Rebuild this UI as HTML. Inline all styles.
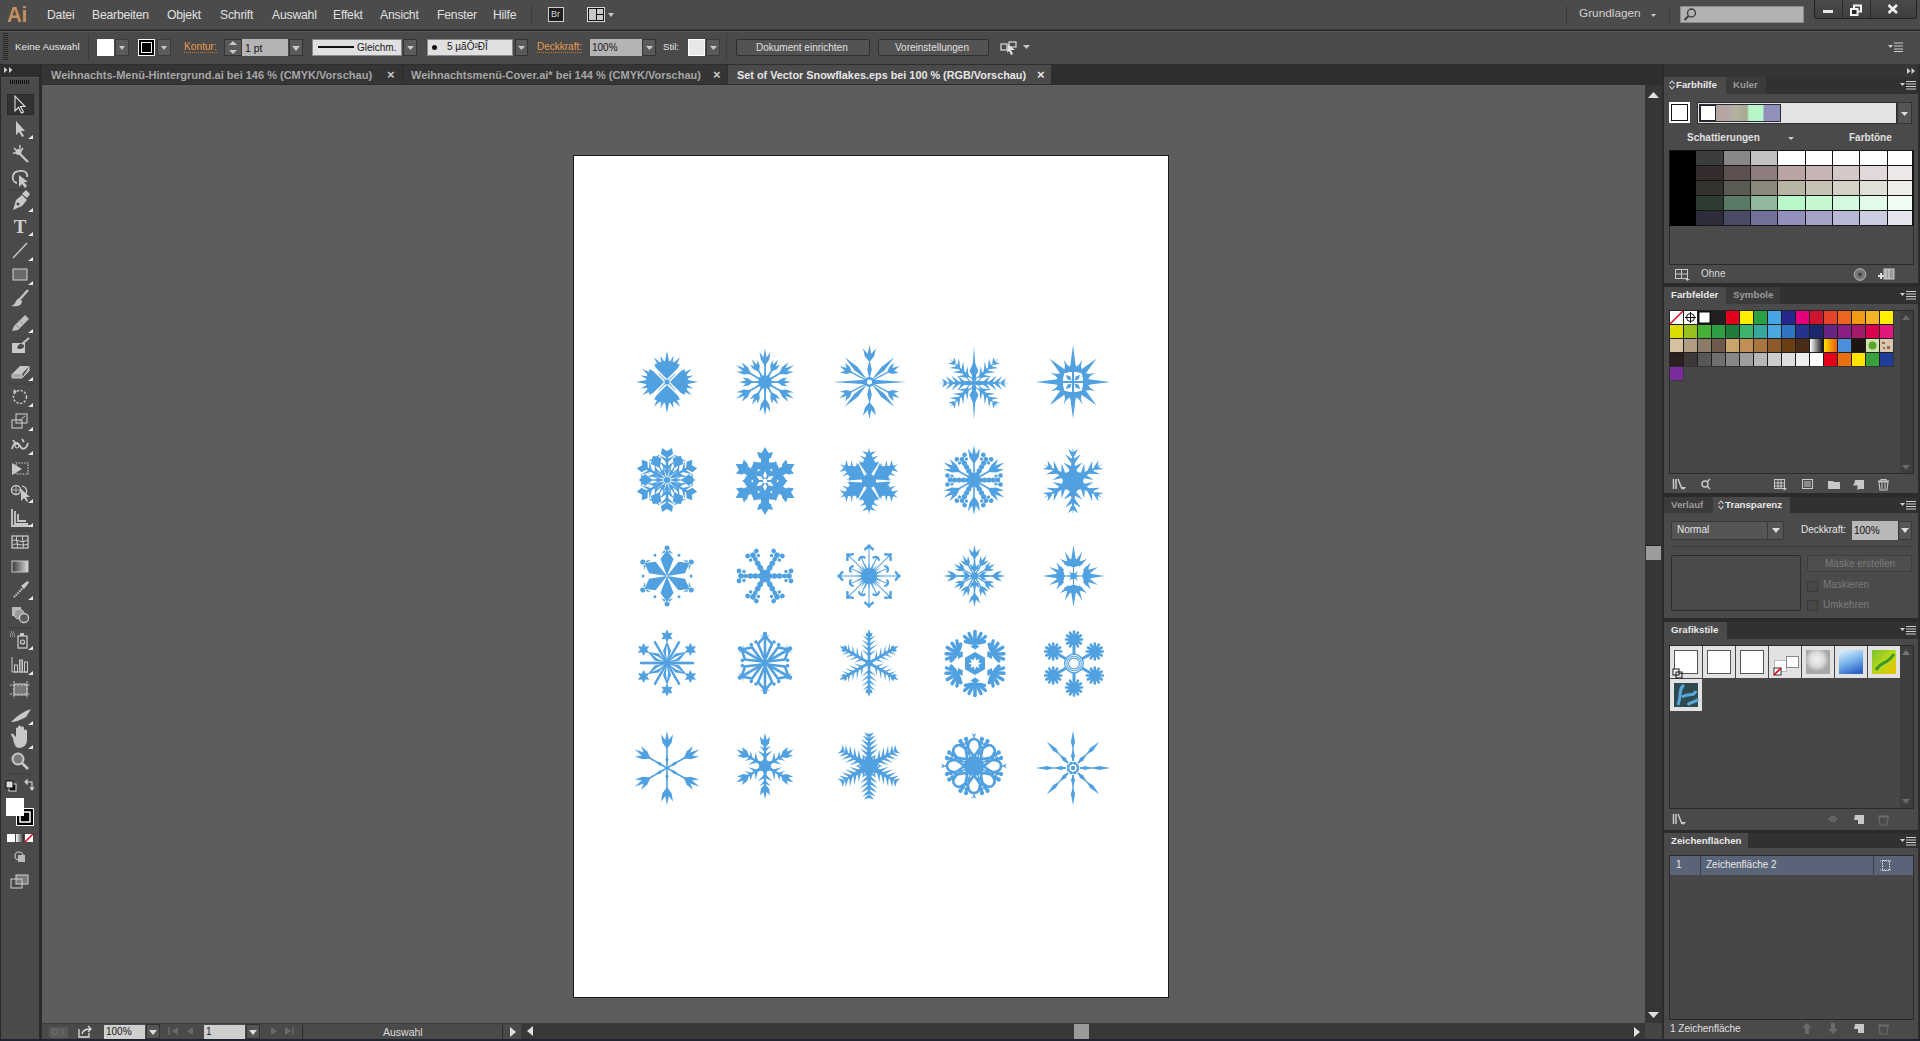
<!DOCTYPE html>
<html><head><meta charset="utf-8"><style>
*{margin:0;padding:0;box-sizing:border-box}
html,body{width:1920px;height:1041px;overflow:hidden;background:#5e5e5e;font-family:"Liberation Sans",sans-serif}
.a{position:absolute}
.t{position:absolute;white-space:nowrap;line-height:1}
</style></head><body>
<div class="a" style="left:0px;top:0px;width:1920px;height:29px;background:#4b4b4b"></div><div class="a" style="left:0px;top:25px;width:1920px;height:1px;background:#424242"></div><div class="a" style="left:0px;top:26px;width:1920px;height:1px;background:#525252"></div><div class="a" style="left:0px;top:29px;width:1920px;height:1px;background:#393939"></div><div class="a" style="left:0px;top:30px;width:1920px;height:1px;background:#262626"></div><div class="a" style="left:0px;top:31px;width:1920px;height:1px;background:#5a5a5a"></div><div class="t" style="left:7px;top:3.5px;font-size:22px;color:#c4915f;font-weight:bold;letter-spacing:-0.3px;transform:scaleX(0.93);transform-origin:0 0">Ai</div><div class="t" style="left:47px;top:9px;font-size:12.2px;letter-spacing:-0.2px;color:#e0e0e0">Datei</div><div class="t" style="left:92px;top:9px;font-size:12.2px;letter-spacing:-0.2px;color:#e0e0e0">Bearbeiten</div><div class="t" style="left:167px;top:9px;font-size:12.2px;letter-spacing:-0.2px;color:#e0e0e0">Objekt</div><div class="t" style="left:220px;top:9px;font-size:12.2px;letter-spacing:-0.2px;color:#e0e0e0">Schrift</div><div class="t" style="left:272px;top:9px;font-size:12.2px;letter-spacing:-0.2px;color:#e0e0e0">Auswahl</div><div class="t" style="left:333px;top:9px;font-size:12.2px;letter-spacing:-0.2px;color:#e0e0e0">Effekt</div><div class="t" style="left:380px;top:9px;font-size:12.2px;letter-spacing:-0.2px;color:#e0e0e0">Ansicht</div><div class="t" style="left:437px;top:9px;font-size:12.2px;letter-spacing:-0.2px;color:#e0e0e0">Fenster</div><div class="t" style="left:493px;top:9px;font-size:12.2px;letter-spacing:-0.2px;color:#e0e0e0">Hilfe</div><div class="a" style="left:531px;top:6px;width:1px;height:18px;background:#3a3a3a"></div><div class="a" style="left:548px;top:7px;width:16px;height:15px;border:1px solid #d0d0d0;background:#1e1e1e"></div><div class="t" style="left:551px;top:10px;font-size:9px;color:#d8d8d8">Br</div><div class="a" style="left:587px;top:7px;width:18px;height:15px;border:1px solid #d8d8d8;background:#111"></div><div class="a" style="left:589px;top:9px;width:7px;height:11px;background:#c8c8c8"></div><div class="a" style="left:597px;top:9px;width:6px;height:5px;background:#c8c8c8"></div><div class="a" style="left:597px;top:15px;width:6px;height:5px;background:#c8c8c8"></div><svg class="a" style="left:608px;top:13px" width="6" height="4"><path d="M0 0H6L3.0 4Z" fill="#c8c8c8"/></svg><div class="a" style="left:1566px;top:6px;width:1px;height:18px;background:#3a3a3a"></div><div class="t" style="left:1579px;top:8px;font-size:11.8px;color:#d0d0d0">Grundlagen</div><svg class="a" style="left:1651px;top:14px" width="5" height="3"><path d="M0 0H5L2.5 3Z" fill="#c8c8c8"/></svg><div class="a" style="left:1669px;top:6px;width:1px;height:18px;background:#3a3a3a"></div><div class="a" style="left:1680px;top:6px;width:124px;height:17px;background:#b2b2b2;border:1px solid #8a8a8a"></div><svg class="a" style="left:1682px;top:7px" width="16" height="16"><circle cx="9.5" cy="6" r="4" fill="none" stroke="#3a3a3a" stroke-width="1.3"/><path d="M6.5 9L2.5 13" stroke="#3a3a3a" stroke-width="1.8"/></svg><div class="a" style="left:1814px;top:0px;width:103px;height:19px;background:linear-gradient(#4a4a4a,#3e3e3e);border:1px solid #222;border-top:none;border-radius:0 0 3px 3px"></div><div class="a" style="left:1842px;top:0px;width:1px;height:18px;background:#2a2a2a"></div><div class="a" style="left:1870px;top:0px;width:1px;height:18px;background:#2a2a2a"></div><div class="a" style="left:1823px;top:10px;width:10px;height:3px;background:#e8e8e8"></div><svg class="a" style="left:1849px;top:4px" width="14" height="12"><rect x="5" y="1.5" width="7" height="6" fill="none" stroke="#f0f0f0" stroke-width="2"/><rect x="2" y="5" width="6.5" height="6" fill="#222" stroke="#f0f0f0" stroke-width="2"/></svg><svg class="a" style="left:1887px;top:4px" width="12" height="10"><path d="M1.5 1L10 9M10 1L1.5 9" stroke="#f0f0f0" stroke-width="2.6"/></svg><div class="a" style="left:0px;top:32px;width:1920px;height:32px;background:#4a4a4a"></div><div class="a" style="left:3px;top:33px;width:5px;height:27px;background:repeating-linear-gradient(#2a2a2a 0 1px,transparent 1px 2px)"></div><div class="t" style="left:15px;top:42px;font-size:9.9px;color:#e6e6e6">Keine Auswahl</div><div class="a" style="left:88px;top:34px;width:1px;height:27px;background:#3c3c3c"></div><div class="a" style="left:97px;top:39px;width:17px;height:17px;background:#ffffff"></div><div class="a" style="left:115px;top:39px;width:14px;height:17px;background:#5a5a5a;border:1px solid #3c3c3c"></div><svg class="a" style="left:119px;top:46px" width="6" height="4"><path d="M0 0H6L3.0 4Z" fill="#c8c8c8"/></svg><div class="a" style="left:138px;top:39px;width:17px;height:17px;background:#000;border:1px solid #fff"></div><div class="a" style="left:141px;top:42px;width:11px;height:11px;border:1.5px solid #fff;background:#000"></div><div class="a" style="left:157px;top:39px;width:14px;height:17px;background:#5a5a5a;border:1px solid #3c3c3c"></div><svg class="a" style="left:161px;top:46px" width="6" height="4"><path d="M0 0H6L3.0 4Z" fill="#c8c8c8"/></svg><div class="t" style="left:184px;top:42px;font-size:10.2px;color:#e89a4c;border-bottom:1px dotted #c07a3c;padding-bottom:0px">Kontur:</div><div class="a" style="left:224px;top:39px;width:18px;height:17px;background:#5a5a5a;border:1px solid #333"></div><svg class="a" style="left:228px;top:40px" width="10" height="15"><path d="M1 5L5 1L9 5Z M1 10L5 14L9 10Z" fill="#c8c8c8"/></svg><div class="a" style="left:242px;top:39px;width:46px;height:17px;background:#b4b4b4"></div><div class="t" style="left:245px;top:43px;font-size:10.5px;color:#1a1a1a">1 pt</div><div class="a" style="left:289px;top:39px;width:14px;height:17px;background:#5a5a5a;border:1px solid #333"></div><svg class="a" style="left:292px;top:46px" width="8" height="5"><path d="M0 0H8L4.0 5Z" fill="#c8c8c8"/></svg><div class="a" style="left:312px;top:39px;width:90px;height:17px;background:#e0e0e0;border:1px solid #888"></div><div class="a" style="left:318px;top:46px;width:36px;height:2px;background:#111"></div><div class="t" style="left:357px;top:43px;font-size:10px;color:#1a1a1a">Gleichm.</div><div class="a" style="left:403px;top:39px;width:14px;height:17px;background:#5a5a5a;border:1px solid #333"></div><svg class="a" style="left:407px;top:46px" width="7" height="4"><path d="M0 0H7L3.5 4Z" fill="#c8c8c8"/></svg><div class="a" style="left:427px;top:39px;width:86px;height:17px;background:#e0e0e0;border:1px solid #888"></div><div class="a" style="left:432px;top:45px;width:5px;height:5px;border-radius:50%;background:#111"></div><div class="t" style="left:447px;top:42px;font-size:10px;color:#1a1a1a">5 µãÔ²ÐÎ</div><div class="a" style="left:515px;top:39px;width:13px;height:17px;background:#5a5a5a;border:1px solid #333"></div><svg class="a" style="left:518px;top:46px" width="7" height="4"><path d="M0 0H7L3.5 4Z" fill="#c8c8c8"/></svg><div class="t" style="left:537px;top:42px;font-size:10px;color:#e89a4c;border-bottom:1px dotted #c07a3c">Deckkraft:</div><div class="a" style="left:590px;top:39px;width:52px;height:17px;background:#b4b4b4"></div><div class="t" style="left:592px;top:43px;font-size:10px;color:#1a1a1a">100%</div><div class="a" style="left:642px;top:39px;width:14px;height:17px;background:#5a5a5a;border:1px solid #333"></div><svg class="a" style="left:646px;top:46px" width="7" height="4"><path d="M0 0H7L3.5 4Z" fill="#c8c8c8"/></svg><div class="t" style="left:663px;top:42px;font-size:9.6px;color:#e6e6e6">Stil:</div><div class="a" style="left:688px;top:39px;width:17px;height:17px;background:#e8e8e8;border:1px solid #fff"></div><div class="a" style="left:706px;top:39px;width:14px;height:17px;background:#5a5a5a;border:1px solid #3c3c3c"></div><svg class="a" style="left:710px;top:46px" width="7" height="4"><path d="M0 0H7L3.5 4Z" fill="#c8c8c8"/></svg><div class="a" style="left:726px;top:34px;width:1px;height:27px;background:#3c3c3c"></div><div class="a" style="left:736px;top:39px;width:134px;height:17px;background:#535353;border:1px solid #2f2f2f;border-radius:2px"></div><div class="t" style="left:756px;top:43px;font-size:10px;color:#e0e0e0">Dokument einrichten</div><div class="a" style="left:878px;top:39px;width:111px;height:17px;background:#535353;border:1px solid #2f2f2f;border-radius:2px"></div><div class="t" style="left:895px;top:43px;font-size:10px;color:#e0e0e0">Voreinstellungen</div><svg class="a" style="left:1000px;top:40px" width="18" height="16"><rect x="1" y="4" width="6" height="6" fill="none" stroke="#ddd" stroke-width="1.2"/><rect x="9" y="2" width="7" height="5" fill="none" stroke="#ddd" stroke-width="1.2"/><path d="M8 4L15 10L11 10L13 14L11 15L9 11L7 13Z" fill="#ddd"/></svg><svg class="a" style="left:1023px;top:45px" width="7" height="4"><path d="M0 0H7L3.5 4Z" fill="#c8c8c8"/></svg><svg class="a" style="left:1888px;top:42px" width="16" height="10"><path d="M0 3H5L2.5 6Z" fill="#ccc"/><path d="M6 1H15M6 4H15M6 7H15M6 9.5H15" stroke="#ccc" stroke-width="1"/></svg><div class="a" style="left:0px;top:64px;width:42px;height:977px;background:#2e2e2e"></div><div class="a" style="left:42px;top:64px;width:1620px;height:21px;background:#2e2e2e"></div><div class="a" style="left:42px;top:65px;width:360px;height:19px;background:#353535"></div><div class="a" style="left:402px;top:65px;width:325px;height:19px;background:#353535;border-left:1px solid #2a2a2a"></div><div class="a" style="left:728px;top:65px;width:323px;height:19px;background:#4a4a4a"></div><div class="t" style="left:51px;top:70px;font-size:11px;font-weight:bold;color:#a6a6a6">Weihnachts-Menü-Hintergrund.ai bei 146 % (CMYK/Vorschau)</div><div class="t" style="left:387px;top:67.5px;font-size:13px;font-weight:bold;color:#c8c8c8">×</div><div class="t" style="left:411px;top:70px;font-size:11px;font-weight:bold;color:#a6a6a6">Weihnachtsmenü-Cover.ai* bei 144 % (CMYK/Vorschau)</div><div class="t" style="left:713px;top:67.5px;font-size:13px;font-weight:bold;color:#c8c8c8">×</div><div class="t" style="left:737px;top:70px;font-size:10.85px;font-weight:bold;color:#e6e6e6">Set of Vector Snowflakes.eps bei 100 % (RGB/Vorschau)</div><div class="t" style="left:1037px;top:67.5px;font-size:13px;font-weight:bold;color:#e6e6e6">×</div><div class="a" style="left:42px;top:85px;width:1603px;height:938px;background:#5d5d5d"></div><div class="a" style="left:573px;top:155px;width:596px;height:843px;background:#fff;border:1px solid #1a1a1a"></div><div class="a" style="left:1645px;top:85px;width:17px;height:938px;background:#363636"></div><svg class="a" style="left:1648px;top:92px" width="11" height="6"><path d="M0 6H11L5.5 0Z" fill="#e0e0e0"/></svg><svg class="a" style="left:1648px;top:1012px" width="11" height="6"><path d="M0 0H11L5.5 6Z" fill="#e0e0e0"/></svg><div class="a" style="left:1646px;top:545px;width:15px;height:15px;background:#9c9c9c;border-top:1px solid #222"></div><div class="a" style="left:42px;top:1023px;width:479px;height:16px;background:#4a4a4a;border-top:1px solid #3a3a3a"></div><div class="a" style="left:521px;top:1023px;width:1124px;height:16px;background:#383838"></div><div class="a" style="left:1645px;top:1023px;width:17px;height:16px;background:#454545"></div><div class="a" style="left:49px;top:1027px;width:19px;height:11px;background:#5a5a5a;border-radius:2px"></div><svg class="a" style="left:51px;top:1028px" width="16" height="9"><circle cx="4" cy="4" r="2.5" fill="none" stroke="#6e6e6e" stroke-width="1.2"/><path d="M9 2L12 2L12 6" fill="none" stroke="#6e6e6e" stroke-width="1.2"/></svg><svg class="a" style="left:78px;top:1025px" width="15" height="13"><path d="M1 4V12H11V8" fill="none" stroke="#ddd" stroke-width="1.3"/><path d="M4 9C5 5 8 4 12 4M10 1L13 4L10 7" fill="none" stroke="#ddd" stroke-width="1.3"/></svg><div class="a" style="left:104px;top:1025px;width:41px;height:14px;background:#cfcfcf"></div><div class="t" style="left:106px;top:1027px;font-size:10px;color:#1a1a1a">100%</div><div class="a" style="left:146px;top:1024px;width:14px;height:15px;background:#555;border:1px solid #333"></div><svg class="a" style="left:149px;top:1030px" width="8" height="5"><path d="M0 0H8L4.0 5Z" fill="#ddd"/></svg><svg class="a" style="left:168px;top:1026px" width="30" height="10"><path d="M1 1V9" stroke="#6a6a6a" stroke-width="1.5"/><path d="M10 1V9L4 5Z M25 1V9L19 5Z" fill="#6a6a6a"/></svg><div class="a" style="left:204px;top:1025px;width:41px;height:14px;background:#cfcfcf"></div><div class="t" style="left:206px;top:1027px;font-size:10px;color:#1a1a1a">1</div><div class="a" style="left:246px;top:1024px;width:14px;height:15px;background:#555;border:1px solid #333"></div><svg class="a" style="left:249px;top:1030px" width="8" height="5"><path d="M0 0H8L4.0 5Z" fill="#ddd"/></svg><svg class="a" style="left:270px;top:1026px" width="30" height="10"><path d="M1 1V9L7 5Z M15 1V9L21 5Z" fill="#6a6a6a"/><path d="M23 1V9" stroke="#6a6a6a" stroke-width="1.5"/></svg><div class="a" style="left:302px;top:1025px;width:1px;height:15px;background:#2a2a2a"></div><div class="t" style="left:383px;top:1027px;font-size:10.5px;color:#dcdcdc">Auswahl</div><div class="a" style="left:502px;top:1025px;width:1px;height:15px;background:#2a2a2a"></div><svg class="a" style="left:510px;top:1027px" width="6" height="10"><path d="M0 0V10L6 5.0Z" fill="#e0e0e0"/></svg><svg class="a" style="left:527px;top:1026px" width="6" height="10"><path d="M6 0V10L0 5.0Z" fill="#e0e0e0"/></svg><div class="a" style="left:1074px;top:1024px;width:15px;height:15px;background:#9a9a9a"></div><svg class="a" style="left:1634px;top:1027px" width="6" height="10"><path d="M0 0V10L6 5.0Z" fill="#e0e0e0"/></svg><div class="a" style="left:0px;top:64px;width:1px;height:977px;background:#2a2a2a"></div><div class="a" style="left:1px;top:77px;width:38px;height:964px;background:#4a4a4a"></div><div class="a" style="left:1px;top:77px;width:38px;height:1px;background:#585858"></div><div class="a" style="left:39px;top:64px;width:3px;height:977px;background:#2b2b2b"></div><div class="a" style="left:0px;top:64px;width:40px;height:13px;background:#2e2e2e"></div><svg class="a" style="left:4px;top:67px" width="10" height="7"><path d="M0 0V6L3.5 3Z M5 0V6L8.5 3Z" fill="#cfcfcf"/></svg><div class="a" style="left:10px;top:80px;width:20px;height:4px;background:repeating-linear-gradient(90deg,#111 0 1px,transparent 1px 2px)"></div><div class="a" style="left:7px;top:94px;width:27px;height:21px;background:#323232;border:1px solid #2a2a2a"></div><svg class="a" style="left:0;top:0" width="42" height="900"><path d="M15 96V111L18.5 107.5L21.5 113L23.5 112L20.5 106.5H25Z" fill="none" stroke="#e0e0e0" stroke-width="1.1"/><path d="M16 121V135L19 132L22 137L24 136L21 131H25Z" fill="#c8c8c8"/><path d="M33 139H28L33 135Z" fill="#e8e8e8"/><path d="M14 148L17 151M20 145V149M23 148L21 151M13 153H17" stroke="#c8c8c8" stroke-width="1.5"/><circle cx="18.5" cy="152" r="3" fill="#c8c8c8"/><path d="M19 153L28 162" stroke="#c8c8c8" stroke-width="2.2"/><path d="M17 183C11 182 11 172 19 171C25 170 28 173 27 177" fill="none" stroke="#c8c8c8" stroke-width="1.8"/><path d="M19 175V187L22 184L25 188L27 186L24 182H28Z" fill="#c8c8c8"/><path d="M8 190H33" stroke="#3e3e3e" stroke-width="1"/><path d="M13 210L16 200L22 195L27 200L22 206Z" fill="#c8c8c8"/><circle cx="18" cy="204" r="1.5" fill="#4a4a4a"/><path d="M22 194L26 190L30 194L27 198" fill="#c8c8c8"/><path d="M33 212H28L33 208Z" fill="#e8e8e8"/><text x="20" y="233" text-anchor="middle" font-family="Liberation Serif" font-weight="bold" font-size="19" fill="#d0d0d0">T</text><path d="M33 236H28L33 232Z" fill="#e8e8e8"/><path d="M13 258L27 243" stroke="#c8c8c8" stroke-width="1.4"/><path d="M33 261H28L33 257Z" fill="#e8e8e8"/><rect x="13" y="269" width="14" height="11" fill="#6a6a6a" stroke="#cfcfcf" stroke-width="1"/><path d="M33 285H28L33 281Z" fill="#e8e8e8"/><path d="M28 290L20 299" stroke="#c8c8c8" stroke-width="2.3"/><path d="M19 298C15 300 16 305 11 306C16 307 22 306 22 301Z" fill="#c8c8c8"/><path d="M12 331L14 326L25 315L29 319L18 330Z" fill="#c0c0c0"/><path d="M16 325L20 329M20 321L24 325" stroke="#8a8a8a" stroke-width="1"/><path d="M33 333H28L33 329Z" fill="#e8e8e8"/><rect x="12" y="343" width="13" height="10" fill="#c8c8c8"/><path d="M17 348C19 342 24 343 24 346C24 349 19 350 17 348Z" fill="#4a4a4a"/><path d="M22 344L29 338" stroke="#c8c8c8" stroke-width="1.8"/><path d="M12 374L20 366H29L22 374Z" fill="#c8c8c8"/><path d="M12 374V378H22V374M22 378L29 371V366" fill="#a8a8a8" stroke="#c8c8c8" stroke-width="1"/><path d="M33 381H28L33 377Z" fill="#e8e8e8"/><path d="M8 384H33" stroke="#3e3e3e" stroke-width="1"/><circle cx="20" cy="397" r="6.5" fill="none" stroke="#c8c8c8" stroke-width="1.5" stroke-dasharray="2.2 1.6"/><path d="M14 389L17 392L13 393Z" fill="#c8c8c8"/><path d="M33 407H28L33 403Z" fill="#e8e8e8"/><rect x="12" y="420" width="10" height="8" fill="none" stroke="#c8c8c8" stroke-width="1.1"/><rect x="16" y="414" width="11" height="9" fill="none" stroke="#c8c8c8" stroke-width="1.1"/><path d="M19 421L25 416" stroke="#c8c8c8" stroke-width="1"/><path d="M33 431H28L33 427Z" fill="#e8e8e8"/><path d="M12 449C14 441 18 442 20 446C22 450 26 450 28 443M13 440L16 444M22 439L24 442" fill="none" stroke="#c8c8c8" stroke-width="1.8"/><circle cx="17" cy="446" r="2" fill="#4a4a4a" stroke="#e0e0e0" stroke-width="1"/><path d="M33 455H28L33 451Z" fill="#e8e8e8"/><rect x="16" y="463" width="12" height="11" fill="none" stroke="#c8c8c8" stroke-width="1.2" stroke-dasharray="1.5 1.2"/><path d="M12 463L22 469L12 475Z" fill="#c8c8c8"/><circle cx="16" cy="490" r="4.5" fill="none" stroke="#c8c8c8" stroke-width="1.4"/><path d="M11 490H21M16 486V494" stroke="#c8c8c8" stroke-width="0.8"/><path d="M22 486C27 487 28 492 25 495" fill="none" stroke="#c8c8c8" stroke-width="1.2"/><path d="M21 489V501L24 498L27 502L28 501L26 497H30Z" fill="#c8c8c8"/><path d="M33 503H28L33 499Z" fill="#e8e8e8"/><path d="M12 509V526H30M15 511V524H28M18 514V521H26" fill="none" stroke="#c8c8c8" stroke-width="1.8"/><path d="M33 527H28L33 523Z" fill="#e8e8e8"/><path d="M8 531H33" stroke="#3e3e3e" stroke-width="1"/><rect x="12" y="536" width="16" height="12" fill="none" stroke="#d0d0d0" stroke-width="1.2"/><path d="M12 541C16 538 20 544 28 540M13 545C17 542 21 547 28 544M17 536C15 540 19 544 17 548M23 536C21 540 25 544 23 548" fill="none" stroke="#d0d0d0" stroke-width="1"/><defs><linearGradient id="tg" x1="0" x2="1"><stop offset="0" stop-color="#3a3a3a"/><stop offset="1" stop-color="#d8d8d8"/></linearGradient></defs><rect x="12" y="561" width="16" height="11" fill="url(#tg)" stroke="#c8c8c8" stroke-width="1"/><path d="M14 597L23 588" stroke="#c8c8c8" stroke-width="2.2" stroke-dasharray="1.5 1"/><path d="M21 586L26 582C28 580 30 582 28 584L24 589Z" fill="#c8c8c8"/><path d="M33 600H28L33 596Z" fill="#e8e8e8"/><rect x="12" y="607" width="9" height="9" fill="#b8b8b8"/><circle cx="19" cy="614" r="5" fill="#999" stroke="#c8c8c8"/><circle cx="24" cy="618" r="4.5" fill="#5a5a5a" stroke="#c8c8c8" stroke-width="1.3"/><path d="M8 628H33" stroke="#3e3e3e" stroke-width="1"/><path d="M10 634H15M10 636H15M11 632H14" stroke="#c8c8c8" stroke-width="1" stroke-dasharray="1 1"/><rect x="18" y="636" width="9" height="12" fill="none" stroke="#d0d0d0" stroke-width="1.2"/><rect x="20" y="633" width="4" height="3" fill="#c8c8c8"/><circle cx="22.5" cy="642" r="2" fill="none" stroke="#d0d0d0" stroke-width="1.2"/><path d="M33 650H28L33 646Z" fill="#e8e8e8"/><path d="M12 657V672H28" fill="none" stroke="#c8c8c8" stroke-width="1"/><rect x="14.5" y="665" width="3" height="7" fill="none" stroke="#c8c8c8" stroke-width="1"/><rect x="19.5" y="660" width="3" height="12" fill="#888" stroke="#c8c8c8" stroke-width="1"/><rect x="24.5" y="662" width="3" height="10" fill="none" stroke="#c8c8c8" stroke-width="1"/><path d="M33 675H28L33 671Z" fill="#e8e8e8"/><rect x="14" y="684" width="13" height="11" fill="#777" stroke="#c8c8c8" stroke-width="1"/><path d="M10 685H31M10 694H31M14 681V699M27 681V699" stroke="#c8c8c8" stroke-width="1" stroke-dasharray="2 1.5"/><path d="M11 722C17 716 24 711 31 709L26 717C21 720 15 722 11 722Z" fill="#c8c8c8"/><path d="M33 725H28L33 721Z" fill="#e8e8e8"/><path d="M13 738L11 735C11 733 13 733 14 735L16 737V729C16 727 18 727 18 729V735V727C18 725 21 725 21 727V735V728C21 726 24 726 24 728V736V731C24 729 27 729 27 731V740C27 745 23 748 19 748C16 748 14 745 13 738Z" fill="#c8c8c8"/><path d="M33 749H28L33 745Z" fill="#e8e8e8"/><circle cx="18" cy="759" r="5.5" fill="#7a7a7a" stroke="#c8c8c8" stroke-width="2"/><path d="M22 763L28 769" stroke="#c8c8c8" stroke-width="2.6"/><path d="M8 774H33" stroke="#3e3e3e" stroke-width="1"/><rect x="9" y="784" width="7" height="7" fill="#111" stroke="#ddd" stroke-width="1"/><rect x="6" y="781" width="7" height="7" fill="#ddd" stroke="#111" stroke-width="1"/><path d="M25 782L27 780V784ZM27 782H32V789M30 787L32 790L34 787" fill="none" stroke="#ddd" stroke-width="1.1"/><rect x="16.5" y="808.5" width="17" height="17" fill="#000" stroke="#fff" stroke-width="1"/><rect x="20" y="812" width="10" height="10" fill="#000" stroke="#fff" stroke-width="1.5"/><rect x="6" y="798" width="18" height="18" fill="#fff"/><rect x="7" y="834" width="8" height="8" fill="#fff"/><defs><linearGradient id="tg2" x1="0" x2="1"><stop offset="0" stop-color="#fff"/><stop offset="1" stop-color="#222"/></linearGradient></defs><rect x="16" y="834" width="8" height="8" fill="url(#tg2)"/><rect x="25" y="834" width="8" height="8" fill="#fff"/><path d="M25 842L33 834" stroke="#e2001a" stroke-width="1.6"/><circle cx="19" cy="856" r="4" fill="none" stroke="#c8c8c8" stroke-width="1.2"/><rect x="18" y="855" width="7" height="7" fill="#bbb"/><rect x="16" y="875" width="12" height="9" fill="#7a7a7a" stroke="#d0d0d0" stroke-width="1"/><rect x="11" y="879" width="11" height="9" fill="none" stroke="#d0d0d0" stroke-width="1"/></svg><svg class="a" style="left:0;top:0" width="1920" height="1041"><g fill="#51a1e1"><g transform="translate(667 382)"><g transform="rotate(0)"><path d="M0 -3 L-13.5 -16.09 L-10.5 -18.19 L-7.18 -19.73 L-3.65 -20.68 L0 -21 L3.65 -20.68 L7.18 -19.73 L10.5 -18.19 L13.5 -16.09Z"/><path d="M-6.77 -15.74 L-16.07 -19.15 L-9.23 -11.98Z"/><path d="M-3.74 -16.45 L-13.15 -24.72 L-7.73 -13.43Z"/><path d="M-0.55 -16.55 L-6.53 -26.2 L-5.28 -14.92Z"/><path d="M3 -16 L0 -31 L-3 -16Z"/><path d="M5.28 -14.92 L6.53 -26.2 L0.55 -16.55Z"/><path d="M7.73 -13.43 L13.15 -24.72 L3.74 -16.45Z"/><path d="M9.23 -11.98 L16.07 -19.15 L6.77 -15.74Z"/></g><g transform="rotate(90)"><path d="M0 -3 L-13.5 -16.09 L-10.5 -18.19 L-7.18 -19.73 L-3.65 -20.68 L0 -21 L3.65 -20.68 L7.18 -19.73 L10.5 -18.19 L13.5 -16.09Z"/><path d="M-6.77 -15.74 L-16.07 -19.15 L-9.23 -11.98Z"/><path d="M-3.74 -16.45 L-13.15 -24.72 L-7.73 -13.43Z"/><path d="M-0.55 -16.55 L-6.53 -26.2 L-5.28 -14.92Z"/><path d="M3 -16 L0 -31 L-3 -16Z"/><path d="M5.28 -14.92 L6.53 -26.2 L0.55 -16.55Z"/><path d="M7.73 -13.43 L13.15 -24.72 L3.74 -16.45Z"/><path d="M9.23 -11.98 L16.07 -19.15 L6.77 -15.74Z"/></g><g transform="rotate(180)"><path d="M0 -3 L-13.5 -16.09 L-10.5 -18.19 L-7.18 -19.73 L-3.65 -20.68 L0 -21 L3.65 -20.68 L7.18 -19.73 L10.5 -18.19 L13.5 -16.09Z"/><path d="M-6.77 -15.74 L-16.07 -19.15 L-9.23 -11.98Z"/><path d="M-3.74 -16.45 L-13.15 -24.72 L-7.73 -13.43Z"/><path d="M-0.55 -16.55 L-6.53 -26.2 L-5.28 -14.92Z"/><path d="M3 -16 L0 -31 L-3 -16Z"/><path d="M5.28 -14.92 L6.53 -26.2 L0.55 -16.55Z"/><path d="M7.73 -13.43 L13.15 -24.72 L3.74 -16.45Z"/><path d="M9.23 -11.98 L16.07 -19.15 L6.77 -15.74Z"/></g><g transform="rotate(270)"><path d="M0 -3 L-13.5 -16.09 L-10.5 -18.19 L-7.18 -19.73 L-3.65 -20.68 L0 -21 L3.65 -20.68 L7.18 -19.73 L10.5 -18.19 L13.5 -16.09Z"/><path d="M-6.77 -15.74 L-16.07 -19.15 L-9.23 -11.98Z"/><path d="M-3.74 -16.45 L-13.15 -24.72 L-7.73 -13.43Z"/><path d="M-0.55 -16.55 L-6.53 -26.2 L-5.28 -14.92Z"/><path d="M3 -16 L0 -31 L-3 -16Z"/><path d="M5.28 -14.92 L6.53 -26.2 L0.55 -16.55Z"/><path d="M7.73 -13.43 L13.15 -24.72 L3.74 -16.45Z"/><path d="M9.23 -11.98 L16.07 -19.15 L6.77 -15.74Z"/></g><g transform="rotate(45)"><path fill="#fff" d="M0 -1 L-1.8 -10 L-2.2 -18 L-5 -26 L-8 -33 L8 -33 L5 -26 L2.2 -18 L1.8 -10Z"/></g><g transform="rotate(135)"><path fill="#fff" d="M0 -1 L-1.8 -10 L-2.2 -18 L-5 -26 L-8 -33 L8 -33 L5 -26 L2.2 -18 L1.8 -10Z"/></g><g transform="rotate(225)"><path fill="#fff" d="M0 -1 L-1.8 -10 L-2.2 -18 L-5 -26 L-8 -33 L8 -33 L5 -26 L2.2 -18 L1.8 -10Z"/></g><g transform="rotate(315)"><path fill="#fff" d="M0 -1 L-1.8 -10 L-2.2 -18 L-5 -26 L-8 -33 L8 -33 L5 -26 L2.2 -18 L1.8 -10Z"/></g><g transform="rotate(45)"><path d="M0.55 -1 L0.25 -12 L-0.25 -12 L-0.55 -1Z"/></g><g transform="rotate(135)"><path d="M0.55 -1 L0.25 -12 L-0.25 -12 L-0.55 -1Z"/></g><g transform="rotate(225)"><path d="M0.55 -1 L0.25 -12 L-0.25 -12 L-0.55 -1Z"/></g><g transform="rotate(315)"><path d="M0.55 -1 L0.25 -12 L-0.25 -12 L-0.55 -1Z"/></g><circle r="2.5"/></g><g transform="translate(765 382)"><g transform="rotate(0)"><rect x="-0.9" y="-18" width="1.8" height="18"/><path d="M0.8 -17 L2.03 -22.77 L0 -33.5 L-2.03 -22.77 L-0.8 -17Z"/><path d="M0.55 -17.23 L-0.82 -23.55 L-5.5 -30 L-4.13 -22.15 L-0.55 -16.77Z"/><path d="M0.55 -16.77 L4.13 -22.15 L5.5 -30 L0.82 -23.55 L-0.55 -17.23Z"/></g><g transform="rotate(60)"><rect x="-0.9" y="-18" width="1.8" height="18"/><path d="M0.8 -17 L2.03 -22.77 L0 -33.5 L-2.03 -22.77 L-0.8 -17Z"/><path d="M0.55 -17.23 L-0.82 -23.55 L-5.5 -30 L-4.13 -22.15 L-0.55 -16.77Z"/><path d="M0.55 -16.77 L4.13 -22.15 L5.5 -30 L0.82 -23.55 L-0.55 -17.23Z"/></g><g transform="rotate(120)"><rect x="-0.9" y="-18" width="1.8" height="18"/><path d="M0.8 -17 L2.03 -22.77 L0 -33.5 L-2.03 -22.77 L-0.8 -17Z"/><path d="M0.55 -17.23 L-0.82 -23.55 L-5.5 -30 L-4.13 -22.15 L-0.55 -16.77Z"/><path d="M0.55 -16.77 L4.13 -22.15 L5.5 -30 L0.82 -23.55 L-0.55 -17.23Z"/></g><g transform="rotate(180)"><rect x="-0.9" y="-18" width="1.8" height="18"/><path d="M0.8 -17 L2.03 -22.77 L0 -33.5 L-2.03 -22.77 L-0.8 -17Z"/><path d="M0.55 -17.23 L-0.82 -23.55 L-5.5 -30 L-4.13 -22.15 L-0.55 -16.77Z"/><path d="M0.55 -16.77 L4.13 -22.15 L5.5 -30 L0.82 -23.55 L-0.55 -17.23Z"/></g><g transform="rotate(240)"><rect x="-0.9" y="-18" width="1.8" height="18"/><path d="M0.8 -17 L2.03 -22.77 L0 -33.5 L-2.03 -22.77 L-0.8 -17Z"/><path d="M0.55 -17.23 L-0.82 -23.55 L-5.5 -30 L-4.13 -22.15 L-0.55 -16.77Z"/><path d="M0.55 -16.77 L4.13 -22.15 L5.5 -30 L0.82 -23.55 L-0.55 -17.23Z"/></g><g transform="rotate(300)"><rect x="-0.9" y="-18" width="1.8" height="18"/><path d="M0.8 -17 L2.03 -22.77 L0 -33.5 L-2.03 -22.77 L-0.8 -17Z"/><path d="M0.55 -17.23 L-0.82 -23.55 L-5.5 -30 L-4.13 -22.15 L-0.55 -16.77Z"/><path d="M0.55 -16.77 L4.13 -22.15 L5.5 -30 L0.82 -23.55 L-0.55 -17.23Z"/></g><g transform="rotate(30)"><rect x="-0.9" y="-14" width="1.8" height="14"/><path d="M0.8 -13 L1.89 -17.55 L0 -26 L-1.89 -17.55 L-0.8 -13Z"/><path d="M0.54 -13.26 L-0.51 -17.99 L-4.5 -22.5 L-3.54 -16.56 L-0.54 -12.74Z"/><path d="M0.54 -12.74 L3.54 -16.56 L4.5 -22.5 L0.51 -17.99 L-0.54 -13.26Z"/></g><g transform="rotate(90)"><rect x="-0.9" y="-14" width="1.8" height="14"/><path d="M0.8 -13 L1.89 -17.55 L0 -26 L-1.89 -17.55 L-0.8 -13Z"/><path d="M0.54 -13.26 L-0.51 -17.99 L-4.5 -22.5 L-3.54 -16.56 L-0.54 -12.74Z"/><path d="M0.54 -12.74 L3.54 -16.56 L4.5 -22.5 L0.51 -17.99 L-0.54 -13.26Z"/></g><g transform="rotate(150)"><rect x="-0.9" y="-14" width="1.8" height="14"/><path d="M0.8 -13 L1.89 -17.55 L0 -26 L-1.89 -17.55 L-0.8 -13Z"/><path d="M0.54 -13.26 L-0.51 -17.99 L-4.5 -22.5 L-3.54 -16.56 L-0.54 -12.74Z"/><path d="M0.54 -12.74 L3.54 -16.56 L4.5 -22.5 L0.51 -17.99 L-0.54 -13.26Z"/></g><g transform="rotate(210)"><rect x="-0.9" y="-14" width="1.8" height="14"/><path d="M0.8 -13 L1.89 -17.55 L0 -26 L-1.89 -17.55 L-0.8 -13Z"/><path d="M0.54 -13.26 L-0.51 -17.99 L-4.5 -22.5 L-3.54 -16.56 L-0.54 -12.74Z"/><path d="M0.54 -12.74 L3.54 -16.56 L4.5 -22.5 L0.51 -17.99 L-0.54 -13.26Z"/></g><g transform="rotate(270)"><rect x="-0.9" y="-14" width="1.8" height="14"/><path d="M0.8 -13 L1.89 -17.55 L0 -26 L-1.89 -17.55 L-0.8 -13Z"/><path d="M0.54 -13.26 L-0.51 -17.99 L-4.5 -22.5 L-3.54 -16.56 L-0.54 -12.74Z"/><path d="M0.54 -12.74 L3.54 -16.56 L4.5 -22.5 L0.51 -17.99 L-0.54 -13.26Z"/></g><g transform="rotate(330)"><rect x="-0.9" y="-14" width="1.8" height="14"/><path d="M0.8 -13 L1.89 -17.55 L0 -26 L-1.89 -17.55 L-0.8 -13Z"/><path d="M0.54 -13.26 L-0.51 -17.99 L-4.5 -22.5 L-3.54 -16.56 L-0.54 -12.74Z"/><path d="M0.54 -12.74 L3.54 -16.56 L4.5 -22.5 L0.51 -17.99 L-0.54 -13.26Z"/></g><path d="M0 -10 L1.55 -5.8 L5 -8.66 L4.24 -4.24 L8.66 -5 L5.8 -1.55 L10 -0 L5.8 1.55 L8.66 5 L4.24 4.24 L5 8.66 L1.55 5.8 L0 10 L-1.55 5.8 L-5 8.66 L-4.24 4.24 L-8.66 5 L-5.8 1.55 L-10 0 L-5.8 -1.55 L-8.66 -5 L-4.24 -4.24 L-5 -8.66 L-1.55 -5.8Z"/><circle r="6.5"/></g><g transform="translate(869.5 382)"><g transform="rotate(0)"><path d="M0 -3 L-2.25 -12.5 L0 -22 L2.25 -12.5Z"/><path d="M0.8 -21 L2.16 -26.6 L0 -37 L-2.16 -26.6 L-0.8 -21Z"/><path d="M0.53 -21.28 L-1.22 -27.51 L-6.5 -33.5 L-4.63 -25.74 L-0.53 -20.72Z"/><path d="M0.53 -20.72 L4.63 -25.74 L6.5 -33.5 L1.22 -27.51 L-0.53 -21.28Z"/></g><g transform="rotate(180)"><path d="M0 -3 L-2.25 -12.5 L0 -22 L2.25 -12.5Z"/><path d="M0.8 -21 L2.16 -26.6 L0 -37 L-2.16 -26.6 L-0.8 -21Z"/><path d="M0.53 -21.28 L-1.22 -27.51 L-6.5 -33.5 L-4.63 -25.74 L-0.53 -20.72Z"/><path d="M0.53 -20.72 L4.63 -25.74 L6.5 -33.5 L1.22 -27.51 L-0.53 -21.28Z"/></g><g transform="rotate(90)"><path d="M2.25 -4 L0 -37 L-2.25 -4Z"/></g><g transform="rotate(270)"><path d="M2.25 -4 L0 -37 L-2.25 -4Z"/></g><g transform="rotate(45)"><path d="M0 -3 L-2.25 -19 L0 -35 L2.25 -19Z"/></g><g transform="rotate(135)"><path d="M0 -3 L-2.25 -19 L0 -35 L2.25 -19Z"/></g><g transform="rotate(225)"><path d="M0 -3 L-2.25 -19 L0 -35 L2.25 -19Z"/></g><g transform="rotate(315)"><path d="M0 -3 L-2.25 -19 L0 -35 L2.25 -19Z"/></g><g transform="rotate(62)"><rect x="-0.7" y="-22" width="1.4" height="22"/><path d="M0.8 -21 L2.03 -25.55 L0 -34 L-2.03 -25.55 L-0.8 -21Z"/><path d="M0.52 -21.3 L-0.92 -26.18 L-5.5 -30.5 L-4.03 -24.37 L-0.52 -20.7Z"/><path d="M0.52 -20.7 L4.03 -24.37 L5.5 -30.5 L0.92 -26.18 L-0.52 -21.3Z"/></g><g transform="rotate(118)"><rect x="-0.7" y="-22" width="1.4" height="22"/><path d="M0.8 -21 L2.03 -25.55 L0 -34 L-2.03 -25.55 L-0.8 -21Z"/><path d="M0.52 -21.3 L-0.92 -26.18 L-5.5 -30.5 L-4.03 -24.37 L-0.52 -20.7Z"/><path d="M0.52 -20.7 L4.03 -24.37 L5.5 -30.5 L0.92 -26.18 L-0.52 -21.3Z"/></g><g transform="rotate(242)"><rect x="-0.7" y="-22" width="1.4" height="22"/><path d="M0.8 -21 L2.03 -25.55 L0 -34 L-2.03 -25.55 L-0.8 -21Z"/><path d="M0.52 -21.3 L-0.92 -26.18 L-5.5 -30.5 L-4.03 -24.37 L-0.52 -20.7Z"/><path d="M0.52 -20.7 L4.03 -24.37 L5.5 -30.5 L0.92 -26.18 L-0.52 -21.3Z"/></g><g transform="rotate(298)"><rect x="-0.7" y="-22" width="1.4" height="22"/><path d="M0.8 -21 L2.03 -25.55 L0 -34 L-2.03 -25.55 L-0.8 -21Z"/><path d="M0.52 -21.3 L-0.92 -26.18 L-5.5 -30.5 L-4.03 -24.37 L-0.52 -20.7Z"/><path d="M0.52 -20.7 L4.03 -24.37 L5.5 -30.5 L0.92 -26.18 L-0.52 -21.3Z"/></g><circle r="5"/><circle r="2.5" fill="#fff"/></g><g transform="translate(974 383)"><g transform="rotate(0)"><path d="M2.5 0 L0 -37 L-2.5 0Z"/><path d="M0 -4 L-4.5 -12 L0 -22 L4.5 -12Z"/></g><g transform="rotate(180)"><path d="M2.5 0 L0 -37 L-2.5 0Z"/><path d="M0 -4 L-4.5 -12 L0 -22 L4.5 -12Z"/></g><g transform="rotate(45)"><path d="M2.5 0 L0 -35 L-2.5 0Z"/><path d="M1.14 -11.26 L-7.43 -16.69 L-1.14 -8.74Z"/><path d="M1.14 -8.74 L7.43 -16.69 L-1.14 -11.26Z"/><path d="M1.14 -17.26 L-7.43 -22.69 L-1.14 -14.74Z"/><path d="M1.14 -14.74 L7.43 -22.69 L-1.14 -17.26Z"/><path d="M1.14 -23.26 L-6.69 -28.02 L-1.14 -20.74Z"/><path d="M1.14 -20.74 L6.69 -28.02 L-1.14 -23.26Z"/><path d="M1.14 -29.26 L-4.46 -32.01 L-1.14 -26.74Z"/><path d="M1.14 -26.74 L4.46 -32.01 L-1.14 -29.26Z"/></g><g transform="rotate(90)"><path d="M2.5 0 L0 -35 L-2.5 0Z"/><path d="M1.14 -11.26 L-7.43 -16.69 L-1.14 -8.74Z"/><path d="M1.14 -8.74 L7.43 -16.69 L-1.14 -11.26Z"/><path d="M1.14 -17.26 L-7.43 -22.69 L-1.14 -14.74Z"/><path d="M1.14 -14.74 L7.43 -22.69 L-1.14 -17.26Z"/><path d="M1.14 -23.26 L-6.69 -28.02 L-1.14 -20.74Z"/><path d="M1.14 -20.74 L6.69 -28.02 L-1.14 -23.26Z"/><path d="M1.14 -29.26 L-4.46 -32.01 L-1.14 -26.74Z"/><path d="M1.14 -26.74 L4.46 -32.01 L-1.14 -29.26Z"/></g><g transform="rotate(135)"><path d="M2.5 0 L0 -35 L-2.5 0Z"/><path d="M1.14 -11.26 L-7.43 -16.69 L-1.14 -8.74Z"/><path d="M1.14 -8.74 L7.43 -16.69 L-1.14 -11.26Z"/><path d="M1.14 -17.26 L-7.43 -22.69 L-1.14 -14.74Z"/><path d="M1.14 -14.74 L7.43 -22.69 L-1.14 -17.26Z"/><path d="M1.14 -23.26 L-6.69 -28.02 L-1.14 -20.74Z"/><path d="M1.14 -20.74 L6.69 -28.02 L-1.14 -23.26Z"/><path d="M1.14 -29.26 L-4.46 -32.01 L-1.14 -26.74Z"/><path d="M1.14 -26.74 L4.46 -32.01 L-1.14 -29.26Z"/></g><g transform="rotate(225)"><path d="M2.5 0 L0 -35 L-2.5 0Z"/><path d="M1.14 -11.26 L-7.43 -16.69 L-1.14 -8.74Z"/><path d="M1.14 -8.74 L7.43 -16.69 L-1.14 -11.26Z"/><path d="M1.14 -17.26 L-7.43 -22.69 L-1.14 -14.74Z"/><path d="M1.14 -14.74 L7.43 -22.69 L-1.14 -17.26Z"/><path d="M1.14 -23.26 L-6.69 -28.02 L-1.14 -20.74Z"/><path d="M1.14 -20.74 L6.69 -28.02 L-1.14 -23.26Z"/><path d="M1.14 -29.26 L-4.46 -32.01 L-1.14 -26.74Z"/><path d="M1.14 -26.74 L4.46 -32.01 L-1.14 -29.26Z"/></g><g transform="rotate(270)"><path d="M2.5 0 L0 -35 L-2.5 0Z"/><path d="M1.14 -11.26 L-7.43 -16.69 L-1.14 -8.74Z"/><path d="M1.14 -8.74 L7.43 -16.69 L-1.14 -11.26Z"/><path d="M1.14 -17.26 L-7.43 -22.69 L-1.14 -14.74Z"/><path d="M1.14 -14.74 L7.43 -22.69 L-1.14 -17.26Z"/><path d="M1.14 -23.26 L-6.69 -28.02 L-1.14 -20.74Z"/><path d="M1.14 -20.74 L6.69 -28.02 L-1.14 -23.26Z"/><path d="M1.14 -29.26 L-4.46 -32.01 L-1.14 -26.74Z"/><path d="M1.14 -26.74 L4.46 -32.01 L-1.14 -29.26Z"/></g><g transform="rotate(315)"><path d="M2.5 0 L0 -35 L-2.5 0Z"/><path d="M1.14 -11.26 L-7.43 -16.69 L-1.14 -8.74Z"/><path d="M1.14 -8.74 L7.43 -16.69 L-1.14 -11.26Z"/><path d="M1.14 -17.26 L-7.43 -22.69 L-1.14 -14.74Z"/><path d="M1.14 -14.74 L7.43 -22.69 L-1.14 -17.26Z"/><path d="M1.14 -23.26 L-6.69 -28.02 L-1.14 -20.74Z"/><path d="M1.14 -20.74 L6.69 -28.02 L-1.14 -23.26Z"/><path d="M1.14 -29.26 L-4.46 -32.01 L-1.14 -26.74Z"/><path d="M1.14 -26.74 L4.46 -32.01 L-1.14 -29.26Z"/></g><circle r="6"/><g transform="rotate(45)"><path fill="#fff" d="M0 -2 L-1.5 -5 L0 -9 L1.5 -5Z"/></g><g transform="rotate(135)"><path fill="#fff" d="M0 -2 L-1.5 -5 L0 -9 L1.5 -5Z"/></g><g transform="rotate(225)"><path fill="#fff" d="M0 -2 L-1.5 -5 L0 -9 L1.5 -5Z"/></g><g transform="rotate(315)"><path fill="#fff" d="M0 -2 L-1.5 -5 L0 -9 L1.5 -5Z"/></g></g><g transform="translate(1073 382)"><g transform="rotate(0)"><path d="M3.5 -10 L0 -37 L-3.5 -10Z"/></g><g transform="rotate(90)"><path d="M3.5 -10 L0 -37 L-3.5 -10Z"/></g><g transform="rotate(180)"><path d="M3.5 -10 L0 -37 L-3.5 -10Z"/></g><g transform="rotate(270)"><path d="M3.5 -10 L0 -37 L-3.5 -10Z"/></g><g transform="rotate(45)"><path d="M3.5 -12 L0 -33 L-3.5 -12Z"/></g><g transform="rotate(135)"><path d="M3.5 -12 L0 -33 L-3.5 -12Z"/></g><g transform="rotate(225)"><path d="M3.5 -12 L0 -33 L-3.5 -12Z"/></g><g transform="rotate(315)"><path d="M3.5 -12 L0 -33 L-3.5 -12Z"/></g><g transform="rotate(22.5)"><path d="M2.5 -10 L0 -24 L-2.5 -10Z"/></g><g transform="rotate(67.5)"><path d="M2.5 -10 L0 -24 L-2.5 -10Z"/></g><g transform="rotate(112.5)"><path d="M2.5 -10 L0 -24 L-2.5 -10Z"/></g><g transform="rotate(157.5)"><path d="M2.5 -10 L0 -24 L-2.5 -10Z"/></g><g transform="rotate(202.5)"><path d="M2.5 -10 L0 -24 L-2.5 -10Z"/></g><g transform="rotate(247.5)"><path d="M2.5 -10 L0 -24 L-2.5 -10Z"/></g><g transform="rotate(292.5)"><path d="M2.5 -10 L0 -24 L-2.5 -10Z"/></g><g transform="rotate(337.5)"><path d="M2.5 -10 L0 -24 L-2.5 -10Z"/></g><path d="M7.65 -18.48 L9.19 -9.19 L18.48 -7.65 L13 -0 L18.48 7.65 L9.19 9.19 L7.65 18.48 L0 13 L-7.65 18.48 L-9.19 9.19 L-18.48 7.65 L-13 0 L-18.48 -7.65 L-9.19 -9.19 L-7.65 -18.48 L-0 -13Z"/><path d="M0 -19 L9.19 -9.19 L19 -0 L9.19 9.19 L0 19 L-9.19 9.19 L-19 0 L-9.19 -9.19Z"/><circle r="13"/><path fill="#fff" d="M-10 -10 L10 -10 L10 10 L-10 10Z"/><g transform="rotate(0)"><rect x="-1" y="-10" width="2" height="10"/></g><g transform="rotate(90)"><rect x="-1" y="-10" width="2" height="10"/></g><g transform="rotate(180)"><rect x="-1" y="-10" width="2" height="10"/></g><g transform="rotate(270)"><rect x="-1" y="-10" width="2" height="10"/></g><g transform="rotate(45)"><path d="M0 -2 L-2 -6 L0 -10 L2 -6Z"/></g><g transform="rotate(135)"><path d="M0 -2 L-2 -6 L0 -10 L2 -6Z"/></g><g transform="rotate(225)"><path d="M0 -2 L-2 -6 L0 -10 L2 -6Z"/></g><g transform="rotate(315)"><path d="M0 -2 L-2 -6 L0 -10 L2 -6Z"/></g><g transform="rotate(0)"><path d="M-10 -8.5 L-4 -9.75 L-4 -10.25 L-10 -11.5Z"/><path d="M-11.5 -10 L-10.25 -4 L-9.75 -4 L-8.5 -10Z"/></g><g transform="rotate(90)"><path d="M-10 -8.5 L-4 -9.75 L-4 -10.25 L-10 -11.5Z"/><path d="M-11.5 -10 L-10.25 -4 L-9.75 -4 L-8.5 -10Z"/></g><g transform="rotate(180)"><path d="M-10 -8.5 L-4 -9.75 L-4 -10.25 L-10 -11.5Z"/><path d="M-11.5 -10 L-10.25 -4 L-9.75 -4 L-8.5 -10Z"/></g><g transform="rotate(270)"><path d="M-10 -8.5 L-4 -9.75 L-4 -10.25 L-10 -11.5Z"/><path d="M-11.5 -10 L-10.25 -4 L-9.75 -4 L-8.5 -10Z"/></g></g><g transform="translate(667 480)"><g transform="rotate(0)"><rect x="-1.2" y="-27" width="2.4" height="27"/><path d="M0 -22 L-6 -26 L-5 -32 L0 -29 L5 -32 L6 -26Z"/><path d="M1.09 -13.3 L-8.43 -19.07 L-1.09 -10.7Z"/><path d="M1.09 -10.7 L8.43 -19.07 L-1.09 -13.3Z"/><path d="M0.9 -20.2 L-8 -25 L-0.9 -17.8Z"/><path d="M0.9 -17.8 L8 -25 L-0.9 -20.2Z"/></g><g transform="rotate(60)"><rect x="-1.2" y="-27" width="2.4" height="27"/><path d="M0 -22 L-6 -26 L-5 -32 L0 -29 L5 -32 L6 -26Z"/><path d="M1.09 -13.3 L-8.43 -19.07 L-1.09 -10.7Z"/><path d="M1.09 -10.7 L8.43 -19.07 L-1.09 -13.3Z"/><path d="M0.9 -20.2 L-8 -25 L-0.9 -17.8Z"/><path d="M0.9 -17.8 L8 -25 L-0.9 -20.2Z"/></g><g transform="rotate(120)"><rect x="-1.2" y="-27" width="2.4" height="27"/><path d="M0 -22 L-6 -26 L-5 -32 L0 -29 L5 -32 L6 -26Z"/><path d="M1.09 -13.3 L-8.43 -19.07 L-1.09 -10.7Z"/><path d="M1.09 -10.7 L8.43 -19.07 L-1.09 -13.3Z"/><path d="M0.9 -20.2 L-8 -25 L-0.9 -17.8Z"/><path d="M0.9 -17.8 L8 -25 L-0.9 -20.2Z"/></g><g transform="rotate(180)"><rect x="-1.2" y="-27" width="2.4" height="27"/><path d="M0 -22 L-6 -26 L-5 -32 L0 -29 L5 -32 L6 -26Z"/><path d="M1.09 -13.3 L-8.43 -19.07 L-1.09 -10.7Z"/><path d="M1.09 -10.7 L8.43 -19.07 L-1.09 -13.3Z"/><path d="M0.9 -20.2 L-8 -25 L-0.9 -17.8Z"/><path d="M0.9 -17.8 L8 -25 L-0.9 -20.2Z"/></g><g transform="rotate(240)"><rect x="-1.2" y="-27" width="2.4" height="27"/><path d="M0 -22 L-6 -26 L-5 -32 L0 -29 L5 -32 L6 -26Z"/><path d="M1.09 -13.3 L-8.43 -19.07 L-1.09 -10.7Z"/><path d="M1.09 -10.7 L8.43 -19.07 L-1.09 -13.3Z"/><path d="M0.9 -20.2 L-8 -25 L-0.9 -17.8Z"/><path d="M0.9 -17.8 L8 -25 L-0.9 -20.2Z"/></g><g transform="rotate(300)"><rect x="-1.2" y="-27" width="2.4" height="27"/><path d="M0 -22 L-6 -26 L-5 -32 L0 -29 L5 -32 L6 -26Z"/><path d="M1.09 -13.3 L-8.43 -19.07 L-1.09 -10.7Z"/><path d="M1.09 -10.7 L8.43 -19.07 L-1.09 -13.3Z"/><path d="M0.9 -20.2 L-8 -25 L-0.9 -17.8Z"/><path d="M0.9 -17.8 L8 -25 L-0.9 -20.2Z"/></g><g transform="rotate(30)"><path d="M0 -14 L-6 -22 L0 -28 L6 -22Z"/><path d="M0.44 -25.64 L-6.76 -25.81 L-0.44 -22.36Z"/><path d="M0.44 -22.36 L6.76 -25.81 L-0.44 -25.64Z"/></g><g transform="rotate(90)"><path d="M0 -14 L-6 -22 L0 -28 L6 -22Z"/><path d="M0.44 -25.64 L-6.76 -25.81 L-0.44 -22.36Z"/><path d="M0.44 -22.36 L6.76 -25.81 L-0.44 -25.64Z"/></g><g transform="rotate(150)"><path d="M0 -14 L-6 -22 L0 -28 L6 -22Z"/><path d="M0.44 -25.64 L-6.76 -25.81 L-0.44 -22.36Z"/><path d="M0.44 -22.36 L6.76 -25.81 L-0.44 -25.64Z"/></g><g transform="rotate(210)"><path d="M0 -14 L-6 -22 L0 -28 L6 -22Z"/><path d="M0.44 -25.64 L-6.76 -25.81 L-0.44 -22.36Z"/><path d="M0.44 -22.36 L6.76 -25.81 L-0.44 -25.64Z"/></g><g transform="rotate(270)"><path d="M0 -14 L-6 -22 L0 -28 L6 -22Z"/><path d="M0.44 -25.64 L-6.76 -25.81 L-0.44 -22.36Z"/><path d="M0.44 -22.36 L6.76 -25.81 L-0.44 -25.64Z"/></g><g transform="rotate(330)"><path d="M0 -14 L-6 -22 L0 -28 L6 -22Z"/><path d="M0.44 -25.64 L-6.76 -25.81 L-0.44 -22.36Z"/><path d="M0.44 -22.36 L6.76 -25.81 L-0.44 -25.64Z"/></g><circle r="10.5"/><g transform="rotate(0)"><path d="M1.3 -8 L0 -19 L-1.3 -8Z"/></g><g transform="rotate(15)"><path d="M1.3 -8 L0 -19 L-1.3 -8Z"/></g><g transform="rotate(30)"><path d="M1.3 -8 L0 -19 L-1.3 -8Z"/></g><g transform="rotate(45)"><path d="M1.3 -8 L0 -19 L-1.3 -8Z"/></g><g transform="rotate(60)"><path d="M1.3 -8 L0 -19 L-1.3 -8Z"/></g><g transform="rotate(75)"><path d="M1.3 -8 L0 -19 L-1.3 -8Z"/></g><g transform="rotate(90)"><path d="M1.3 -8 L0 -19 L-1.3 -8Z"/></g><g transform="rotate(105)"><path d="M1.3 -8 L0 -19 L-1.3 -8Z"/></g><g transform="rotate(120)"><path d="M1.3 -8 L0 -19 L-1.3 -8Z"/></g><g transform="rotate(135)"><path d="M1.3 -8 L0 -19 L-1.3 -8Z"/></g><g transform="rotate(150)"><path d="M1.3 -8 L0 -19 L-1.3 -8Z"/></g><g transform="rotate(165)"><path d="M1.3 -8 L0 -19 L-1.3 -8Z"/></g><g transform="rotate(180)"><path d="M1.3 -8 L0 -19 L-1.3 -8Z"/></g><g transform="rotate(195)"><path d="M1.3 -8 L0 -19 L-1.3 -8Z"/></g><g transform="rotate(210)"><path d="M1.3 -8 L0 -19 L-1.3 -8Z"/></g><g transform="rotate(225)"><path d="M1.3 -8 L0 -19 L-1.3 -8Z"/></g><g transform="rotate(240)"><path d="M1.3 -8 L0 -19 L-1.3 -8Z"/></g><g transform="rotate(255)"><path d="M1.3 -8 L0 -19 L-1.3 -8Z"/></g><g transform="rotate(270)"><path d="M1.3 -8 L0 -19 L-1.3 -8Z"/></g><g transform="rotate(285)"><path d="M1.3 -8 L0 -19 L-1.3 -8Z"/></g><g transform="rotate(300)"><path d="M1.3 -8 L0 -19 L-1.3 -8Z"/></g><g transform="rotate(315)"><path d="M1.3 -8 L0 -19 L-1.3 -8Z"/></g><g transform="rotate(330)"><path d="M1.3 -8 L0 -19 L-1.3 -8Z"/></g><g transform="rotate(345)"><path d="M1.3 -8 L0 -19 L-1.3 -8Z"/></g><g transform="rotate(15)"><path fill="#fff" d="M0.65 -3 L0 -12 L-0.65 -3Z"/></g><g transform="rotate(45)"><path fill="#fff" d="M0.65 -3 L0 -12 L-0.65 -3Z"/></g><g transform="rotate(75)"><path fill="#fff" d="M0.65 -3 L0 -12 L-0.65 -3Z"/></g><g transform="rotate(105)"><path fill="#fff" d="M0.65 -3 L0 -12 L-0.65 -3Z"/></g><g transform="rotate(135)"><path fill="#fff" d="M0.65 -3 L0 -12 L-0.65 -3Z"/></g><g transform="rotate(165)"><path fill="#fff" d="M0.65 -3 L0 -12 L-0.65 -3Z"/></g><g transform="rotate(195)"><path fill="#fff" d="M0.65 -3 L0 -12 L-0.65 -3Z"/></g><g transform="rotate(225)"><path fill="#fff" d="M0.65 -3 L0 -12 L-0.65 -3Z"/></g><g transform="rotate(255)"><path fill="#fff" d="M0.65 -3 L0 -12 L-0.65 -3Z"/></g><g transform="rotate(285)"><path fill="#fff" d="M0.65 -3 L0 -12 L-0.65 -3Z"/></g><g transform="rotate(315)"><path fill="#fff" d="M0.65 -3 L0 -12 L-0.65 -3Z"/></g><g transform="rotate(345)"><path fill="#fff" d="M0.65 -3 L0 -12 L-0.65 -3Z"/></g></g><g transform="translate(765 481)"><g transform="rotate(0)"><rect x="-4" y="-25" width="8" height="19"/><path d="M1.26 -14.16 L-4.24 -18.52 L-12 -19 L-7.76 -12.48 L-1.26 -9.84Z"/><path d="M1.26 -9.84 L7.76 -12.48 L12 -19 L4.24 -18.52 L-1.26 -14.16Z"/><path d="M1.32 -23.51 L-2.02 -27.76 L-8 -29 L-5.98 -23.24 L-1.32 -20.49Z"/><path d="M1.32 -20.49 L5.98 -23.24 L8 -29 L2.02 -27.76 L-1.32 -23.51Z"/><path d="M2.5 -24 L3.5 -28 L0 -34 L-3.5 -28 L-2.5 -24Z"/></g><g transform="rotate(60)"><rect x="-4" y="-25" width="8" height="19"/><path d="M1.26 -14.16 L-4.24 -18.52 L-12 -19 L-7.76 -12.48 L-1.26 -9.84Z"/><path d="M1.26 -9.84 L7.76 -12.48 L12 -19 L4.24 -18.52 L-1.26 -14.16Z"/><path d="M1.32 -23.51 L-2.02 -27.76 L-8 -29 L-5.98 -23.24 L-1.32 -20.49Z"/><path d="M1.32 -20.49 L5.98 -23.24 L8 -29 L2.02 -27.76 L-1.32 -23.51Z"/><path d="M2.5 -24 L3.5 -28 L0 -34 L-3.5 -28 L-2.5 -24Z"/></g><g transform="rotate(120)"><rect x="-4" y="-25" width="8" height="19"/><path d="M1.26 -14.16 L-4.24 -18.52 L-12 -19 L-7.76 -12.48 L-1.26 -9.84Z"/><path d="M1.26 -9.84 L7.76 -12.48 L12 -19 L4.24 -18.52 L-1.26 -14.16Z"/><path d="M1.32 -23.51 L-2.02 -27.76 L-8 -29 L-5.98 -23.24 L-1.32 -20.49Z"/><path d="M1.32 -20.49 L5.98 -23.24 L8 -29 L2.02 -27.76 L-1.32 -23.51Z"/><path d="M2.5 -24 L3.5 -28 L0 -34 L-3.5 -28 L-2.5 -24Z"/></g><g transform="rotate(180)"><rect x="-4" y="-25" width="8" height="19"/><path d="M1.26 -14.16 L-4.24 -18.52 L-12 -19 L-7.76 -12.48 L-1.26 -9.84Z"/><path d="M1.26 -9.84 L7.76 -12.48 L12 -19 L4.24 -18.52 L-1.26 -14.16Z"/><path d="M1.32 -23.51 L-2.02 -27.76 L-8 -29 L-5.98 -23.24 L-1.32 -20.49Z"/><path d="M1.32 -20.49 L5.98 -23.24 L8 -29 L2.02 -27.76 L-1.32 -23.51Z"/><path d="M2.5 -24 L3.5 -28 L0 -34 L-3.5 -28 L-2.5 -24Z"/></g><g transform="rotate(240)"><rect x="-4" y="-25" width="8" height="19"/><path d="M1.26 -14.16 L-4.24 -18.52 L-12 -19 L-7.76 -12.48 L-1.26 -9.84Z"/><path d="M1.26 -9.84 L7.76 -12.48 L12 -19 L4.24 -18.52 L-1.26 -14.16Z"/><path d="M1.32 -23.51 L-2.02 -27.76 L-8 -29 L-5.98 -23.24 L-1.32 -20.49Z"/><path d="M1.32 -20.49 L5.98 -23.24 L8 -29 L2.02 -27.76 L-1.32 -23.51Z"/><path d="M2.5 -24 L3.5 -28 L0 -34 L-3.5 -28 L-2.5 -24Z"/></g><g transform="rotate(300)"><rect x="-4" y="-25" width="8" height="19"/><path d="M1.26 -14.16 L-4.24 -18.52 L-12 -19 L-7.76 -12.48 L-1.26 -9.84Z"/><path d="M1.26 -9.84 L7.76 -12.48 L12 -19 L4.24 -18.52 L-1.26 -14.16Z"/><path d="M1.32 -23.51 L-2.02 -27.76 L-8 -29 L-5.98 -23.24 L-1.32 -20.49Z"/><path d="M1.32 -20.49 L5.98 -23.24 L8 -29 L2.02 -27.76 L-1.32 -23.51Z"/><path d="M2.5 -24 L3.5 -28 L0 -34 L-3.5 -28 L-2.5 -24Z"/></g><circle r="12"/><g transform="rotate(0)"><path fill="#fff" d="M0 -2 L-2 -5.5 L0 -10 L2 -5.5Z"/></g><g transform="rotate(60)"><path fill="#fff" d="M0 -2 L-2 -5.5 L0 -10 L2 -5.5Z"/></g><g transform="rotate(120)"><path fill="#fff" d="M0 -2 L-2 -5.5 L0 -10 L2 -5.5Z"/></g><g transform="rotate(180)"><path fill="#fff" d="M0 -2 L-2 -5.5 L0 -10 L2 -5.5Z"/></g><g transform="rotate(240)"><path fill="#fff" d="M0 -2 L-2 -5.5 L0 -10 L2 -5.5Z"/></g><g transform="rotate(300)"><path fill="#fff" d="M0 -2 L-2 -5.5 L0 -10 L2 -5.5Z"/></g><circle r="2.2" fill="#fff"/></g><g transform="translate(869 481)"><path d="M10.5 -18.19 L21 -0 L10.5 18.19 L-10.5 18.19 L-21 0 L-10.5 -18.19Z"/><g transform="rotate(0)"><path d="M4.5 0 L0 -34 L-4.5 0Z"/><path d="M0 -2 L-8 -15 L0 -31 L8 -15Z"/><path d="M1.05 -15.82 L-10.39 -20 L-1.05 -12.18Z"/><path d="M1.05 -12.18 L10.39 -20 L-1.05 -15.82Z"/><path d="M1.05 -21.82 L-9.53 -25.5 L-1.05 -18.18Z"/><path d="M1.05 -18.18 L9.53 -25.5 L-1.05 -21.82Z"/><path d="M1.05 -27.82 L-6.93 -30 L-1.05 -24.18Z"/><path d="M1.05 -24.18 L6.93 -30 L-1.05 -27.82Z"/></g><g transform="rotate(60)"><path d="M4.5 0 L0 -34 L-4.5 0Z"/><path d="M0 -2 L-8 -15 L0 -31 L8 -15Z"/><path d="M1.05 -15.82 L-10.39 -20 L-1.05 -12.18Z"/><path d="M1.05 -12.18 L10.39 -20 L-1.05 -15.82Z"/><path d="M1.05 -21.82 L-9.53 -25.5 L-1.05 -18.18Z"/><path d="M1.05 -18.18 L9.53 -25.5 L-1.05 -21.82Z"/><path d="M1.05 -27.82 L-6.93 -30 L-1.05 -24.18Z"/><path d="M1.05 -24.18 L6.93 -30 L-1.05 -27.82Z"/></g><g transform="rotate(120)"><path d="M4.5 0 L0 -34 L-4.5 0Z"/><path d="M0 -2 L-8 -15 L0 -31 L8 -15Z"/><path d="M1.05 -15.82 L-10.39 -20 L-1.05 -12.18Z"/><path d="M1.05 -12.18 L10.39 -20 L-1.05 -15.82Z"/><path d="M1.05 -21.82 L-9.53 -25.5 L-1.05 -18.18Z"/><path d="M1.05 -18.18 L9.53 -25.5 L-1.05 -21.82Z"/><path d="M1.05 -27.82 L-6.93 -30 L-1.05 -24.18Z"/><path d="M1.05 -24.18 L6.93 -30 L-1.05 -27.82Z"/></g><g transform="rotate(180)"><path d="M4.5 0 L0 -34 L-4.5 0Z"/><path d="M0 -2 L-8 -15 L0 -31 L8 -15Z"/><path d="M1.05 -15.82 L-10.39 -20 L-1.05 -12.18Z"/><path d="M1.05 -12.18 L10.39 -20 L-1.05 -15.82Z"/><path d="M1.05 -21.82 L-9.53 -25.5 L-1.05 -18.18Z"/><path d="M1.05 -18.18 L9.53 -25.5 L-1.05 -21.82Z"/><path d="M1.05 -27.82 L-6.93 -30 L-1.05 -24.18Z"/><path d="M1.05 -24.18 L6.93 -30 L-1.05 -27.82Z"/></g><g transform="rotate(240)"><path d="M4.5 0 L0 -34 L-4.5 0Z"/><path d="M0 -2 L-8 -15 L0 -31 L8 -15Z"/><path d="M1.05 -15.82 L-10.39 -20 L-1.05 -12.18Z"/><path d="M1.05 -12.18 L10.39 -20 L-1.05 -15.82Z"/><path d="M1.05 -21.82 L-9.53 -25.5 L-1.05 -18.18Z"/><path d="M1.05 -18.18 L9.53 -25.5 L-1.05 -21.82Z"/><path d="M1.05 -27.82 L-6.93 -30 L-1.05 -24.18Z"/><path d="M1.05 -24.18 L6.93 -30 L-1.05 -27.82Z"/></g><g transform="rotate(300)"><path d="M4.5 0 L0 -34 L-4.5 0Z"/><path d="M0 -2 L-8 -15 L0 -31 L8 -15Z"/><path d="M1.05 -15.82 L-10.39 -20 L-1.05 -12.18Z"/><path d="M1.05 -12.18 L10.39 -20 L-1.05 -15.82Z"/><path d="M1.05 -21.82 L-9.53 -25.5 L-1.05 -18.18Z"/><path d="M1.05 -18.18 L9.53 -25.5 L-1.05 -21.82Z"/><path d="M1.05 -27.82 L-6.93 -30 L-1.05 -24.18Z"/><path d="M1.05 -24.18 L6.93 -30 L-1.05 -27.82Z"/></g><g transform="rotate(30)"><path fill="#fff" d="M1.5 -7 L0.4 -22 L-0.4 -22 L-1.5 -7Z"/></g><g transform="rotate(90)"><path fill="#fff" d="M1.5 -7 L0.4 -22 L-0.4 -22 L-1.5 -7Z"/></g><g transform="rotate(150)"><path fill="#fff" d="M1.5 -7 L0.4 -22 L-0.4 -22 L-1.5 -7Z"/></g><g transform="rotate(210)"><path fill="#fff" d="M1.5 -7 L0.4 -22 L-0.4 -22 L-1.5 -7Z"/></g><g transform="rotate(270)"><path fill="#fff" d="M1.5 -7 L0.4 -22 L-0.4 -22 L-1.5 -7Z"/></g><g transform="rotate(330)"><path fill="#fff" d="M1.5 -7 L0.4 -22 L-0.4 -22 L-1.5 -7Z"/></g></g><g transform="translate(974 480)"><g transform="rotate(0)"><rect x="-0.8" y="-18" width="1.6" height="18"/><path d="M0.8 -17 L2.29 -23.3 L0 -35 L-2.29 -23.3 L-0.8 -17Z"/><path d="M0.55 -17.23 L-0.82 -24.3 L-6 -31.5 L-4.58 -22.75 L-0.55 -16.77Z"/><path d="M0.55 -16.77 L4.58 -22.75 L6 -31.5 L0.82 -24.3 L-0.55 -17.23Z"/></g><g transform="rotate(60)"><rect x="-0.8" y="-18" width="1.6" height="18"/><path d="M0.8 -17 L2.29 -23.3 L0 -35 L-2.29 -23.3 L-0.8 -17Z"/><path d="M0.55 -17.23 L-0.82 -24.3 L-6 -31.5 L-4.58 -22.75 L-0.55 -16.77Z"/><path d="M0.55 -16.77 L4.58 -22.75 L6 -31.5 L0.82 -24.3 L-0.55 -17.23Z"/></g><g transform="rotate(120)"><rect x="-0.8" y="-18" width="1.6" height="18"/><path d="M0.8 -17 L2.29 -23.3 L0 -35 L-2.29 -23.3 L-0.8 -17Z"/><path d="M0.55 -17.23 L-0.82 -24.3 L-6 -31.5 L-4.58 -22.75 L-0.55 -16.77Z"/><path d="M0.55 -16.77 L4.58 -22.75 L6 -31.5 L0.82 -24.3 L-0.55 -17.23Z"/></g><g transform="rotate(180)"><rect x="-0.8" y="-18" width="1.6" height="18"/><path d="M0.8 -17 L2.29 -23.3 L0 -35 L-2.29 -23.3 L-0.8 -17Z"/><path d="M0.55 -17.23 L-0.82 -24.3 L-6 -31.5 L-4.58 -22.75 L-0.55 -16.77Z"/><path d="M0.55 -16.77 L4.58 -22.75 L6 -31.5 L0.82 -24.3 L-0.55 -17.23Z"/></g><g transform="rotate(240)"><rect x="-0.8" y="-18" width="1.6" height="18"/><path d="M0.8 -17 L2.29 -23.3 L0 -35 L-2.29 -23.3 L-0.8 -17Z"/><path d="M0.55 -17.23 L-0.82 -24.3 L-6 -31.5 L-4.58 -22.75 L-0.55 -16.77Z"/><path d="M0.55 -16.77 L4.58 -22.75 L6 -31.5 L0.82 -24.3 L-0.55 -17.23Z"/></g><g transform="rotate(300)"><rect x="-0.8" y="-18" width="1.6" height="18"/><path d="M0.8 -17 L2.29 -23.3 L0 -35 L-2.29 -23.3 L-0.8 -17Z"/><path d="M0.55 -17.23 L-0.82 -24.3 L-6 -31.5 L-4.58 -22.75 L-0.55 -16.77Z"/><path d="M0.55 -16.77 L4.58 -22.75 L6 -31.5 L0.82 -24.3 L-0.55 -17.23Z"/></g><g transform="rotate(30)"><circle cx="0" cy="-6" r="2.6"/><circle cx="0" cy="-10.5" r="2.6"/><circle cx="0" cy="-15" r="2.6"/><circle cx="0" cy="-19.5" r="2.6"/><circle cx="0" cy="-24" r="2.4"/><circle cx="-4.5" cy="-26.5" r="2.3"/><circle cx="4.5" cy="-26.5" r="2.3"/><circle cx="-4" cy="-22" r="1.6"/><circle cx="4" cy="-22" r="1.6"/></g><g transform="rotate(90)"><circle cx="0" cy="-6" r="2.6"/><circle cx="0" cy="-10.5" r="2.6"/><circle cx="0" cy="-15" r="2.6"/><circle cx="0" cy="-19.5" r="2.6"/><circle cx="0" cy="-24" r="2.4"/><circle cx="-4.5" cy="-26.5" r="2.3"/><circle cx="4.5" cy="-26.5" r="2.3"/><circle cx="-4" cy="-22" r="1.6"/><circle cx="4" cy="-22" r="1.6"/></g><g transform="rotate(150)"><circle cx="0" cy="-6" r="2.6"/><circle cx="0" cy="-10.5" r="2.6"/><circle cx="0" cy="-15" r="2.6"/><circle cx="0" cy="-19.5" r="2.6"/><circle cx="0" cy="-24" r="2.4"/><circle cx="-4.5" cy="-26.5" r="2.3"/><circle cx="4.5" cy="-26.5" r="2.3"/><circle cx="-4" cy="-22" r="1.6"/><circle cx="4" cy="-22" r="1.6"/></g><g transform="rotate(210)"><circle cx="0" cy="-6" r="2.6"/><circle cx="0" cy="-10.5" r="2.6"/><circle cx="0" cy="-15" r="2.6"/><circle cx="0" cy="-19.5" r="2.6"/><circle cx="0" cy="-24" r="2.4"/><circle cx="-4.5" cy="-26.5" r="2.3"/><circle cx="4.5" cy="-26.5" r="2.3"/><circle cx="-4" cy="-22" r="1.6"/><circle cx="4" cy="-22" r="1.6"/></g><g transform="rotate(270)"><circle cx="0" cy="-6" r="2.6"/><circle cx="0" cy="-10.5" r="2.6"/><circle cx="0" cy="-15" r="2.6"/><circle cx="0" cy="-19.5" r="2.6"/><circle cx="0" cy="-24" r="2.4"/><circle cx="-4.5" cy="-26.5" r="2.3"/><circle cx="4.5" cy="-26.5" r="2.3"/><circle cx="-4" cy="-22" r="1.6"/><circle cx="4" cy="-22" r="1.6"/></g><g transform="rotate(330)"><circle cx="0" cy="-6" r="2.6"/><circle cx="0" cy="-10.5" r="2.6"/><circle cx="0" cy="-15" r="2.6"/><circle cx="0" cy="-19.5" r="2.6"/><circle cx="0" cy="-24" r="2.4"/><circle cx="-4.5" cy="-26.5" r="2.3"/><circle cx="4.5" cy="-26.5" r="2.3"/><circle cx="-4" cy="-22" r="1.6"/><circle cx="4" cy="-22" r="1.6"/></g><circle r="6"/></g><g transform="translate(1073 481)"><g transform="rotate(0)"><path d="M3.5 0 L0 -34 L-3.5 0Z"/><path d="M1.54 -12.97 L-9.46 -18.39 L-1.54 -9.03Z"/><path d="M1.54 -9.03 L9.46 -18.39 L-1.54 -12.97Z"/><path d="M1.59 -20.59 L-7.78 -26.78 L-1.59 -17.41Z"/><path d="M1.59 -17.41 L7.78 -26.78 L-1.59 -20.59Z"/><path d="M1.58 -27.23 L-4.93 -32.3 L-1.58 -24.77Z"/><path d="M1.58 -24.77 L4.93 -32.3 L-1.58 -27.23Z"/></g><g transform="rotate(60)"><path d="M3.5 0 L0 -34 L-3.5 0Z"/><path d="M1.54 -12.97 L-9.46 -18.39 L-1.54 -9.03Z"/><path d="M1.54 -9.03 L9.46 -18.39 L-1.54 -12.97Z"/><path d="M1.59 -20.59 L-7.78 -26.78 L-1.59 -17.41Z"/><path d="M1.59 -17.41 L7.78 -26.78 L-1.59 -20.59Z"/><path d="M1.58 -27.23 L-4.93 -32.3 L-1.58 -24.77Z"/><path d="M1.58 -24.77 L4.93 -32.3 L-1.58 -27.23Z"/></g><g transform="rotate(120)"><path d="M3.5 0 L0 -34 L-3.5 0Z"/><path d="M1.54 -12.97 L-9.46 -18.39 L-1.54 -9.03Z"/><path d="M1.54 -9.03 L9.46 -18.39 L-1.54 -12.97Z"/><path d="M1.59 -20.59 L-7.78 -26.78 L-1.59 -17.41Z"/><path d="M1.59 -17.41 L7.78 -26.78 L-1.59 -20.59Z"/><path d="M1.58 -27.23 L-4.93 -32.3 L-1.58 -24.77Z"/><path d="M1.58 -24.77 L4.93 -32.3 L-1.58 -27.23Z"/></g><g transform="rotate(180)"><path d="M3.5 0 L0 -34 L-3.5 0Z"/><path d="M1.54 -12.97 L-9.46 -18.39 L-1.54 -9.03Z"/><path d="M1.54 -9.03 L9.46 -18.39 L-1.54 -12.97Z"/><path d="M1.59 -20.59 L-7.78 -26.78 L-1.59 -17.41Z"/><path d="M1.59 -17.41 L7.78 -26.78 L-1.59 -20.59Z"/><path d="M1.58 -27.23 L-4.93 -32.3 L-1.58 -24.77Z"/><path d="M1.58 -24.77 L4.93 -32.3 L-1.58 -27.23Z"/></g><g transform="rotate(240)"><path d="M3.5 0 L0 -34 L-3.5 0Z"/><path d="M1.54 -12.97 L-9.46 -18.39 L-1.54 -9.03Z"/><path d="M1.54 -9.03 L9.46 -18.39 L-1.54 -12.97Z"/><path d="M1.59 -20.59 L-7.78 -26.78 L-1.59 -17.41Z"/><path d="M1.59 -17.41 L7.78 -26.78 L-1.59 -20.59Z"/><path d="M1.58 -27.23 L-4.93 -32.3 L-1.58 -24.77Z"/><path d="M1.58 -24.77 L4.93 -32.3 L-1.58 -27.23Z"/></g><g transform="rotate(300)"><path d="M3.5 0 L0 -34 L-3.5 0Z"/><path d="M1.54 -12.97 L-9.46 -18.39 L-1.54 -9.03Z"/><path d="M1.54 -9.03 L9.46 -18.39 L-1.54 -12.97Z"/><path d="M1.59 -20.59 L-7.78 -26.78 L-1.59 -17.41Z"/><path d="M1.59 -17.41 L7.78 -26.78 L-1.59 -20.59Z"/><path d="M1.58 -27.23 L-4.93 -32.3 L-1.58 -24.77Z"/><path d="M1.58 -24.77 L4.93 -32.3 L-1.58 -27.23Z"/></g><path d="M0 -15 L5 -8.66 L12.99 -7.5 L10 -0 L12.99 7.5 L5 8.66 L0 15 L-5 8.66 L-12.99 7.5 L-10 0 L-12.99 -7.5 L-5 -8.66Z"/><circle r="10"/></g><g transform="translate(667 576)"><g transform="rotate(0)"><path d="M0 0 L-6.5 -17 L0 -26 L6.5 -17Z"/><circle cx="0" cy="-28" r="2.5"/><path d="M-2.66 -25.88 L-6 -22 L-1.34 -24.12Z"/><path d="M1.34 -24.12 L6 -22 L2.66 -25.88Z"/></g><g transform="rotate(60)"><path d="M0 0 L-6.5 -17 L0 -26 L6.5 -17Z"/><circle cx="0" cy="-28" r="2.5"/><path d="M-2.66 -25.88 L-6 -22 L-1.34 -24.12Z"/><path d="M1.34 -24.12 L6 -22 L2.66 -25.88Z"/></g><g transform="rotate(120)"><path d="M0 0 L-6.5 -17 L0 -26 L6.5 -17Z"/><circle cx="0" cy="-28" r="2.5"/><path d="M-2.66 -25.88 L-6 -22 L-1.34 -24.12Z"/><path d="M1.34 -24.12 L6 -22 L2.66 -25.88Z"/></g><g transform="rotate(180)"><path d="M0 0 L-6.5 -17 L0 -26 L6.5 -17Z"/><circle cx="0" cy="-28" r="2.5"/><path d="M-2.66 -25.88 L-6 -22 L-1.34 -24.12Z"/><path d="M1.34 -24.12 L6 -22 L2.66 -25.88Z"/></g><g transform="rotate(240)"><path d="M0 0 L-6.5 -17 L0 -26 L6.5 -17Z"/><circle cx="0" cy="-28" r="2.5"/><path d="M-2.66 -25.88 L-6 -22 L-1.34 -24.12Z"/><path d="M1.34 -24.12 L6 -22 L2.66 -25.88Z"/></g><g transform="rotate(300)"><path d="M0 0 L-6.5 -17 L0 -26 L6.5 -17Z"/><circle cx="0" cy="-28" r="2.5"/><path d="M-2.66 -25.88 L-6 -22 L-1.34 -24.12Z"/><path d="M1.34 -24.12 L6 -22 L2.66 -25.88Z"/></g><g transform="rotate(30)"><circle cx="0" cy="-24" r="1.5"/></g><g transform="rotate(90)"><circle cx="0" cy="-24" r="1.5"/></g><g transform="rotate(150)"><circle cx="0" cy="-24" r="1.5"/></g><g transform="rotate(210)"><circle cx="0" cy="-24" r="1.5"/></g><g transform="rotate(270)"><circle cx="0" cy="-24" r="1.5"/></g><g transform="rotate(330)"><circle cx="0" cy="-24" r="1.5"/></g></g><g transform="translate(765 576)"><g transform="rotate(30)"><rect x="-1.1" y="-24" width="2.2" height="24"/><circle cx="0" cy="-4.5" r="2.8"/><circle cx="0" cy="-9.5" r="2.8"/><circle cx="0" cy="-14.5" r="2.8"/><circle cx="0" cy="-19.5" r="2.3"/><circle cx="0" cy="-24" r="2.8"/><circle cx="-5" cy="-26" r="2.4"/><circle cx="5" cy="-26" r="2.4"/><circle cx="-4.5" cy="-21" r="1.7"/><circle cx="4.5" cy="-21" r="1.7"/></g><g transform="rotate(90)"><rect x="-1.1" y="-24" width="2.2" height="24"/><circle cx="0" cy="-4.5" r="2.8"/><circle cx="0" cy="-9.5" r="2.8"/><circle cx="0" cy="-14.5" r="2.8"/><circle cx="0" cy="-19.5" r="2.3"/><circle cx="0" cy="-24" r="2.8"/><circle cx="-5" cy="-26" r="2.4"/><circle cx="5" cy="-26" r="2.4"/><circle cx="-4.5" cy="-21" r="1.7"/><circle cx="4.5" cy="-21" r="1.7"/></g><g transform="rotate(150)"><rect x="-1.1" y="-24" width="2.2" height="24"/><circle cx="0" cy="-4.5" r="2.8"/><circle cx="0" cy="-9.5" r="2.8"/><circle cx="0" cy="-14.5" r="2.8"/><circle cx="0" cy="-19.5" r="2.3"/><circle cx="0" cy="-24" r="2.8"/><circle cx="-5" cy="-26" r="2.4"/><circle cx="5" cy="-26" r="2.4"/><circle cx="-4.5" cy="-21" r="1.7"/><circle cx="4.5" cy="-21" r="1.7"/></g><g transform="rotate(210)"><rect x="-1.1" y="-24" width="2.2" height="24"/><circle cx="0" cy="-4.5" r="2.8"/><circle cx="0" cy="-9.5" r="2.8"/><circle cx="0" cy="-14.5" r="2.8"/><circle cx="0" cy="-19.5" r="2.3"/><circle cx="0" cy="-24" r="2.8"/><circle cx="-5" cy="-26" r="2.4"/><circle cx="5" cy="-26" r="2.4"/><circle cx="-4.5" cy="-21" r="1.7"/><circle cx="4.5" cy="-21" r="1.7"/></g><g transform="rotate(270)"><rect x="-1.1" y="-24" width="2.2" height="24"/><circle cx="0" cy="-4.5" r="2.8"/><circle cx="0" cy="-9.5" r="2.8"/><circle cx="0" cy="-14.5" r="2.8"/><circle cx="0" cy="-19.5" r="2.3"/><circle cx="0" cy="-24" r="2.8"/><circle cx="-5" cy="-26" r="2.4"/><circle cx="5" cy="-26" r="2.4"/><circle cx="-4.5" cy="-21" r="1.7"/><circle cx="4.5" cy="-21" r="1.7"/></g><g transform="rotate(330)"><rect x="-1.1" y="-24" width="2.2" height="24"/><circle cx="0" cy="-4.5" r="2.8"/><circle cx="0" cy="-9.5" r="2.8"/><circle cx="0" cy="-14.5" r="2.8"/><circle cx="0" cy="-19.5" r="2.3"/><circle cx="0" cy="-24" r="2.8"/><circle cx="-5" cy="-26" r="2.4"/><circle cx="5" cy="-26" r="2.4"/><circle cx="-4.5" cy="-21" r="1.7"/><circle cx="4.5" cy="-21" r="1.7"/></g><circle r="5.5"/></g><g transform="translate(869 576)"><g transform="rotate(0)"><rect x="-0.5" y="-28" width="1" height="28"/><path d="M-4.5 -26Q0 -32 4.5 -26" fill="none" stroke="#51a1e1" stroke-width="2.4"/><circle cx="0" cy="-30" r="1.8"/></g><g transform="rotate(45)"><rect x="-0.5" y="-28" width="1" height="28"/><path d="M-4.5 -26Q0 -32 4.5 -26" fill="none" stroke="#51a1e1" stroke-width="2.4"/><circle cx="0" cy="-30" r="1.8"/></g><g transform="rotate(90)"><rect x="-0.5" y="-28" width="1" height="28"/><path d="M-4.5 -26Q0 -32 4.5 -26" fill="none" stroke="#51a1e1" stroke-width="2.4"/><circle cx="0" cy="-30" r="1.8"/></g><g transform="rotate(135)"><rect x="-0.5" y="-28" width="1" height="28"/><path d="M-4.5 -26Q0 -32 4.5 -26" fill="none" stroke="#51a1e1" stroke-width="2.4"/><circle cx="0" cy="-30" r="1.8"/></g><g transform="rotate(180)"><rect x="-0.5" y="-28" width="1" height="28"/><path d="M-4.5 -26Q0 -32 4.5 -26" fill="none" stroke="#51a1e1" stroke-width="2.4"/><circle cx="0" cy="-30" r="1.8"/></g><g transform="rotate(225)"><rect x="-0.5" y="-28" width="1" height="28"/><path d="M-4.5 -26Q0 -32 4.5 -26" fill="none" stroke="#51a1e1" stroke-width="2.4"/><circle cx="0" cy="-30" r="1.8"/></g><g transform="rotate(270)"><rect x="-0.5" y="-28" width="1" height="28"/><path d="M-4.5 -26Q0 -32 4.5 -26" fill="none" stroke="#51a1e1" stroke-width="2.4"/><circle cx="0" cy="-30" r="1.8"/></g><g transform="rotate(315)"><rect x="-0.5" y="-28" width="1" height="28"/><path d="M-4.5 -26Q0 -32 4.5 -26" fill="none" stroke="#51a1e1" stroke-width="2.4"/><circle cx="0" cy="-30" r="1.8"/></g><g transform="rotate(22.5)"><rect x="-0.5" y="-20" width="1" height="20"/><path d="M-3.5 -18Q0 -23 3.5 -18" fill="none" stroke="#51a1e1" stroke-width="2.2"/></g><g transform="rotate(67.5)"><rect x="-0.5" y="-20" width="1" height="20"/><path d="M-3.5 -18Q0 -23 3.5 -18" fill="none" stroke="#51a1e1" stroke-width="2.2"/></g><g transform="rotate(112.5)"><rect x="-0.5" y="-20" width="1" height="20"/><path d="M-3.5 -18Q0 -23 3.5 -18" fill="none" stroke="#51a1e1" stroke-width="2.2"/></g><g transform="rotate(157.5)"><rect x="-0.5" y="-20" width="1" height="20"/><path d="M-3.5 -18Q0 -23 3.5 -18" fill="none" stroke="#51a1e1" stroke-width="2.2"/></g><g transform="rotate(202.5)"><rect x="-0.5" y="-20" width="1" height="20"/><path d="M-3.5 -18Q0 -23 3.5 -18" fill="none" stroke="#51a1e1" stroke-width="2.2"/></g><g transform="rotate(247.5)"><rect x="-0.5" y="-20" width="1" height="20"/><path d="M-3.5 -18Q0 -23 3.5 -18" fill="none" stroke="#51a1e1" stroke-width="2.2"/></g><g transform="rotate(292.5)"><rect x="-0.5" y="-20" width="1" height="20"/><path d="M-3.5 -18Q0 -23 3.5 -18" fill="none" stroke="#51a1e1" stroke-width="2.2"/></g><g transform="rotate(337.5)"><rect x="-0.5" y="-20" width="1" height="20"/><path d="M-3.5 -18Q0 -23 3.5 -18" fill="none" stroke="#51a1e1" stroke-width="2.2"/></g><circle r="8"/><g transform="rotate(0)"><path d="M1 -6 L0 -14 L-1 -6Z"/></g><g transform="rotate(18)"><path d="M1 -6 L0 -14 L-1 -6Z"/></g><g transform="rotate(36)"><path d="M1 -6 L0 -14 L-1 -6Z"/></g><g transform="rotate(54)"><path d="M1 -6 L0 -14 L-1 -6Z"/></g><g transform="rotate(72)"><path d="M1 -6 L0 -14 L-1 -6Z"/></g><g transform="rotate(90)"><path d="M1 -6 L0 -14 L-1 -6Z"/></g><g transform="rotate(108)"><path d="M1 -6 L0 -14 L-1 -6Z"/></g><g transform="rotate(126)"><path d="M1 -6 L0 -14 L-1 -6Z"/></g><g transform="rotate(144)"><path d="M1 -6 L0 -14 L-1 -6Z"/></g><g transform="rotate(162)"><path d="M1 -6 L0 -14 L-1 -6Z"/></g><g transform="rotate(180)"><path d="M1 -6 L0 -14 L-1 -6Z"/></g><g transform="rotate(198)"><path d="M1 -6 L0 -14 L-1 -6Z"/></g><g transform="rotate(216)"><path d="M1 -6 L0 -14 L-1 -6Z"/></g><g transform="rotate(234)"><path d="M1 -6 L0 -14 L-1 -6Z"/></g><g transform="rotate(252)"><path d="M1 -6 L0 -14 L-1 -6Z"/></g><g transform="rotate(270)"><path d="M1 -6 L0 -14 L-1 -6Z"/></g><g transform="rotate(288)"><path d="M1 -6 L0 -14 L-1 -6Z"/></g><g transform="rotate(306)"><path d="M1 -6 L0 -14 L-1 -6Z"/></g><g transform="rotate(324)"><path d="M1 -6 L0 -14 L-1 -6Z"/></g><g transform="rotate(342)"><path d="M1 -6 L0 -14 L-1 -6Z"/></g></g><g transform="translate(974.5 576)"><g transform="rotate(0)"><rect x="-0.8" y="-19" width="1.6" height="19"/><path d="M0.8 -18 L1.76 -22.55 L0 -31 L-1.76 -22.55 L-0.8 -18Z"/><path d="M0.52 -18.3 L-1.12 -23.06 L-5.5 -27.5 L-3.83 -21.49 L-0.52 -17.7Z"/><path d="M0.52 -17.7 L3.83 -21.49 L5.5 -27.5 L1.12 -23.06 L-0.52 -18.3Z"/><path d="M0.8 -5 L1.69 -8.85 L0 -16 L-1.69 -8.85 L-0.8 -5Z"/><path d="M0.5 -5.33 L-1 -9.21 L-5 -12.5 L-3.5 -7.54 L-0.5 -4.67Z"/><path d="M0.5 -4.67 L3.5 -7.54 L5 -12.5 L1 -9.21 L-0.5 -5.33Z"/></g><g transform="rotate(90)"><rect x="-0.8" y="-19" width="1.6" height="19"/><path d="M0.8 -18 L1.76 -22.55 L0 -31 L-1.76 -22.55 L-0.8 -18Z"/><path d="M0.52 -18.3 L-1.12 -23.06 L-5.5 -27.5 L-3.83 -21.49 L-0.52 -17.7Z"/><path d="M0.52 -17.7 L3.83 -21.49 L5.5 -27.5 L1.12 -23.06 L-0.52 -18.3Z"/><path d="M0.8 -5 L1.69 -8.85 L0 -16 L-1.69 -8.85 L-0.8 -5Z"/><path d="M0.5 -5.33 L-1 -9.21 L-5 -12.5 L-3.5 -7.54 L-0.5 -4.67Z"/><path d="M0.5 -4.67 L3.5 -7.54 L5 -12.5 L1 -9.21 L-0.5 -5.33Z"/></g><g transform="rotate(180)"><rect x="-0.8" y="-19" width="1.6" height="19"/><path d="M0.8 -18 L1.76 -22.55 L0 -31 L-1.76 -22.55 L-0.8 -18Z"/><path d="M0.52 -18.3 L-1.12 -23.06 L-5.5 -27.5 L-3.83 -21.49 L-0.52 -17.7Z"/><path d="M0.52 -17.7 L3.83 -21.49 L5.5 -27.5 L1.12 -23.06 L-0.52 -18.3Z"/><path d="M0.8 -5 L1.69 -8.85 L0 -16 L-1.69 -8.85 L-0.8 -5Z"/><path d="M0.5 -5.33 L-1 -9.21 L-5 -12.5 L-3.5 -7.54 L-0.5 -4.67Z"/><path d="M0.5 -4.67 L3.5 -7.54 L5 -12.5 L1 -9.21 L-0.5 -5.33Z"/></g><g transform="rotate(270)"><rect x="-0.8" y="-19" width="1.6" height="19"/><path d="M0.8 -18 L1.76 -22.55 L0 -31 L-1.76 -22.55 L-0.8 -18Z"/><path d="M0.52 -18.3 L-1.12 -23.06 L-5.5 -27.5 L-3.83 -21.49 L-0.52 -17.7Z"/><path d="M0.52 -17.7 L3.83 -21.49 L5.5 -27.5 L1.12 -23.06 L-0.52 -18.3Z"/><path d="M0.8 -5 L1.69 -8.85 L0 -16 L-1.69 -8.85 L-0.8 -5Z"/><path d="M0.5 -5.33 L-1 -9.21 L-5 -12.5 L-3.5 -7.54 L-0.5 -4.67Z"/><path d="M0.5 -4.67 L3.5 -7.54 L5 -12.5 L1 -9.21 L-0.5 -5.33Z"/></g><g transform="rotate(30)"><rect x="-0.7" y="-12" width="1.4" height="12"/><path d="M0.8 -12 L1.62 -16.2 L0 -24 L-1.62 -16.2 L-0.8 -12Z"/><path d="M0.53 -12.28 L-0.75 -16.5 L-4.5 -20.5 L-3.3 -15.15 L-0.53 -11.72Z"/><path d="M0.53 -11.72 L3.3 -15.15 L4.5 -20.5 L0.75 -16.5 L-0.53 -12.28Z"/></g><g transform="rotate(60)"><rect x="-0.7" y="-12" width="1.4" height="12"/><path d="M0.8 -12 L1.62 -16.2 L0 -24 L-1.62 -16.2 L-0.8 -12Z"/><path d="M0.53 -12.28 L-0.75 -16.5 L-4.5 -20.5 L-3.3 -15.15 L-0.53 -11.72Z"/><path d="M0.53 -11.72 L3.3 -15.15 L4.5 -20.5 L0.75 -16.5 L-0.53 -12.28Z"/></g><g transform="rotate(120)"><rect x="-0.7" y="-12" width="1.4" height="12"/><path d="M0.8 -12 L1.62 -16.2 L0 -24 L-1.62 -16.2 L-0.8 -12Z"/><path d="M0.53 -12.28 L-0.75 -16.5 L-4.5 -20.5 L-3.3 -15.15 L-0.53 -11.72Z"/><path d="M0.53 -11.72 L3.3 -15.15 L4.5 -20.5 L0.75 -16.5 L-0.53 -12.28Z"/></g><g transform="rotate(150)"><rect x="-0.7" y="-12" width="1.4" height="12"/><path d="M0.8 -12 L1.62 -16.2 L0 -24 L-1.62 -16.2 L-0.8 -12Z"/><path d="M0.53 -12.28 L-0.75 -16.5 L-4.5 -20.5 L-3.3 -15.15 L-0.53 -11.72Z"/><path d="M0.53 -11.72 L3.3 -15.15 L4.5 -20.5 L0.75 -16.5 L-0.53 -12.28Z"/></g><g transform="rotate(210)"><rect x="-0.7" y="-12" width="1.4" height="12"/><path d="M0.8 -12 L1.62 -16.2 L0 -24 L-1.62 -16.2 L-0.8 -12Z"/><path d="M0.53 -12.28 L-0.75 -16.5 L-4.5 -20.5 L-3.3 -15.15 L-0.53 -11.72Z"/><path d="M0.53 -11.72 L3.3 -15.15 L4.5 -20.5 L0.75 -16.5 L-0.53 -12.28Z"/></g><g transform="rotate(240)"><rect x="-0.7" y="-12" width="1.4" height="12"/><path d="M0.8 -12 L1.62 -16.2 L0 -24 L-1.62 -16.2 L-0.8 -12Z"/><path d="M0.53 -12.28 L-0.75 -16.5 L-4.5 -20.5 L-3.3 -15.15 L-0.53 -11.72Z"/><path d="M0.53 -11.72 L3.3 -15.15 L4.5 -20.5 L0.75 -16.5 L-0.53 -12.28Z"/></g><g transform="rotate(300)"><rect x="-0.7" y="-12" width="1.4" height="12"/><path d="M0.8 -12 L1.62 -16.2 L0 -24 L-1.62 -16.2 L-0.8 -12Z"/><path d="M0.53 -12.28 L-0.75 -16.5 L-4.5 -20.5 L-3.3 -15.15 L-0.53 -11.72Z"/><path d="M0.53 -11.72 L3.3 -15.15 L4.5 -20.5 L0.75 -16.5 L-0.53 -12.28Z"/></g><g transform="rotate(330)"><rect x="-0.7" y="-12" width="1.4" height="12"/><path d="M0.8 -12 L1.62 -16.2 L0 -24 L-1.62 -16.2 L-0.8 -12Z"/><path d="M0.53 -12.28 L-0.75 -16.5 L-4.5 -20.5 L-3.3 -15.15 L-0.53 -11.72Z"/><path d="M0.53 -11.72 L3.3 -15.15 L4.5 -20.5 L0.75 -16.5 L-0.53 -12.28Z"/></g><circle r="3.5"/></g><g transform="translate(1073.5 576)"><g transform="rotate(0)"><path d="M-3.35 -12.9 L-13.54 -17.34 L-5.95 -9.22Z"/><path d="M-0.26 -12.86 L-8.89 -24.43 L-4.73 -10.61Z"/><path d="M3 -12 L0 -31 L-3 -12Z"/><path d="M4.73 -10.61 L8.89 -24.43 L0.26 -12.86Z"/><path d="M5.95 -9.22 L13.54 -17.34 L3.35 -12.9Z"/><path d="M0 -8.5 L-5.63 -10.6 L-9.23 -11.82 L-9.51 -14.09 L0 -18 L9.51 -14.09 L9.23 -11.82 L5.63 -10.6Z"/></g><g transform="rotate(90)"><path d="M-3.35 -12.9 L-13.54 -17.34 L-5.95 -9.22Z"/><path d="M-0.26 -12.86 L-8.89 -24.43 L-4.73 -10.61Z"/><path d="M3 -12 L0 -31 L-3 -12Z"/><path d="M4.73 -10.61 L8.89 -24.43 L0.26 -12.86Z"/><path d="M5.95 -9.22 L13.54 -17.34 L3.35 -12.9Z"/><path d="M0 -8.5 L-5.63 -10.6 L-9.23 -11.82 L-9.51 -14.09 L0 -18 L9.51 -14.09 L9.23 -11.82 L5.63 -10.6Z"/></g><g transform="rotate(180)"><path d="M-3.35 -12.9 L-13.54 -17.34 L-5.95 -9.22Z"/><path d="M-0.26 -12.86 L-8.89 -24.43 L-4.73 -10.61Z"/><path d="M3 -12 L0 -31 L-3 -12Z"/><path d="M4.73 -10.61 L8.89 -24.43 L0.26 -12.86Z"/><path d="M5.95 -9.22 L13.54 -17.34 L3.35 -12.9Z"/><path d="M0 -8.5 L-5.63 -10.6 L-9.23 -11.82 L-9.51 -14.09 L0 -18 L9.51 -14.09 L9.23 -11.82 L5.63 -10.6Z"/></g><g transform="rotate(270)"><path d="M-3.35 -12.9 L-13.54 -17.34 L-5.95 -9.22Z"/><path d="M-0.26 -12.86 L-8.89 -24.43 L-4.73 -10.61Z"/><path d="M3 -12 L0 -31 L-3 -12Z"/><path d="M4.73 -10.61 L8.89 -24.43 L0.26 -12.86Z"/><path d="M5.95 -9.22 L13.54 -17.34 L3.35 -12.9Z"/><path d="M0 -8.5 L-5.63 -10.6 L-9.23 -11.82 L-9.51 -14.09 L0 -18 L9.51 -14.09 L9.23 -11.82 L5.63 -10.6Z"/></g><g transform="rotate(0)"><path d="M1.3 0 L0 -7 L-1.3 0Z"/></g><g transform="rotate(45)"><path d="M1.3 0 L0 -7 L-1.3 0Z"/></g><g transform="rotate(90)"><path d="M1.3 0 L0 -7 L-1.3 0Z"/></g><g transform="rotate(135)"><path d="M1.3 0 L0 -7 L-1.3 0Z"/></g><g transform="rotate(180)"><path d="M1.3 0 L0 -7 L-1.3 0Z"/></g><g transform="rotate(225)"><path d="M1.3 0 L0 -7 L-1.3 0Z"/></g><g transform="rotate(270)"><path d="M1.3 0 L0 -7 L-1.3 0Z"/></g><g transform="rotate(315)"><path d="M1.3 0 L0 -7 L-1.3 0Z"/></g><circle r="3.2"/><g transform="rotate(0)"><rect x="-0.5" y="-9" width="1" height="9"/></g><g transform="rotate(90)"><rect x="-0.5" y="-9" width="1" height="9"/></g><g transform="rotate(180)"><rect x="-0.5" y="-9" width="1" height="9"/></g><g transform="rotate(270)"><rect x="-0.5" y="-9" width="1" height="9"/></g></g><g transform="translate(667 663)"><g transform="rotate(30)"><rect x="-1.2" y="-25" width="2.4" height="25"/></g><g transform="rotate(90)"><rect x="-1.2" y="-25" width="2.4" height="25"/></g><g transform="rotate(150)"><rect x="-1.2" y="-25" width="2.4" height="25"/></g><g transform="rotate(210)"><rect x="-1.2" y="-25" width="2.4" height="25"/></g><g transform="rotate(270)"><rect x="-1.2" y="-25" width="2.4" height="25"/></g><g transform="rotate(330)"><rect x="-1.2" y="-25" width="2.4" height="25"/></g><g transform="rotate(90)"><rect x="-1.2" y="-27" width="2.4" height="27"/></g><g transform="rotate(270)"><rect x="-1.2" y="-27" width="2.4" height="27"/></g><g transform="rotate(0)"><g transform="translate(0 -27)"><g transform="rotate(0)"><path d="M0 0 L-1.75 -3 L0 -6.5 L1.75 -3Z"/></g><g transform="rotate(60)"><path d="M0 0 L-1.75 -3 L0 -6.5 L1.75 -3Z"/></g><g transform="rotate(120)"><path d="M0 0 L-1.75 -3 L0 -6.5 L1.75 -3Z"/></g><g transform="rotate(180)"><path d="M0 0 L-1.75 -3 L0 -6.5 L1.75 -3Z"/></g><g transform="rotate(240)"><path d="M0 0 L-1.75 -3 L0 -6.5 L1.75 -3Z"/></g><g transform="rotate(300)"><path d="M0 0 L-1.75 -3 L0 -6.5 L1.75 -3Z"/></g><circle r="2.5"/></g></g><g transform="rotate(60)"><g transform="translate(0 -27)"><g transform="rotate(0)"><path d="M0 0 L-1.75 -3 L0 -6.5 L1.75 -3Z"/></g><g transform="rotate(60)"><path d="M0 0 L-1.75 -3 L0 -6.5 L1.75 -3Z"/></g><g transform="rotate(120)"><path d="M0 0 L-1.75 -3 L0 -6.5 L1.75 -3Z"/></g><g transform="rotate(180)"><path d="M0 0 L-1.75 -3 L0 -6.5 L1.75 -3Z"/></g><g transform="rotate(240)"><path d="M0 0 L-1.75 -3 L0 -6.5 L1.75 -3Z"/></g><g transform="rotate(300)"><path d="M0 0 L-1.75 -3 L0 -6.5 L1.75 -3Z"/></g><circle r="2.5"/></g></g><g transform="rotate(120)"><g transform="translate(0 -27)"><g transform="rotate(0)"><path d="M0 0 L-1.75 -3 L0 -6.5 L1.75 -3Z"/></g><g transform="rotate(60)"><path d="M0 0 L-1.75 -3 L0 -6.5 L1.75 -3Z"/></g><g transform="rotate(120)"><path d="M0 0 L-1.75 -3 L0 -6.5 L1.75 -3Z"/></g><g transform="rotate(180)"><path d="M0 0 L-1.75 -3 L0 -6.5 L1.75 -3Z"/></g><g transform="rotate(240)"><path d="M0 0 L-1.75 -3 L0 -6.5 L1.75 -3Z"/></g><g transform="rotate(300)"><path d="M0 0 L-1.75 -3 L0 -6.5 L1.75 -3Z"/></g><circle r="2.5"/></g></g><g transform="rotate(180)"><g transform="translate(0 -27)"><g transform="rotate(0)"><path d="M0 0 L-1.75 -3 L0 -6.5 L1.75 -3Z"/></g><g transform="rotate(60)"><path d="M0 0 L-1.75 -3 L0 -6.5 L1.75 -3Z"/></g><g transform="rotate(120)"><path d="M0 0 L-1.75 -3 L0 -6.5 L1.75 -3Z"/></g><g transform="rotate(180)"><path d="M0 0 L-1.75 -3 L0 -6.5 L1.75 -3Z"/></g><g transform="rotate(240)"><path d="M0 0 L-1.75 -3 L0 -6.5 L1.75 -3Z"/></g><g transform="rotate(300)"><path d="M0 0 L-1.75 -3 L0 -6.5 L1.75 -3Z"/></g><circle r="2.5"/></g></g><g transform="rotate(240)"><g transform="translate(0 -27)"><g transform="rotate(0)"><path d="M0 0 L-1.75 -3 L0 -6.5 L1.75 -3Z"/></g><g transform="rotate(60)"><path d="M0 0 L-1.75 -3 L0 -6.5 L1.75 -3Z"/></g><g transform="rotate(120)"><path d="M0 0 L-1.75 -3 L0 -6.5 L1.75 -3Z"/></g><g transform="rotate(180)"><path d="M0 0 L-1.75 -3 L0 -6.5 L1.75 -3Z"/></g><g transform="rotate(240)"><path d="M0 0 L-1.75 -3 L0 -6.5 L1.75 -3Z"/></g><g transform="rotate(300)"><path d="M0 0 L-1.75 -3 L0 -6.5 L1.75 -3Z"/></g><circle r="2.5"/></g></g><g transform="rotate(300)"><g transform="translate(0 -27)"><g transform="rotate(0)"><path d="M0 0 L-1.75 -3 L0 -6.5 L1.75 -3Z"/></g><g transform="rotate(60)"><path d="M0 0 L-1.75 -3 L0 -6.5 L1.75 -3Z"/></g><g transform="rotate(120)"><path d="M0 0 L-1.75 -3 L0 -6.5 L1.75 -3Z"/></g><g transform="rotate(180)"><path d="M0 0 L-1.75 -3 L0 -6.5 L1.75 -3Z"/></g><g transform="rotate(240)"><path d="M0 0 L-1.75 -3 L0 -6.5 L1.75 -3Z"/></g><g transform="rotate(300)"><path d="M0 0 L-1.75 -3 L0 -6.5 L1.75 -3Z"/></g><circle r="2.5"/></g></g><g transform="rotate(0)"><path d="M0 0 L-4 -12 L0 -22 L4 -12Z"/></g><g transform="rotate(60)"><path d="M0 0 L-4 -12 L0 -22 L4 -12Z"/></g><g transform="rotate(120)"><path d="M0 0 L-4 -12 L0 -22 L4 -12Z"/></g><g transform="rotate(180)"><path d="M0 0 L-4 -12 L0 -22 L4 -12Z"/></g><g transform="rotate(240)"><path d="M0 0 L-4 -12 L0 -22 L4 -12Z"/></g><g transform="rotate(300)"><path d="M0 0 L-4 -12 L0 -22 L4 -12Z"/></g><g transform="rotate(0)"><path fill="#fff" d="M0 -3 L-1.1 -10 L0 -18 L1.1 -10Z"/></g><g transform="rotate(60)"><path fill="#fff" d="M0 -3 L-1.1 -10 L0 -18 L1.1 -10Z"/></g><g transform="rotate(120)"><path fill="#fff" d="M0 -3 L-1.1 -10 L0 -18 L1.1 -10Z"/></g><g transform="rotate(180)"><path fill="#fff" d="M0 -3 L-1.1 -10 L0 -18 L1.1 -10Z"/></g><g transform="rotate(240)"><path fill="#fff" d="M0 -3 L-1.1 -10 L0 -18 L1.1 -10Z"/></g><g transform="rotate(300)"><path fill="#fff" d="M0 -3 L-1.1 -10 L0 -18 L1.1 -10Z"/></g></g><g transform="translate(765 663)"><g transform="rotate(0)"><path d="M0 -3L-7 -19L0 -27L7 -19Z" fill="none" stroke="#51a1e1" stroke-width="2.6"/><rect x="-1.3" y="-27" width="2.6" height="27"/><circle cx="0" cy="-29" r="2.2"/><path d="M0.37 -26.93 L-5 -28 L-0.37 -25.07Z"/><path d="M0.37 -25.07 L5 -28 L-0.37 -26.93Z"/><circle cx="-9" cy="-21" r="1.8"/><circle cx="9" cy="-21" r="1.8"/></g><g transform="rotate(60)"><path d="M0 -3L-7 -19L0 -27L7 -19Z" fill="none" stroke="#51a1e1" stroke-width="2.6"/><rect x="-1.3" y="-27" width="2.6" height="27"/><circle cx="0" cy="-29" r="2.2"/><path d="M0.37 -26.93 L-5 -28 L-0.37 -25.07Z"/><path d="M0.37 -25.07 L5 -28 L-0.37 -26.93Z"/><circle cx="-9" cy="-21" r="1.8"/><circle cx="9" cy="-21" r="1.8"/></g><g transform="rotate(120)"><path d="M0 -3L-7 -19L0 -27L7 -19Z" fill="none" stroke="#51a1e1" stroke-width="2.6"/><rect x="-1.3" y="-27" width="2.6" height="27"/><circle cx="0" cy="-29" r="2.2"/><path d="M0.37 -26.93 L-5 -28 L-0.37 -25.07Z"/><path d="M0.37 -25.07 L5 -28 L-0.37 -26.93Z"/><circle cx="-9" cy="-21" r="1.8"/><circle cx="9" cy="-21" r="1.8"/></g><g transform="rotate(180)"><path d="M0 -3L-7 -19L0 -27L7 -19Z" fill="none" stroke="#51a1e1" stroke-width="2.6"/><rect x="-1.3" y="-27" width="2.6" height="27"/><circle cx="0" cy="-29" r="2.2"/><path d="M0.37 -26.93 L-5 -28 L-0.37 -25.07Z"/><path d="M0.37 -25.07 L5 -28 L-0.37 -26.93Z"/><circle cx="-9" cy="-21" r="1.8"/><circle cx="9" cy="-21" r="1.8"/></g><g transform="rotate(240)"><path d="M0 -3L-7 -19L0 -27L7 -19Z" fill="none" stroke="#51a1e1" stroke-width="2.6"/><rect x="-1.3" y="-27" width="2.6" height="27"/><circle cx="0" cy="-29" r="2.2"/><path d="M0.37 -26.93 L-5 -28 L-0.37 -25.07Z"/><path d="M0.37 -25.07 L5 -28 L-0.37 -26.93Z"/><circle cx="-9" cy="-21" r="1.8"/><circle cx="9" cy="-21" r="1.8"/></g><g transform="rotate(300)"><path d="M0 -3L-7 -19L0 -27L7 -19Z" fill="none" stroke="#51a1e1" stroke-width="2.6"/><rect x="-1.3" y="-27" width="2.6" height="27"/><circle cx="0" cy="-29" r="2.2"/><path d="M0.37 -26.93 L-5 -28 L-0.37 -25.07Z"/><path d="M0.37 -25.07 L5 -28 L-0.37 -26.93Z"/><circle cx="-9" cy="-21" r="1.8"/><circle cx="9" cy="-21" r="1.8"/></g><circle r="3"/></g><g transform="translate(869 663)"><g transform="rotate(0)"><rect x="-1.3" y="-29" width="2.6" height="29"/><path d="M0.8 -26 L1.76 -28.8 L0 -34 L-1.76 -28.8 L-0.8 -26Z"/><path d="M0.47 -26.37 L-0.34 -28.98 L-3.5 -30.5 L-2.81 -27.07 L-0.47 -25.63Z"/><path d="M0.47 -25.63 L2.81 -27.07 L3.5 -30.5 L0.34 -28.98 L-0.47 -26.37Z"/><path d="M0.69 -8.98 L-7.37 -13.16 L-0.69 -7.02Z"/><path d="M0.69 -7.02 L7.37 -13.16 L-0.69 -8.98Z"/><path d="M0.69 -13.98 L-8.19 -18.74 L-0.69 -12.02Z"/><path d="M0.69 -12.02 L8.19 -18.74 L-0.69 -13.98Z"/><path d="M0.69 -18.98 L-7.37 -23.16 L-0.69 -17.02Z"/><path d="M0.69 -17.02 L7.37 -23.16 L-0.69 -18.98Z"/><path d="M0.69 -23.98 L-6.55 -27.59 L-0.69 -22.02Z"/><path d="M0.69 -22.02 L6.55 -27.59 L-0.69 -23.98Z"/></g><g transform="rotate(60)"><rect x="-1.3" y="-29" width="2.6" height="29"/><path d="M0.8 -26 L1.76 -28.8 L0 -34 L-1.76 -28.8 L-0.8 -26Z"/><path d="M0.47 -26.37 L-0.34 -28.98 L-3.5 -30.5 L-2.81 -27.07 L-0.47 -25.63Z"/><path d="M0.47 -25.63 L2.81 -27.07 L3.5 -30.5 L0.34 -28.98 L-0.47 -26.37Z"/><path d="M0.69 -8.98 L-7.37 -13.16 L-0.69 -7.02Z"/><path d="M0.69 -7.02 L7.37 -13.16 L-0.69 -8.98Z"/><path d="M0.69 -13.98 L-8.19 -18.74 L-0.69 -12.02Z"/><path d="M0.69 -12.02 L8.19 -18.74 L-0.69 -13.98Z"/><path d="M0.69 -18.98 L-7.37 -23.16 L-0.69 -17.02Z"/><path d="M0.69 -17.02 L7.37 -23.16 L-0.69 -18.98Z"/><path d="M0.69 -23.98 L-6.55 -27.59 L-0.69 -22.02Z"/><path d="M0.69 -22.02 L6.55 -27.59 L-0.69 -23.98Z"/></g><g transform="rotate(120)"><rect x="-1.3" y="-29" width="2.6" height="29"/><path d="M0.8 -26 L1.76 -28.8 L0 -34 L-1.76 -28.8 L-0.8 -26Z"/><path d="M0.47 -26.37 L-0.34 -28.98 L-3.5 -30.5 L-2.81 -27.07 L-0.47 -25.63Z"/><path d="M0.47 -25.63 L2.81 -27.07 L3.5 -30.5 L0.34 -28.98 L-0.47 -26.37Z"/><path d="M0.69 -8.98 L-7.37 -13.16 L-0.69 -7.02Z"/><path d="M0.69 -7.02 L7.37 -13.16 L-0.69 -8.98Z"/><path d="M0.69 -13.98 L-8.19 -18.74 L-0.69 -12.02Z"/><path d="M0.69 -12.02 L8.19 -18.74 L-0.69 -13.98Z"/><path d="M0.69 -18.98 L-7.37 -23.16 L-0.69 -17.02Z"/><path d="M0.69 -17.02 L7.37 -23.16 L-0.69 -18.98Z"/><path d="M0.69 -23.98 L-6.55 -27.59 L-0.69 -22.02Z"/><path d="M0.69 -22.02 L6.55 -27.59 L-0.69 -23.98Z"/></g><g transform="rotate(180)"><rect x="-1.3" y="-29" width="2.6" height="29"/><path d="M0.8 -26 L1.76 -28.8 L0 -34 L-1.76 -28.8 L-0.8 -26Z"/><path d="M0.47 -26.37 L-0.34 -28.98 L-3.5 -30.5 L-2.81 -27.07 L-0.47 -25.63Z"/><path d="M0.47 -25.63 L2.81 -27.07 L3.5 -30.5 L0.34 -28.98 L-0.47 -26.37Z"/><path d="M0.69 -8.98 L-7.37 -13.16 L-0.69 -7.02Z"/><path d="M0.69 -7.02 L7.37 -13.16 L-0.69 -8.98Z"/><path d="M0.69 -13.98 L-8.19 -18.74 L-0.69 -12.02Z"/><path d="M0.69 -12.02 L8.19 -18.74 L-0.69 -13.98Z"/><path d="M0.69 -18.98 L-7.37 -23.16 L-0.69 -17.02Z"/><path d="M0.69 -17.02 L7.37 -23.16 L-0.69 -18.98Z"/><path d="M0.69 -23.98 L-6.55 -27.59 L-0.69 -22.02Z"/><path d="M0.69 -22.02 L6.55 -27.59 L-0.69 -23.98Z"/></g><g transform="rotate(240)"><rect x="-1.3" y="-29" width="2.6" height="29"/><path d="M0.8 -26 L1.76 -28.8 L0 -34 L-1.76 -28.8 L-0.8 -26Z"/><path d="M0.47 -26.37 L-0.34 -28.98 L-3.5 -30.5 L-2.81 -27.07 L-0.47 -25.63Z"/><path d="M0.47 -25.63 L2.81 -27.07 L3.5 -30.5 L0.34 -28.98 L-0.47 -26.37Z"/><path d="M0.69 -8.98 L-7.37 -13.16 L-0.69 -7.02Z"/><path d="M0.69 -7.02 L7.37 -13.16 L-0.69 -8.98Z"/><path d="M0.69 -13.98 L-8.19 -18.74 L-0.69 -12.02Z"/><path d="M0.69 -12.02 L8.19 -18.74 L-0.69 -13.98Z"/><path d="M0.69 -18.98 L-7.37 -23.16 L-0.69 -17.02Z"/><path d="M0.69 -17.02 L7.37 -23.16 L-0.69 -18.98Z"/><path d="M0.69 -23.98 L-6.55 -27.59 L-0.69 -22.02Z"/><path d="M0.69 -22.02 L6.55 -27.59 L-0.69 -23.98Z"/></g><g transform="rotate(300)"><rect x="-1.3" y="-29" width="2.6" height="29"/><path d="M0.8 -26 L1.76 -28.8 L0 -34 L-1.76 -28.8 L-0.8 -26Z"/><path d="M0.47 -26.37 L-0.34 -28.98 L-3.5 -30.5 L-2.81 -27.07 L-0.47 -25.63Z"/><path d="M0.47 -25.63 L2.81 -27.07 L3.5 -30.5 L0.34 -28.98 L-0.47 -26.37Z"/><path d="M0.69 -8.98 L-7.37 -13.16 L-0.69 -7.02Z"/><path d="M0.69 -7.02 L7.37 -13.16 L-0.69 -8.98Z"/><path d="M0.69 -13.98 L-8.19 -18.74 L-0.69 -12.02Z"/><path d="M0.69 -12.02 L8.19 -18.74 L-0.69 -13.98Z"/><path d="M0.69 -18.98 L-7.37 -23.16 L-0.69 -17.02Z"/><path d="M0.69 -17.02 L7.37 -23.16 L-0.69 -18.98Z"/><path d="M0.69 -23.98 L-6.55 -27.59 L-0.69 -22.02Z"/><path d="M0.69 -22.02 L6.55 -27.59 L-0.69 -23.98Z"/></g><circle r="3.5"/></g><g transform="translate(975 663.5)"><path d="M0 -11.5L10 -5.75L10 5.75L0 11.5L-10 5.75L-10 -5.75Z M0 -6.5 L1.34 -3.23 L4.6 -4.6 L3.23 -1.34 L6.5 -0 L3.23 1.34 L4.6 4.6 L1.34 3.23 L0 6.5 L-1.34 3.23 L-4.6 4.6 L-3.23 1.34 L-6.5 0 L-3.23 -1.34 L-4.6 -4.6 L-1.34 -3.23Z" fill-rule="evenodd"/><g transform="rotate(0)"><path d="M-4.5 -17 L0 -14 L4.5 -17 L0 -20Z"/><path d="M-9.5 -22Q0 -19 9.5 -22" stroke="#51a1e1" stroke-width="3.6" stroke-linecap="round" fill="none"/><path d="M0 -21L0 -32" stroke="#51a1e1" stroke-width="3.6" stroke-linecap="round" fill="none"/><path d="M-1.5 -21L-6 -30" stroke="#51a1e1" stroke-width="3.4" stroke-linecap="round" fill="none"/><path d="M1.5 -21L6 -30" stroke="#51a1e1" stroke-width="3.4" stroke-linecap="round" fill="none"/><path d="M-4 -21.5L-10.5 -27" stroke="#51a1e1" stroke-width="3.2" stroke-linecap="round" fill="none"/><path d="M4 -21.5L10.5 -27" stroke="#51a1e1" stroke-width="3.2" stroke-linecap="round" fill="none"/></g><g transform="rotate(60)"><path d="M-4.5 -17 L0 -14 L4.5 -17 L0 -20Z"/><path d="M-9.5 -22Q0 -19 9.5 -22" stroke="#51a1e1" stroke-width="3.6" stroke-linecap="round" fill="none"/><path d="M0 -21L0 -32" stroke="#51a1e1" stroke-width="3.6" stroke-linecap="round" fill="none"/><path d="M-1.5 -21L-6 -30" stroke="#51a1e1" stroke-width="3.4" stroke-linecap="round" fill="none"/><path d="M1.5 -21L6 -30" stroke="#51a1e1" stroke-width="3.4" stroke-linecap="round" fill="none"/><path d="M-4 -21.5L-10.5 -27" stroke="#51a1e1" stroke-width="3.2" stroke-linecap="round" fill="none"/><path d="M4 -21.5L10.5 -27" stroke="#51a1e1" stroke-width="3.2" stroke-linecap="round" fill="none"/></g><g transform="rotate(120)"><path d="M-4.5 -17 L0 -14 L4.5 -17 L0 -20Z"/><path d="M-9.5 -22Q0 -19 9.5 -22" stroke="#51a1e1" stroke-width="3.6" stroke-linecap="round" fill="none"/><path d="M0 -21L0 -32" stroke="#51a1e1" stroke-width="3.6" stroke-linecap="round" fill="none"/><path d="M-1.5 -21L-6 -30" stroke="#51a1e1" stroke-width="3.4" stroke-linecap="round" fill="none"/><path d="M1.5 -21L6 -30" stroke="#51a1e1" stroke-width="3.4" stroke-linecap="round" fill="none"/><path d="M-4 -21.5L-10.5 -27" stroke="#51a1e1" stroke-width="3.2" stroke-linecap="round" fill="none"/><path d="M4 -21.5L10.5 -27" stroke="#51a1e1" stroke-width="3.2" stroke-linecap="round" fill="none"/></g><g transform="rotate(180)"><path d="M-4.5 -17 L0 -14 L4.5 -17 L0 -20Z"/><path d="M-9.5 -22Q0 -19 9.5 -22" stroke="#51a1e1" stroke-width="3.6" stroke-linecap="round" fill="none"/><path d="M0 -21L0 -32" stroke="#51a1e1" stroke-width="3.6" stroke-linecap="round" fill="none"/><path d="M-1.5 -21L-6 -30" stroke="#51a1e1" stroke-width="3.4" stroke-linecap="round" fill="none"/><path d="M1.5 -21L6 -30" stroke="#51a1e1" stroke-width="3.4" stroke-linecap="round" fill="none"/><path d="M-4 -21.5L-10.5 -27" stroke="#51a1e1" stroke-width="3.2" stroke-linecap="round" fill="none"/><path d="M4 -21.5L10.5 -27" stroke="#51a1e1" stroke-width="3.2" stroke-linecap="round" fill="none"/></g><g transform="rotate(240)"><path d="M-4.5 -17 L0 -14 L4.5 -17 L0 -20Z"/><path d="M-9.5 -22Q0 -19 9.5 -22" stroke="#51a1e1" stroke-width="3.6" stroke-linecap="round" fill="none"/><path d="M0 -21L0 -32" stroke="#51a1e1" stroke-width="3.6" stroke-linecap="round" fill="none"/><path d="M-1.5 -21L-6 -30" stroke="#51a1e1" stroke-width="3.4" stroke-linecap="round" fill="none"/><path d="M1.5 -21L6 -30" stroke="#51a1e1" stroke-width="3.4" stroke-linecap="round" fill="none"/><path d="M-4 -21.5L-10.5 -27" stroke="#51a1e1" stroke-width="3.2" stroke-linecap="round" fill="none"/><path d="M4 -21.5L10.5 -27" stroke="#51a1e1" stroke-width="3.2" stroke-linecap="round" fill="none"/></g><g transform="rotate(300)"><path d="M-4.5 -17 L0 -14 L4.5 -17 L0 -20Z"/><path d="M-9.5 -22Q0 -19 9.5 -22" stroke="#51a1e1" stroke-width="3.6" stroke-linecap="round" fill="none"/><path d="M0 -21L0 -32" stroke="#51a1e1" stroke-width="3.6" stroke-linecap="round" fill="none"/><path d="M-1.5 -21L-6 -30" stroke="#51a1e1" stroke-width="3.4" stroke-linecap="round" fill="none"/><path d="M1.5 -21L6 -30" stroke="#51a1e1" stroke-width="3.4" stroke-linecap="round" fill="none"/><path d="M-4 -21.5L-10.5 -27" stroke="#51a1e1" stroke-width="3.2" stroke-linecap="round" fill="none"/><path d="M4 -21.5L10.5 -27" stroke="#51a1e1" stroke-width="3.2" stroke-linecap="round" fill="none"/></g></g><g transform="translate(1074 663.5)"><g transform="rotate(0)"><rect x="-1.5" y="-17" width="3" height="8"/><g transform="translate(0 -24)"><g transform="rotate(0)"><path d="M0 0L0 -8" stroke="#51a1e1" stroke-width="2.6" stroke-linecap="round" fill="none"/></g><g transform="rotate(30)"><path d="M0 0L0 -8" stroke="#51a1e1" stroke-width="2.6" stroke-linecap="round" fill="none"/></g><g transform="rotate(60)"><path d="M0 0L0 -8" stroke="#51a1e1" stroke-width="2.6" stroke-linecap="round" fill="none"/></g><g transform="rotate(90)"><path d="M0 0L0 -8" stroke="#51a1e1" stroke-width="2.6" stroke-linecap="round" fill="none"/></g><g transform="rotate(120)"><path d="M0 0L0 -8" stroke="#51a1e1" stroke-width="2.6" stroke-linecap="round" fill="none"/></g><g transform="rotate(150)"><path d="M0 0L0 -8" stroke="#51a1e1" stroke-width="2.6" stroke-linecap="round" fill="none"/></g><g transform="rotate(180)"><path d="M0 0L0 -8" stroke="#51a1e1" stroke-width="2.6" stroke-linecap="round" fill="none"/></g><g transform="rotate(210)"><path d="M0 0L0 -8" stroke="#51a1e1" stroke-width="2.6" stroke-linecap="round" fill="none"/></g><g transform="rotate(240)"><path d="M0 0L0 -8" stroke="#51a1e1" stroke-width="2.6" stroke-linecap="round" fill="none"/></g><g transform="rotate(270)"><path d="M0 0L0 -8" stroke="#51a1e1" stroke-width="2.6" stroke-linecap="round" fill="none"/></g><g transform="rotate(300)"><path d="M0 0L0 -8" stroke="#51a1e1" stroke-width="2.6" stroke-linecap="round" fill="none"/></g><g transform="rotate(330)"><path d="M0 0L0 -8" stroke="#51a1e1" stroke-width="2.6" stroke-linecap="round" fill="none"/></g><circle r="5.5"/></g></g><g transform="rotate(60)"><rect x="-1.5" y="-17" width="3" height="8"/><g transform="translate(0 -24)"><g transform="rotate(0)"><path d="M0 0L0 -8" stroke="#51a1e1" stroke-width="2.6" stroke-linecap="round" fill="none"/></g><g transform="rotate(30)"><path d="M0 0L0 -8" stroke="#51a1e1" stroke-width="2.6" stroke-linecap="round" fill="none"/></g><g transform="rotate(60)"><path d="M0 0L0 -8" stroke="#51a1e1" stroke-width="2.6" stroke-linecap="round" fill="none"/></g><g transform="rotate(90)"><path d="M0 0L0 -8" stroke="#51a1e1" stroke-width="2.6" stroke-linecap="round" fill="none"/></g><g transform="rotate(120)"><path d="M0 0L0 -8" stroke="#51a1e1" stroke-width="2.6" stroke-linecap="round" fill="none"/></g><g transform="rotate(150)"><path d="M0 0L0 -8" stroke="#51a1e1" stroke-width="2.6" stroke-linecap="round" fill="none"/></g><g transform="rotate(180)"><path d="M0 0L0 -8" stroke="#51a1e1" stroke-width="2.6" stroke-linecap="round" fill="none"/></g><g transform="rotate(210)"><path d="M0 0L0 -8" stroke="#51a1e1" stroke-width="2.6" stroke-linecap="round" fill="none"/></g><g transform="rotate(240)"><path d="M0 0L0 -8" stroke="#51a1e1" stroke-width="2.6" stroke-linecap="round" fill="none"/></g><g transform="rotate(270)"><path d="M0 0L0 -8" stroke="#51a1e1" stroke-width="2.6" stroke-linecap="round" fill="none"/></g><g transform="rotate(300)"><path d="M0 0L0 -8" stroke="#51a1e1" stroke-width="2.6" stroke-linecap="round" fill="none"/></g><g transform="rotate(330)"><path d="M0 0L0 -8" stroke="#51a1e1" stroke-width="2.6" stroke-linecap="round" fill="none"/></g><circle r="5.5"/></g></g><g transform="rotate(120)"><rect x="-1.5" y="-17" width="3" height="8"/><g transform="translate(0 -24)"><g transform="rotate(0)"><path d="M0 0L0 -8" stroke="#51a1e1" stroke-width="2.6" stroke-linecap="round" fill="none"/></g><g transform="rotate(30)"><path d="M0 0L0 -8" stroke="#51a1e1" stroke-width="2.6" stroke-linecap="round" fill="none"/></g><g transform="rotate(60)"><path d="M0 0L0 -8" stroke="#51a1e1" stroke-width="2.6" stroke-linecap="round" fill="none"/></g><g transform="rotate(90)"><path d="M0 0L0 -8" stroke="#51a1e1" stroke-width="2.6" stroke-linecap="round" fill="none"/></g><g transform="rotate(120)"><path d="M0 0L0 -8" stroke="#51a1e1" stroke-width="2.6" stroke-linecap="round" fill="none"/></g><g transform="rotate(150)"><path d="M0 0L0 -8" stroke="#51a1e1" stroke-width="2.6" stroke-linecap="round" fill="none"/></g><g transform="rotate(180)"><path d="M0 0L0 -8" stroke="#51a1e1" stroke-width="2.6" stroke-linecap="round" fill="none"/></g><g transform="rotate(210)"><path d="M0 0L0 -8" stroke="#51a1e1" stroke-width="2.6" stroke-linecap="round" fill="none"/></g><g transform="rotate(240)"><path d="M0 0L0 -8" stroke="#51a1e1" stroke-width="2.6" stroke-linecap="round" fill="none"/></g><g transform="rotate(270)"><path d="M0 0L0 -8" stroke="#51a1e1" stroke-width="2.6" stroke-linecap="round" fill="none"/></g><g transform="rotate(300)"><path d="M0 0L0 -8" stroke="#51a1e1" stroke-width="2.6" stroke-linecap="round" fill="none"/></g><g transform="rotate(330)"><path d="M0 0L0 -8" stroke="#51a1e1" stroke-width="2.6" stroke-linecap="round" fill="none"/></g><circle r="5.5"/></g></g><g transform="rotate(180)"><rect x="-1.5" y="-17" width="3" height="8"/><g transform="translate(0 -24)"><g transform="rotate(0)"><path d="M0 0L0 -8" stroke="#51a1e1" stroke-width="2.6" stroke-linecap="round" fill="none"/></g><g transform="rotate(30)"><path d="M0 0L0 -8" stroke="#51a1e1" stroke-width="2.6" stroke-linecap="round" fill="none"/></g><g transform="rotate(60)"><path d="M0 0L0 -8" stroke="#51a1e1" stroke-width="2.6" stroke-linecap="round" fill="none"/></g><g transform="rotate(90)"><path d="M0 0L0 -8" stroke="#51a1e1" stroke-width="2.6" stroke-linecap="round" fill="none"/></g><g transform="rotate(120)"><path d="M0 0L0 -8" stroke="#51a1e1" stroke-width="2.6" stroke-linecap="round" fill="none"/></g><g transform="rotate(150)"><path d="M0 0L0 -8" stroke="#51a1e1" stroke-width="2.6" stroke-linecap="round" fill="none"/></g><g transform="rotate(180)"><path d="M0 0L0 -8" stroke="#51a1e1" stroke-width="2.6" stroke-linecap="round" fill="none"/></g><g transform="rotate(210)"><path d="M0 0L0 -8" stroke="#51a1e1" stroke-width="2.6" stroke-linecap="round" fill="none"/></g><g transform="rotate(240)"><path d="M0 0L0 -8" stroke="#51a1e1" stroke-width="2.6" stroke-linecap="round" fill="none"/></g><g transform="rotate(270)"><path d="M0 0L0 -8" stroke="#51a1e1" stroke-width="2.6" stroke-linecap="round" fill="none"/></g><g transform="rotate(300)"><path d="M0 0L0 -8" stroke="#51a1e1" stroke-width="2.6" stroke-linecap="round" fill="none"/></g><g transform="rotate(330)"><path d="M0 0L0 -8" stroke="#51a1e1" stroke-width="2.6" stroke-linecap="round" fill="none"/></g><circle r="5.5"/></g></g><g transform="rotate(240)"><rect x="-1.5" y="-17" width="3" height="8"/><g transform="translate(0 -24)"><g transform="rotate(0)"><path d="M0 0L0 -8" stroke="#51a1e1" stroke-width="2.6" stroke-linecap="round" fill="none"/></g><g transform="rotate(30)"><path d="M0 0L0 -8" stroke="#51a1e1" stroke-width="2.6" stroke-linecap="round" fill="none"/></g><g transform="rotate(60)"><path d="M0 0L0 -8" stroke="#51a1e1" stroke-width="2.6" stroke-linecap="round" fill="none"/></g><g transform="rotate(90)"><path d="M0 0L0 -8" stroke="#51a1e1" stroke-width="2.6" stroke-linecap="round" fill="none"/></g><g transform="rotate(120)"><path d="M0 0L0 -8" stroke="#51a1e1" stroke-width="2.6" stroke-linecap="round" fill="none"/></g><g transform="rotate(150)"><path d="M0 0L0 -8" stroke="#51a1e1" stroke-width="2.6" stroke-linecap="round" fill="none"/></g><g transform="rotate(180)"><path d="M0 0L0 -8" stroke="#51a1e1" stroke-width="2.6" stroke-linecap="round" fill="none"/></g><g transform="rotate(210)"><path d="M0 0L0 -8" stroke="#51a1e1" stroke-width="2.6" stroke-linecap="round" fill="none"/></g><g transform="rotate(240)"><path d="M0 0L0 -8" stroke="#51a1e1" stroke-width="2.6" stroke-linecap="round" fill="none"/></g><g transform="rotate(270)"><path d="M0 0L0 -8" stroke="#51a1e1" stroke-width="2.6" stroke-linecap="round" fill="none"/></g><g transform="rotate(300)"><path d="M0 0L0 -8" stroke="#51a1e1" stroke-width="2.6" stroke-linecap="round" fill="none"/></g><g transform="rotate(330)"><path d="M0 0L0 -8" stroke="#51a1e1" stroke-width="2.6" stroke-linecap="round" fill="none"/></g><circle r="5.5"/></g></g><g transform="rotate(300)"><rect x="-1.5" y="-17" width="3" height="8"/><g transform="translate(0 -24)"><g transform="rotate(0)"><path d="M0 0L0 -8" stroke="#51a1e1" stroke-width="2.6" stroke-linecap="round" fill="none"/></g><g transform="rotate(30)"><path d="M0 0L0 -8" stroke="#51a1e1" stroke-width="2.6" stroke-linecap="round" fill="none"/></g><g transform="rotate(60)"><path d="M0 0L0 -8" stroke="#51a1e1" stroke-width="2.6" stroke-linecap="round" fill="none"/></g><g transform="rotate(90)"><path d="M0 0L0 -8" stroke="#51a1e1" stroke-width="2.6" stroke-linecap="round" fill="none"/></g><g transform="rotate(120)"><path d="M0 0L0 -8" stroke="#51a1e1" stroke-width="2.6" stroke-linecap="round" fill="none"/></g><g transform="rotate(150)"><path d="M0 0L0 -8" stroke="#51a1e1" stroke-width="2.6" stroke-linecap="round" fill="none"/></g><g transform="rotate(180)"><path d="M0 0L0 -8" stroke="#51a1e1" stroke-width="2.6" stroke-linecap="round" fill="none"/></g><g transform="rotate(210)"><path d="M0 0L0 -8" stroke="#51a1e1" stroke-width="2.6" stroke-linecap="round" fill="none"/></g><g transform="rotate(240)"><path d="M0 0L0 -8" stroke="#51a1e1" stroke-width="2.6" stroke-linecap="round" fill="none"/></g><g transform="rotate(270)"><path d="M0 0L0 -8" stroke="#51a1e1" stroke-width="2.6" stroke-linecap="round" fill="none"/></g><g transform="rotate(300)"><path d="M0 0L0 -8" stroke="#51a1e1" stroke-width="2.6" stroke-linecap="round" fill="none"/></g><g transform="rotate(330)"><path d="M0 0L0 -8" stroke="#51a1e1" stroke-width="2.6" stroke-linecap="round" fill="none"/></g><circle r="5.5"/></g></g><circle r="10"/><circle r="8.2" fill="none" stroke="#fff" stroke-width="0.9"/><circle r="6.4" fill="none" stroke="#fff" stroke-width="0.9"/><circle r="4.8" fill="#fff"/></g><g transform="translate(667 768)"><g transform="rotate(0)"><rect x="-0.8" y="-21" width="1.6" height="21"/><path d="M0.8 -20 L2.29 -25.95 L0 -37 L-2.29 -25.95 L-0.8 -20Z"/><path d="M0.55 -20.24 L-0.84 -26.9 L-6 -33.5 L-4.56 -25.25 L-0.55 -19.76Z"/><path d="M0.55 -19.76 L4.56 -25.25 L6 -33.5 L0.84 -26.9 L-0.55 -20.24Z"/><path d="M0 -4 L-1.6 -8.5 L0 -13 L1.6 -8.5Z"/></g><g transform="rotate(60)"><rect x="-0.8" y="-21" width="1.6" height="21"/><path d="M0.8 -20 L2.29 -25.95 L0 -37 L-2.29 -25.95 L-0.8 -20Z"/><path d="M0.55 -20.24 L-0.84 -26.9 L-6 -33.5 L-4.56 -25.25 L-0.55 -19.76Z"/><path d="M0.55 -19.76 L4.56 -25.25 L6 -33.5 L0.84 -26.9 L-0.55 -20.24Z"/><path d="M0 -4 L-1.6 -8.5 L0 -13 L1.6 -8.5Z"/></g><g transform="rotate(120)"><rect x="-0.8" y="-21" width="1.6" height="21"/><path d="M0.8 -20 L2.29 -25.95 L0 -37 L-2.29 -25.95 L-0.8 -20Z"/><path d="M0.55 -20.24 L-0.84 -26.9 L-6 -33.5 L-4.56 -25.25 L-0.55 -19.76Z"/><path d="M0.55 -19.76 L4.56 -25.25 L6 -33.5 L0.84 -26.9 L-0.55 -20.24Z"/><path d="M0 -4 L-1.6 -8.5 L0 -13 L1.6 -8.5Z"/></g><g transform="rotate(180)"><rect x="-0.8" y="-21" width="1.6" height="21"/><path d="M0.8 -20 L2.29 -25.95 L0 -37 L-2.29 -25.95 L-0.8 -20Z"/><path d="M0.55 -20.24 L-0.84 -26.9 L-6 -33.5 L-4.56 -25.25 L-0.55 -19.76Z"/><path d="M0.55 -19.76 L4.56 -25.25 L6 -33.5 L0.84 -26.9 L-0.55 -20.24Z"/><path d="M0 -4 L-1.6 -8.5 L0 -13 L1.6 -8.5Z"/></g><g transform="rotate(240)"><rect x="-0.8" y="-21" width="1.6" height="21"/><path d="M0.8 -20 L2.29 -25.95 L0 -37 L-2.29 -25.95 L-0.8 -20Z"/><path d="M0.55 -20.24 L-0.84 -26.9 L-6 -33.5 L-4.56 -25.25 L-0.55 -19.76Z"/><path d="M0.55 -19.76 L4.56 -25.25 L6 -33.5 L0.84 -26.9 L-0.55 -20.24Z"/><path d="M0 -4 L-1.6 -8.5 L0 -13 L1.6 -8.5Z"/></g><g transform="rotate(300)"><rect x="-0.8" y="-21" width="1.6" height="21"/><path d="M0.8 -20 L2.29 -25.95 L0 -37 L-2.29 -25.95 L-0.8 -20Z"/><path d="M0.55 -20.24 L-0.84 -26.9 L-6 -33.5 L-4.56 -25.25 L-0.55 -19.76Z"/><path d="M0.55 -19.76 L4.56 -25.25 L6 -33.5 L0.84 -26.9 L-0.55 -20.24Z"/><path d="M0 -4 L-1.6 -8.5 L0 -13 L1.6 -8.5Z"/></g></g><g transform="translate(765 766)"><g transform="rotate(0)"><rect x="-1.1" y="-20" width="2.2" height="20"/><path d="M0.8 -19 L2.29 -23.9 L0 -33 L-2.29 -23.9 L-0.8 -19Z"/><path d="M0.54 -19.26 L-0.41 -24.6 L-5 -29.5 L-4.09 -22.85 L-0.54 -18.74Z"/><path d="M0.54 -18.74 L4.09 -22.85 L5 -29.5 L0.41 -24.6 L-0.54 -19.26Z"/><path d="M0.98 -11.39 L-7.37 -15.16 L-0.98 -8.61Z"/><path d="M0.98 -8.61 L7.37 -15.16 L-0.98 -11.39Z"/><path d="M0.86 -17.23 L-5.73 -20.02 L-0.86 -14.77Z"/><path d="M0.86 -14.77 L5.73 -20.02 L-0.86 -17.23Z"/><path d="M3 0 L0 -15 L-3 0Z"/></g><g transform="rotate(60)"><rect x="-1.1" y="-20" width="2.2" height="20"/><path d="M0.8 -19 L2.29 -23.9 L0 -33 L-2.29 -23.9 L-0.8 -19Z"/><path d="M0.54 -19.26 L-0.41 -24.6 L-5 -29.5 L-4.09 -22.85 L-0.54 -18.74Z"/><path d="M0.54 -18.74 L4.09 -22.85 L5 -29.5 L0.41 -24.6 L-0.54 -19.26Z"/><path d="M0.98 -11.39 L-7.37 -15.16 L-0.98 -8.61Z"/><path d="M0.98 -8.61 L7.37 -15.16 L-0.98 -11.39Z"/><path d="M0.86 -17.23 L-5.73 -20.02 L-0.86 -14.77Z"/><path d="M0.86 -14.77 L5.73 -20.02 L-0.86 -17.23Z"/><path d="M3 0 L0 -15 L-3 0Z"/></g><g transform="rotate(120)"><rect x="-1.1" y="-20" width="2.2" height="20"/><path d="M0.8 -19 L2.29 -23.9 L0 -33 L-2.29 -23.9 L-0.8 -19Z"/><path d="M0.54 -19.26 L-0.41 -24.6 L-5 -29.5 L-4.09 -22.85 L-0.54 -18.74Z"/><path d="M0.54 -18.74 L4.09 -22.85 L5 -29.5 L0.41 -24.6 L-0.54 -19.26Z"/><path d="M0.98 -11.39 L-7.37 -15.16 L-0.98 -8.61Z"/><path d="M0.98 -8.61 L7.37 -15.16 L-0.98 -11.39Z"/><path d="M0.86 -17.23 L-5.73 -20.02 L-0.86 -14.77Z"/><path d="M0.86 -14.77 L5.73 -20.02 L-0.86 -17.23Z"/><path d="M3 0 L0 -15 L-3 0Z"/></g><g transform="rotate(180)"><rect x="-1.1" y="-20" width="2.2" height="20"/><path d="M0.8 -19 L2.29 -23.9 L0 -33 L-2.29 -23.9 L-0.8 -19Z"/><path d="M0.54 -19.26 L-0.41 -24.6 L-5 -29.5 L-4.09 -22.85 L-0.54 -18.74Z"/><path d="M0.54 -18.74 L4.09 -22.85 L5 -29.5 L0.41 -24.6 L-0.54 -19.26Z"/><path d="M0.98 -11.39 L-7.37 -15.16 L-0.98 -8.61Z"/><path d="M0.98 -8.61 L7.37 -15.16 L-0.98 -11.39Z"/><path d="M0.86 -17.23 L-5.73 -20.02 L-0.86 -14.77Z"/><path d="M0.86 -14.77 L5.73 -20.02 L-0.86 -17.23Z"/><path d="M3 0 L0 -15 L-3 0Z"/></g><g transform="rotate(240)"><rect x="-1.1" y="-20" width="2.2" height="20"/><path d="M0.8 -19 L2.29 -23.9 L0 -33 L-2.29 -23.9 L-0.8 -19Z"/><path d="M0.54 -19.26 L-0.41 -24.6 L-5 -29.5 L-4.09 -22.85 L-0.54 -18.74Z"/><path d="M0.54 -18.74 L4.09 -22.85 L5 -29.5 L0.41 -24.6 L-0.54 -19.26Z"/><path d="M0.98 -11.39 L-7.37 -15.16 L-0.98 -8.61Z"/><path d="M0.98 -8.61 L7.37 -15.16 L-0.98 -11.39Z"/><path d="M0.86 -17.23 L-5.73 -20.02 L-0.86 -14.77Z"/><path d="M0.86 -14.77 L5.73 -20.02 L-0.86 -17.23Z"/><path d="M3 0 L0 -15 L-3 0Z"/></g><g transform="rotate(300)"><rect x="-1.1" y="-20" width="2.2" height="20"/><path d="M0.8 -19 L2.29 -23.9 L0 -33 L-2.29 -23.9 L-0.8 -19Z"/><path d="M0.54 -19.26 L-0.41 -24.6 L-5 -29.5 L-4.09 -22.85 L-0.54 -18.74Z"/><path d="M0.54 -18.74 L4.09 -22.85 L5 -29.5 L0.41 -24.6 L-0.54 -19.26Z"/><path d="M0.98 -11.39 L-7.37 -15.16 L-0.98 -8.61Z"/><path d="M0.98 -8.61 L7.37 -15.16 L-0.98 -11.39Z"/><path d="M0.86 -17.23 L-5.73 -20.02 L-0.86 -14.77Z"/><path d="M0.86 -14.77 L5.73 -20.02 L-0.86 -17.23Z"/><path d="M3 0 L0 -15 L-3 0Z"/></g><circle r="6"/></g><g transform="translate(869 766)"><g transform="rotate(0)"><path d="M3.5 0 L0 -34 L-3.5 0Z"/><path d="M0.98 -7.39 L-7.37 -11.16 L-0.98 -4.61Z"/><path d="M0.98 -4.61 L7.37 -11.16 L-0.98 -7.39Z"/><path d="M0.98 -12.39 L-9.01 -17.31 L-0.98 -9.61Z"/><path d="M0.98 -9.61 L9.01 -17.31 L-0.98 -12.39Z"/><path d="M0.98 -17.39 L-9.01 -22.31 L-0.98 -14.61Z"/><path d="M0.98 -14.61 L9.01 -22.31 L-0.98 -17.39Z"/><path d="M0.98 -22.39 L-8.19 -26.74 L-0.98 -19.61Z"/><path d="M0.98 -19.61 L8.19 -26.74 L-0.98 -22.39Z"/><path d="M0.98 -27.39 L-6.55 -30.59 L-0.98 -24.61Z"/><path d="M0.98 -24.61 L6.55 -30.59 L-0.98 -27.39Z"/><path d="M0.98 -31.39 L-4.91 -33.44 L-0.98 -28.61Z"/><path d="M0.98 -28.61 L4.91 -33.44 L-0.98 -31.39Z"/></g><g transform="rotate(60)"><path d="M3.5 0 L0 -34 L-3.5 0Z"/><path d="M0.98 -7.39 L-7.37 -11.16 L-0.98 -4.61Z"/><path d="M0.98 -4.61 L7.37 -11.16 L-0.98 -7.39Z"/><path d="M0.98 -12.39 L-9.01 -17.31 L-0.98 -9.61Z"/><path d="M0.98 -9.61 L9.01 -17.31 L-0.98 -12.39Z"/><path d="M0.98 -17.39 L-9.01 -22.31 L-0.98 -14.61Z"/><path d="M0.98 -14.61 L9.01 -22.31 L-0.98 -17.39Z"/><path d="M0.98 -22.39 L-8.19 -26.74 L-0.98 -19.61Z"/><path d="M0.98 -19.61 L8.19 -26.74 L-0.98 -22.39Z"/><path d="M0.98 -27.39 L-6.55 -30.59 L-0.98 -24.61Z"/><path d="M0.98 -24.61 L6.55 -30.59 L-0.98 -27.39Z"/><path d="M0.98 -31.39 L-4.91 -33.44 L-0.98 -28.61Z"/><path d="M0.98 -28.61 L4.91 -33.44 L-0.98 -31.39Z"/></g><g transform="rotate(120)"><path d="M3.5 0 L0 -34 L-3.5 0Z"/><path d="M0.98 -7.39 L-7.37 -11.16 L-0.98 -4.61Z"/><path d="M0.98 -4.61 L7.37 -11.16 L-0.98 -7.39Z"/><path d="M0.98 -12.39 L-9.01 -17.31 L-0.98 -9.61Z"/><path d="M0.98 -9.61 L9.01 -17.31 L-0.98 -12.39Z"/><path d="M0.98 -17.39 L-9.01 -22.31 L-0.98 -14.61Z"/><path d="M0.98 -14.61 L9.01 -22.31 L-0.98 -17.39Z"/><path d="M0.98 -22.39 L-8.19 -26.74 L-0.98 -19.61Z"/><path d="M0.98 -19.61 L8.19 -26.74 L-0.98 -22.39Z"/><path d="M0.98 -27.39 L-6.55 -30.59 L-0.98 -24.61Z"/><path d="M0.98 -24.61 L6.55 -30.59 L-0.98 -27.39Z"/><path d="M0.98 -31.39 L-4.91 -33.44 L-0.98 -28.61Z"/><path d="M0.98 -28.61 L4.91 -33.44 L-0.98 -31.39Z"/></g><g transform="rotate(180)"><path d="M3.5 0 L0 -34 L-3.5 0Z"/><path d="M0.98 -7.39 L-7.37 -11.16 L-0.98 -4.61Z"/><path d="M0.98 -4.61 L7.37 -11.16 L-0.98 -7.39Z"/><path d="M0.98 -12.39 L-9.01 -17.31 L-0.98 -9.61Z"/><path d="M0.98 -9.61 L9.01 -17.31 L-0.98 -12.39Z"/><path d="M0.98 -17.39 L-9.01 -22.31 L-0.98 -14.61Z"/><path d="M0.98 -14.61 L9.01 -22.31 L-0.98 -17.39Z"/><path d="M0.98 -22.39 L-8.19 -26.74 L-0.98 -19.61Z"/><path d="M0.98 -19.61 L8.19 -26.74 L-0.98 -22.39Z"/><path d="M0.98 -27.39 L-6.55 -30.59 L-0.98 -24.61Z"/><path d="M0.98 -24.61 L6.55 -30.59 L-0.98 -27.39Z"/><path d="M0.98 -31.39 L-4.91 -33.44 L-0.98 -28.61Z"/><path d="M0.98 -28.61 L4.91 -33.44 L-0.98 -31.39Z"/></g><g transform="rotate(240)"><path d="M3.5 0 L0 -34 L-3.5 0Z"/><path d="M0.98 -7.39 L-7.37 -11.16 L-0.98 -4.61Z"/><path d="M0.98 -4.61 L7.37 -11.16 L-0.98 -7.39Z"/><path d="M0.98 -12.39 L-9.01 -17.31 L-0.98 -9.61Z"/><path d="M0.98 -9.61 L9.01 -17.31 L-0.98 -12.39Z"/><path d="M0.98 -17.39 L-9.01 -22.31 L-0.98 -14.61Z"/><path d="M0.98 -14.61 L9.01 -22.31 L-0.98 -17.39Z"/><path d="M0.98 -22.39 L-8.19 -26.74 L-0.98 -19.61Z"/><path d="M0.98 -19.61 L8.19 -26.74 L-0.98 -22.39Z"/><path d="M0.98 -27.39 L-6.55 -30.59 L-0.98 -24.61Z"/><path d="M0.98 -24.61 L6.55 -30.59 L-0.98 -27.39Z"/><path d="M0.98 -31.39 L-4.91 -33.44 L-0.98 -28.61Z"/><path d="M0.98 -28.61 L4.91 -33.44 L-0.98 -31.39Z"/></g><g transform="rotate(300)"><path d="M3.5 0 L0 -34 L-3.5 0Z"/><path d="M0.98 -7.39 L-7.37 -11.16 L-0.98 -4.61Z"/><path d="M0.98 -4.61 L7.37 -11.16 L-0.98 -7.39Z"/><path d="M0.98 -12.39 L-9.01 -17.31 L-0.98 -9.61Z"/><path d="M0.98 -9.61 L9.01 -17.31 L-0.98 -12.39Z"/><path d="M0.98 -17.39 L-9.01 -22.31 L-0.98 -14.61Z"/><path d="M0.98 -14.61 L9.01 -22.31 L-0.98 -17.39Z"/><path d="M0.98 -22.39 L-8.19 -26.74 L-0.98 -19.61Z"/><path d="M0.98 -19.61 L8.19 -26.74 L-0.98 -22.39Z"/><path d="M0.98 -27.39 L-6.55 -30.59 L-0.98 -24.61Z"/><path d="M0.98 -24.61 L6.55 -30.59 L-0.98 -27.39Z"/><path d="M0.98 -31.39 L-4.91 -33.44 L-0.98 -28.61Z"/><path d="M0.98 -28.61 L4.91 -33.44 L-0.98 -31.39Z"/></g><circle r="8"/></g><g transform="translate(974 766)"><g transform="rotate(0)"><path d="M0 -9L-6 -18Q-6 -27 0 -27Q6 -27 6 -18Z" fill="none" stroke="#51a1e1" stroke-width="2.6"/></g><g transform="rotate(45)"><path d="M0 -9L-6 -18Q-6 -27 0 -27Q6 -27 6 -18Z" fill="none" stroke="#51a1e1" stroke-width="2.6"/></g><g transform="rotate(90)"><path d="M0 -9L-6 -18Q-6 -27 0 -27Q6 -27 6 -18Z" fill="none" stroke="#51a1e1" stroke-width="2.6"/></g><g transform="rotate(135)"><path d="M0 -9L-6 -18Q-6 -27 0 -27Q6 -27 6 -18Z" fill="none" stroke="#51a1e1" stroke-width="2.6"/></g><g transform="rotate(180)"><path d="M0 -9L-6 -18Q-6 -27 0 -27Q6 -27 6 -18Z" fill="none" stroke="#51a1e1" stroke-width="2.6"/></g><g transform="rotate(225)"><path d="M0 -9L-6 -18Q-6 -27 0 -27Q6 -27 6 -18Z" fill="none" stroke="#51a1e1" stroke-width="2.6"/></g><g transform="rotate(270)"><path d="M0 -9L-6 -18Q-6 -27 0 -27Q6 -27 6 -18Z" fill="none" stroke="#51a1e1" stroke-width="2.6"/></g><g transform="rotate(315)"><path d="M0 -9L-6 -18Q-6 -27 0 -27Q6 -27 6 -18Z" fill="none" stroke="#51a1e1" stroke-width="2.6"/></g><g transform="rotate(22.5)"><circle cx="-2.5" cy="-24" r="2.4"/><circle cx="2.5" cy="-24" r="2.4"/><circle cx="-3" cy="-28" r="2.2"/><circle cx="3" cy="-28" r="2.2"/><circle cx="0" cy="-20" r="2"/></g><g transform="rotate(67.5)"><circle cx="-2.5" cy="-24" r="2.4"/><circle cx="2.5" cy="-24" r="2.4"/><circle cx="-3" cy="-28" r="2.2"/><circle cx="3" cy="-28" r="2.2"/><circle cx="0" cy="-20" r="2"/></g><g transform="rotate(112.5)"><circle cx="-2.5" cy="-24" r="2.4"/><circle cx="2.5" cy="-24" r="2.4"/><circle cx="-3" cy="-28" r="2.2"/><circle cx="3" cy="-28" r="2.2"/><circle cx="0" cy="-20" r="2"/></g><g transform="rotate(157.5)"><circle cx="-2.5" cy="-24" r="2.4"/><circle cx="2.5" cy="-24" r="2.4"/><circle cx="-3" cy="-28" r="2.2"/><circle cx="3" cy="-28" r="2.2"/><circle cx="0" cy="-20" r="2"/></g><g transform="rotate(202.5)"><circle cx="-2.5" cy="-24" r="2.4"/><circle cx="2.5" cy="-24" r="2.4"/><circle cx="-3" cy="-28" r="2.2"/><circle cx="3" cy="-28" r="2.2"/><circle cx="0" cy="-20" r="2"/></g><g transform="rotate(247.5)"><circle cx="-2.5" cy="-24" r="2.4"/><circle cx="2.5" cy="-24" r="2.4"/><circle cx="-3" cy="-28" r="2.2"/><circle cx="3" cy="-28" r="2.2"/><circle cx="0" cy="-20" r="2"/></g><g transform="rotate(292.5)"><circle cx="-2.5" cy="-24" r="2.4"/><circle cx="2.5" cy="-24" r="2.4"/><circle cx="-3" cy="-28" r="2.2"/><circle cx="3" cy="-28" r="2.2"/><circle cx="0" cy="-20" r="2"/></g><g transform="rotate(337.5)"><circle cx="-2.5" cy="-24" r="2.4"/><circle cx="2.5" cy="-24" r="2.4"/><circle cx="-3" cy="-28" r="2.2"/><circle cx="3" cy="-28" r="2.2"/><circle cx="0" cy="-20" r="2"/></g><g transform="rotate(0)"><path d="M1.25 -26 L0 -33 L-1.25 -26Z"/><path d="M0.69 -30.58 L-2.57 -33.06 L-0.69 -29.42Z"/><path d="M0.69 -29.42 L2.57 -33.06 L-0.69 -30.58Z"/></g><g transform="rotate(90)"><path d="M1.25 -26 L0 -33 L-1.25 -26Z"/><path d="M0.69 -30.58 L-2.57 -33.06 L-0.69 -29.42Z"/><path d="M0.69 -29.42 L2.57 -33.06 L-0.69 -30.58Z"/></g><g transform="rotate(180)"><path d="M1.25 -26 L0 -33 L-1.25 -26Z"/><path d="M0.69 -30.58 L-2.57 -33.06 L-0.69 -29.42Z"/><path d="M0.69 -29.42 L2.57 -33.06 L-0.69 -30.58Z"/></g><g transform="rotate(270)"><path d="M1.25 -26 L0 -33 L-1.25 -26Z"/><path d="M0.69 -30.58 L-2.57 -33.06 L-0.69 -29.42Z"/><path d="M0.69 -29.42 L2.57 -33.06 L-0.69 -30.58Z"/></g><circle r="10"/><g transform="rotate(0)"><path d="M1.2 -8 L0 -14 L-1.2 -8Z"/></g><g transform="rotate(22.5)"><path d="M1.2 -8 L0 -14 L-1.2 -8Z"/></g><g transform="rotate(45)"><path d="M1.2 -8 L0 -14 L-1.2 -8Z"/></g><g transform="rotate(67.5)"><path d="M1.2 -8 L0 -14 L-1.2 -8Z"/></g><g transform="rotate(90)"><path d="M1.2 -8 L0 -14 L-1.2 -8Z"/></g><g transform="rotate(112.5)"><path d="M1.2 -8 L0 -14 L-1.2 -8Z"/></g><g transform="rotate(135)"><path d="M1.2 -8 L0 -14 L-1.2 -8Z"/></g><g transform="rotate(157.5)"><path d="M1.2 -8 L0 -14 L-1.2 -8Z"/></g><g transform="rotate(180)"><path d="M1.2 -8 L0 -14 L-1.2 -8Z"/></g><g transform="rotate(202.5)"><path d="M1.2 -8 L0 -14 L-1.2 -8Z"/></g><g transform="rotate(225)"><path d="M1.2 -8 L0 -14 L-1.2 -8Z"/></g><g transform="rotate(247.5)"><path d="M1.2 -8 L0 -14 L-1.2 -8Z"/></g><g transform="rotate(270)"><path d="M1.2 -8 L0 -14 L-1.2 -8Z"/></g><g transform="rotate(292.5)"><path d="M1.2 -8 L0 -14 L-1.2 -8Z"/></g><g transform="rotate(315)"><path d="M1.2 -8 L0 -14 L-1.2 -8Z"/></g><g transform="rotate(337.5)"><path d="M1.2 -8 L0 -14 L-1.2 -8Z"/></g><g transform="rotate(22.5)"><path d="M0 -10 L-1.5 -14 L0 -18 L1.5 -14Z"/></g><g transform="rotate(67.5)"><path d="M0 -10 L-1.5 -14 L0 -18 L1.5 -14Z"/></g><g transform="rotate(112.5)"><path d="M0 -10 L-1.5 -14 L0 -18 L1.5 -14Z"/></g><g transform="rotate(157.5)"><path d="M0 -10 L-1.5 -14 L0 -18 L1.5 -14Z"/></g><g transform="rotate(202.5)"><path d="M0 -10 L-1.5 -14 L0 -18 L1.5 -14Z"/></g><g transform="rotate(247.5)"><path d="M0 -10 L-1.5 -14 L0 -18 L1.5 -14Z"/></g><g transform="rotate(292.5)"><path d="M0 -10 L-1.5 -14 L0 -18 L1.5 -14Z"/></g><g transform="rotate(337.5)"><path d="M0 -10 L-1.5 -14 L0 -18 L1.5 -14Z"/></g></g><g transform="translate(1073 768)"><g transform="rotate(0)"><path d="M1 -7 L0 -36 L-1 -7Z"/><path d="M0 -19 L-2.1 -26 L0 -37 L2.1 -26Z"/><path d="M0 -7 L-2 -12 L0 -19 L2 -12Z"/></g><g transform="rotate(45)"><path d="M1 -7 L0 -36 L-1 -7Z"/><path d="M0 -19 L-2.1 -26 L0 -37 L2.1 -26Z"/><path d="M0 -7 L-2 -12 L0 -19 L2 -12Z"/></g><g transform="rotate(90)"><path d="M1 -7 L0 -36 L-1 -7Z"/><path d="M0 -19 L-2.1 -26 L0 -37 L2.1 -26Z"/><path d="M0 -7 L-2 -12 L0 -19 L2 -12Z"/></g><g transform="rotate(135)"><path d="M1 -7 L0 -36 L-1 -7Z"/><path d="M0 -19 L-2.1 -26 L0 -37 L2.1 -26Z"/><path d="M0 -7 L-2 -12 L0 -19 L2 -12Z"/></g><g transform="rotate(180)"><path d="M1 -7 L0 -36 L-1 -7Z"/><path d="M0 -19 L-2.1 -26 L0 -37 L2.1 -26Z"/><path d="M0 -7 L-2 -12 L0 -19 L2 -12Z"/></g><g transform="rotate(225)"><path d="M1 -7 L0 -36 L-1 -7Z"/><path d="M0 -19 L-2.1 -26 L0 -37 L2.1 -26Z"/><path d="M0 -7 L-2 -12 L0 -19 L2 -12Z"/></g><g transform="rotate(270)"><path d="M1 -7 L0 -36 L-1 -7Z"/><path d="M0 -19 L-2.1 -26 L0 -37 L2.1 -26Z"/><path d="M0 -7 L-2 -12 L0 -19 L2 -12Z"/></g><g transform="rotate(315)"><path d="M1 -7 L0 -36 L-1 -7Z"/><path d="M0 -19 L-2.1 -26 L0 -37 L2.1 -26Z"/><path d="M0 -7 L-2 -12 L0 -19 L2 -12Z"/></g><circle r="2.2"/><g transform="rotate(22.5)"><circle cx="0" cy="-5" r="1.5"/></g><g transform="rotate(67.5)"><circle cx="0" cy="-5" r="1.5"/></g><g transform="rotate(112.5)"><circle cx="0" cy="-5" r="1.5"/></g><g transform="rotate(157.5)"><circle cx="0" cy="-5" r="1.5"/></g><g transform="rotate(202.5)"><circle cx="0" cy="-5" r="1.5"/></g><g transform="rotate(247.5)"><circle cx="0" cy="-5" r="1.5"/></g><g transform="rotate(292.5)"><circle cx="0" cy="-5" r="1.5"/></g><g transform="rotate(337.5)"><circle cx="0" cy="-5" r="1.5"/></g><g transform="rotate(0)"><circle cx="0" cy="-5" r="1.1"/></g><g transform="rotate(45)"><circle cx="0" cy="-5" r="1.1"/></g><g transform="rotate(90)"><circle cx="0" cy="-5" r="1.1"/></g><g transform="rotate(135)"><circle cx="0" cy="-5" r="1.1"/></g><g transform="rotate(180)"><circle cx="0" cy="-5" r="1.1"/></g><g transform="rotate(225)"><circle cx="0" cy="-5" r="1.1"/></g><g transform="rotate(270)"><circle cx="0" cy="-5" r="1.1"/></g><g transform="rotate(315)"><circle cx="0" cy="-5" r="1.1"/></g></g></g></svg><div class="a" style="left:1662px;top:64px;width:258px;height:977px;background:#2b2b2b"></div><div class="a" style="left:1664px;top:64px;width:254px;height:13px;background:#353535"></div><svg class="a" style="left:1907px;top:68px" width="9" height="6"><path d="M0 0V6L3.5 3Z M4.5 0V6L8 3Z" fill="#cfcfcf"/></svg><div class="a" style="left:1664px;top:77px;width:254px;height:17px;background:#313131"></div><div class="a" style="left:1664px;top:77px;width:62px;height:17px;background:#4a4a4a"></div><svg class="a" style="left:1669px;top:80px" width="6" height="10"><path d="M0.5 4L3 1L5.5 4M0.5 6L3 9L5.5 6" fill="none" stroke="#d8d8d8" stroke-width="1.1"/></svg><div class="t" style="left:1676px;top:80px;font-size:9.7px;font-weight:bold;color:#e8e8e8">Farbhilfe</div><div class="a" style="left:1726px;top:77px;width:40px;height:17px;background:#3b3b3b"></div><div class="t" style="left:1733px;top:80px;font-size:9.7px;font-weight:bold;color:#9a9a9a">Kuler</div><svg class="a" style="left:1900px;top:81px" width="17" height="9"><path d="M0 2H5L2.5 5Z" fill="#cfcfcf"/><path d="M6 0.5H16M6 3H16M6 5.5H16M6 8H16" stroke="#cfcfcf" stroke-width="1"/></svg><div class="a" style="left:1664px;top:94px;width:254px;height:189px;background:#4a4a4a"></div><div class="a" style="left:1669px;top:102px;width:21px;height:21px;background:#fff;border:2px solid #fff;outline:0px"></div><div class="a" style="left:1671px;top:104px;width:17px;height:17px;border:1px solid #111;background:#fff"></div><div class="a" style="left:1697px;top:102px;width:200px;height:22px;background:#e3e3e3;border:1px solid #2e2e2e"></div><div class="a" style="left:1699px;top:104px;width:82px;height:18px;background:#2a2a3a"></div><div class="a" style="left:1700px;top:105px;width:16px;height:16px;background:#fff;border:1px solid #222"></div><div class="a" style="left:1716px;top:105px;width:64px;height:16px;background:linear-gradient(90deg,#b7a3a3 0,#b3a7a4 12px,#b5b2a0 20px,#a8a890 31px,#b8f5c8 33px,#b8f5c8 47px,#9090bb 48px,#9090bb 64px)"></div><div class="a" style="left:1897px;top:102px;width:15px;height:22px;background:#555;border:1px solid #333"></div><svg class="a" style="left:1901px;top:112px" width="7" height="4"><path d="M0 0H7L3.5 4Z" fill="#ddd"/></svg><div class="t" style="left:1687px;top:133px;font-size:10px;font-weight:bold;color:#e0e0e0">Schattierungen</div><svg class="a" style="left:1788px;top:137px" width="6" height="3"><path d="M0 0H6L3.0 3Z" fill="#ccc"/></svg><div class="t" style="left:1849px;top:133px;font-size:10px;font-weight:bold;color:#e0e0e0">Farbtöne</div><div class="a" style="left:1669px;top:150px;width:245px;height:115px;background:#474747;border:1px solid #2a2a2a"></div><div class="a" style="left:1669px;top:150px;width:245px;height:76px;background:#151515"></div><div class="a" style="left:1670px;top:151px;width:27px;height:75px;background:#000"></div><div class="a" style="left:1696px;top:151px;width:27px;height:14px;background:#3c3c3c"></div><div class="a" style="left:1724px;top:151px;width:26px;height:14px;background:#888888"></div><div class="a" style="left:1751px;top:151px;width:26px;height:14px;background:#c2c2c2"></div><div class="a" style="left:1778px;top:151px;width:27px;height:14px;background:#ffffff"></div><div class="a" style="left:1806px;top:151px;width:26px;height:14px;background:#ffffff"></div><div class="a" style="left:1833px;top:151px;width:26px;height:14px;background:#ffffff"></div><div class="a" style="left:1860px;top:151px;width:27px;height:14px;background:#ffffff"></div><div class="a" style="left:1888px;top:151px;width:24px;height:14px;background:#ffffff"></div><div class="a" style="left:1696px;top:166px;width:27px;height:14px;background:#352d2d"></div><div class="a" style="left:1724px;top:166px;width:26px;height:14px;background:#5d5050"></div><div class="a" style="left:1751px;top:166px;width:26px;height:14px;background:#8e7d7d"></div><div class="a" style="left:1778px;top:166px;width:27px;height:14px;background:#b9a3a3"></div><div class="a" style="left:1806px;top:166px;width:26px;height:14px;background:#c7b4b4"></div><div class="a" style="left:1833px;top:166px;width:26px;height:14px;background:#d5c8c8"></div><div class="a" style="left:1860px;top:166px;width:27px;height:14px;background:#e1d9d9"></div><div class="a" style="left:1888px;top:166px;width:24px;height:14px;background:#ede9e9"></div><div class="a" style="left:1696px;top:181px;width:27px;height:14px;background:#33322f"></div><div class="a" style="left:1724px;top:181px;width:26px;height:14px;background:#5b5a53"></div><div class="a" style="left:1751px;top:181px;width:26px;height:14px;background:#8a887b"></div><div class="a" style="left:1778px;top:181px;width:27px;height:14px;background:#b8b5a5"></div><div class="a" style="left:1806px;top:181px;width:26px;height:14px;background:#c6c3b5"></div><div class="a" style="left:1833px;top:181px;width:26px;height:14px;background:#d4d2c6"></div><div class="a" style="left:1860px;top:181px;width:27px;height:14px;background:#e1e0d8"></div><div class="a" style="left:1888px;top:181px;width:24px;height:14px;background:#eeede8"></div><div class="a" style="left:1696px;top:196px;width:27px;height:14px;background:#2e3d33"></div><div class="a" style="left:1724px;top:196px;width:26px;height:14px;background:#5a7a66"></div><div class="a" style="left:1751px;top:196px;width:26px;height:14px;background:#8fb89e"></div><div class="a" style="left:1778px;top:196px;width:27px;height:14px;background:#b9f6ca"></div><div class="a" style="left:1806px;top:196px;width:26px;height:14px;background:#c5f7d3"></div><div class="a" style="left:1833px;top:196px;width:26px;height:14px;background:#d3f9de"></div><div class="a" style="left:1860px;top:196px;width:27px;height:14px;background:#e2fbe9"></div><div class="a" style="left:1888px;top:196px;width:24px;height:14px;background:#effdf3"></div><div class="a" style="left:1696px;top:211px;width:27px;height:14px;background:#2c2c3b"></div><div class="a" style="left:1724px;top:211px;width:26px;height:14px;background:#4b4b66"></div><div class="a" style="left:1751px;top:211px;width:26px;height:14px;background:#71719a"></div><div class="a" style="left:1778px;top:211px;width:27px;height:14px;background:#9090bb"></div><div class="a" style="left:1806px;top:211px;width:26px;height:14px;background:#a4a4c8"></div><div class="a" style="left:1833px;top:211px;width:26px;height:14px;background:#b8b8d5"></div><div class="a" style="left:1860px;top:211px;width:27px;height:14px;background:#cdcde1"></div><div class="a" style="left:1888px;top:211px;width:24px;height:14px;background:#e5e5ef"></div><div class="a" style="left:1670px;top:226px;width:243px;height:38px;background:#4a4a4a"></div><svg class="a" style="left:1675px;top:269px" width="16" height="12"><rect x="0.5" y="0.5" width="12" height="9" fill="none" stroke="#c8c8c8"/><path d="M0.5 5H12.5M6.5 0.5V9.5" stroke="#c8c8c8"/><path d="M10 10H15L12.5 12Z" fill="#c8c8c8"/></svg><div class="t" style="left:1701px;top:269px;font-size:10px;color:#d8d8d8">Ohne</div><svg class="a" style="left:1853px;top:268px" width="14" height="13"><circle cx="7" cy="6.5" r="5.8" fill="#777" stroke="#bbb" stroke-width="1"/><circle cx="7" cy="6.5" r="2" fill="#444"/></svg><svg class="a" style="left:1877px;top:268px" width="18" height="13"><rect x="7" y="1" width="10" height="10" fill="#999" stroke="#ccc"/><path d="M9 1V11M12 1V11" stroke="#ddd"/><path d="M1 8H7M4 5V11" stroke="#ddd" stroke-width="2"/></svg><div class="a" style="left:1664px;top:283px;width:254px;height:4px;background:#2b2b2b"></div><div class="a" style="left:1664px;top:287px;width:254px;height:17px;background:#313131"></div><div class="a" style="left:1664px;top:287px;width:62px;height:17px;background:#4a4a4a"></div><div class="t" style="left:1671px;top:290px;font-size:9.7px;font-weight:bold;color:#e8e8e8">Farbfelder</div><div class="a" style="left:1726px;top:287px;width:54px;height:17px;background:#3b3b3b"></div><div class="t" style="left:1733px;top:290px;font-size:9.7px;font-weight:bold;color:#9a9a9a">Symbole</div><svg class="a" style="left:1900px;top:291px" width="17" height="9"><path d="M0 2H5L2.5 5Z" fill="#cfcfcf"/><path d="M6 0.5H16M6 3H16M6 5.5H16M6 8H16" stroke="#cfcfcf" stroke-width="1"/></svg><div class="a" style="left:1664px;top:304px;width:254px;height:189px;background:#4a4a4a"></div><div class="a" style="left:1669px;top:310px;width:245px;height:164px;background:#474747;border:1px solid #2a2a2a"></div><svg class="a" style="left:0;top:0" width="1920" height="400"><rect x="1669.5" y="310.5" width="224" height="56" fill="#1e1e1e"/><rect x="1669.5" y="366.5" width="14" height="14" fill="#2a2a2a"/><rect x="1670" y="311" width="13" height="13" fill="#fff"/><path d="M1670 324L1683 311" stroke="#e2001a" stroke-width="1.5"/><rect x="1684" y="311" width="13" height="13" fill="#fff"/><circle cx="1690.5" cy="317.5" r="4" fill="none" stroke="#111"/><path d="M1685 317.5H1696M1690.5 312V323" stroke="#111"/><rect x="1698" y="311" width="13" height="13" fill="#111"/><rect x="1699.5" y="312.5" width="10" height="10" fill="#fff"/><rect x="1712" y="311" width="13" height="13" fill="#231f20"/><rect x="1726" y="311" width="13" height="13" fill="#e2001a"/><rect x="1740" y="311" width="13" height="13" fill="#ffed00"/><rect x="1754" y="311" width="13" height="13" fill="#2ca043"/><rect x="1768" y="311" width="13" height="13" fill="#48a5e5"/><rect x="1782" y="311" width="13" height="13" fill="#27288e"/><rect x="1796" y="311" width="13" height="13" fill="#e5007e"/><rect x="1810" y="311" width="13" height="13" fill="#cf1430"/><rect x="1824" y="311" width="13" height="13" fill="#e6432b"/><rect x="1838" y="311" width="13" height="13" fill="#ea6520"/><rect x="1852" y="311" width="13" height="13" fill="#f09a16"/><rect x="1866" y="311" width="13" height="13" fill="#f4b426"/><rect x="1880" y="311" width="13" height="13" fill="#fdf000"/><rect x="1670" y="325" width="13" height="13" fill="#dddc00"/><rect x="1684" y="325" width="13" height="13" fill="#95c01e"/><rect x="1698" y="325" width="13" height="13" fill="#45b035"/><rect x="1712" y="325" width="13" height="13" fill="#2f9e45"/><rect x="1726" y="325" width="13" height="13" fill="#1f7a3b"/><rect x="1740" y="325" width="13" height="13" fill="#3db46d"/><rect x="1754" y="325" width="13" height="13" fill="#36a8a0"/><rect x="1768" y="325" width="13" height="13" fill="#4aa7e0"/><rect x="1782" y="325" width="13" height="13" fill="#2f75c2"/><rect x="1796" y="325" width="13" height="13" fill="#24338c"/><rect x="1810" y="325" width="13" height="13" fill="#1d276e"/><rect x="1824" y="325" width="13" height="13" fill="#662483"/><rect x="1838" y="325" width="13" height="13" fill="#8c1d82"/><rect x="1852" y="325" width="13" height="13" fill="#a31a6b"/><rect x="1866" y="325" width="13" height="13" fill="#d6004f"/><rect x="1880" y="325" width="13" height="13" fill="#e2177e"/><rect x="1670" y="339" width="13" height="13" fill="#d4c1a1"/><rect x="1684" y="339" width="13" height="13" fill="#b19d84"/><rect x="1698" y="339" width="13" height="13" fill="#8c7b69"/><rect x="1712" y="339" width="13" height="13" fill="#6d5a4a"/><rect x="1726" y="339" width="13" height="13" fill="#c9a46c"/><rect x="1740" y="339" width="13" height="13" fill="#c08f55"/><rect x="1754" y="339" width="13" height="13" fill="#a87440"/><rect x="1768" y="339" width="13" height="13" fill="#8d5a2b"/><rect x="1782" y="339" width="13" height="13" fill="#6b3f14"/><rect x="1796" y="339" width="13" height="13" fill="#4a2b18"/><defs><linearGradient id="g1" x1="0" x2="1"><stop offset="0" stop-color="#fff"/><stop offset="1" stop-color="#111"/></linearGradient><linearGradient id="g2" x1="0" x2="1"><stop offset="0" stop-color="#ffe000"/><stop offset="1" stop-color="#e85a10"/></linearGradient></defs><rect x="1810" y="339" width="13" height="13" fill="url(#g1)"/><rect x="1824" y="339" width="13" height="13" fill="url(#g2)"/><rect x="1838" y="339" width="13" height="13" fill="#4a8fd8"/><rect x="1852" y="339" width="13" height="13" fill="#1e1412"/><rect x="1866" y="339" width="13" height="13" fill="#cfe3b0"/><circle cx="1872.5" cy="345.5" r="4" fill="#5aa52a"/><rect x="1880" y="339" width="13" height="13" fill="#d8c6b0"/><path d="M1882 342h3v2h-3zM1887 346h3v3h-3zM1883 347h2v2h-2z" fill="#9a6a40"/><rect x="1670" y="353" width="13" height="13" fill="#2b1f1f"/><rect x="1684" y="353" width="13" height="13" fill="#3f3838"/><rect x="1698" y="353" width="13" height="13" fill="#575757"/><rect x="1712" y="353" width="13" height="13" fill="#6f6f6f"/><rect x="1726" y="353" width="13" height="13" fill="#878787"/><rect x="1740" y="353" width="13" height="13" fill="#9f9f9f"/><rect x="1754" y="353" width="13" height="13" fill="#b7b7b7"/><rect x="1768" y="353" width="13" height="13" fill="#cdcdcd"/><rect x="1782" y="353" width="13" height="13" fill="#dedede"/><rect x="1796" y="353" width="13" height="13" fill="#eeeeee"/><rect x="1810" y="353" width="13" height="13" fill="#ffffff"/><rect x="1824" y="353" width="13" height="13" fill="#e2001a"/><rect x="1838" y="353" width="13" height="13" fill="#e8710f"/><rect x="1852" y="353" width="13" height="13" fill="#ffe400"/><rect x="1866" y="353" width="13" height="13" fill="#39a03e"/><rect x="1880" y="353" width="13" height="13" fill="#1f3e9c"/><rect x="1670" y="367" width="13" height="13" fill="#7a2b9c"/></svg><div class="a" style="left:1900px;top:311px;width:13px;height:162px;background:#3e3e3e"></div><svg class="a" style="left:1902px;top:315px" width="8" height="5"><path d="M0 5H8L4.0 0Z" fill="#6a6a6a"/></svg><svg class="a" style="left:1902px;top:465px" width="8" height="5"><path d="M0 0H8L4.0 5Z" fill="#6a6a6a"/></svg><svg class="a" style="left:1672px;top:478px" width="220" height="13"><path d="M1.5 1V11M4 1V11M6 1L10 11" stroke="#c8c8c8" stroke-width="1.5"/><path d="M9 9H14L11.5 12Z" fill="#c8c8c8"/><circle cx="33" cy="6" r="3" fill="none" stroke="#c8c8c8" stroke-width="1.4"/><path d="M35 4L38 1M35 8L38 11" stroke="#c8c8c8" stroke-width="1.4"/><rect x="102.5" y="1.5" width="10" height="9" fill="none" stroke="#c8c8c8"/><path d="M102.5 5H112.5M102.5 8H112.5M106 1.5V10.5M109 1.5V10.5" stroke="#c8c8c8"/><path d="M110 10H115L112.5 12.5Z" fill="#c8c8c8"/><rect x="130.5" y="1.5" width="10" height="9" fill="none" stroke="#c8c8c8"/><path d="M132 4H139M132 6H139M132 8H139" stroke="#c8c8c8"/><path d="M156 3H161L162 4H168V11H156Z" fill="#c8c8c8"/><path d="M183 2H192V11H186V7H182Z" fill="#c8c8c8"/><path d="M181 7H186V12" fill="none" stroke="#c8c8c8"/><path d="M206 3H217M209 3V1.5H214V3M207 4H216L215 12H208Z" fill="none" stroke="#c8c8c8" stroke-width="1.1"/><path d="M210 5V11M213 5V11" stroke="#c8c8c8"/></svg><div class="a" style="left:1664px;top:493px;width:254px;height:4px;background:#2b2b2b"></div><div class="a" style="left:1664px;top:497px;width:254px;height:16px;background:#313131"></div><div class="a" style="left:1664px;top:497px;width:49px;height:16px;background:#3b3b3b"></div><div class="t" style="left:1671px;top:500px;font-size:9.7px;font-weight:bold;color:#9a9a9a">Verlauf</div><div class="a" style="left:1713px;top:497px;width:77px;height:16px;background:#4a4a4a"></div><svg class="a" style="left:1718px;top:500px" width="6" height="10"><path d="M0.5 4L3 1L5.5 4M0.5 6L3 9L5.5 6" fill="none" stroke="#d8d8d8" stroke-width="1.1"/></svg><div class="t" style="left:1725px;top:500px;font-size:9.7px;font-weight:bold;color:#e8e8e8">Transparenz</div><svg class="a" style="left:1900px;top:501px" width="17" height="9"><path d="M0 2H5L2.5 5Z" fill="#cfcfcf"/><path d="M6 0.5H16M6 3H16M6 5.5H16M6 8H16" stroke="#cfcfcf" stroke-width="1"/></svg><div class="a" style="left:1664px;top:513px;width:254px;height:105px;background:#4a4a4a"></div><div class="a" style="left:1671px;top:521px;width:113px;height:19px;background:#555;border:1px solid #383838;border-radius:2px"></div><div class="a" style="left:1767px;top:522px;width:1px;height:17px;background:#3a3a3a"></div><div class="t" style="left:1677px;top:525px;font-size:10px;color:#e6e6e6">Normal</div><svg class="a" style="left:1772px;top:528px" width="8" height="5"><path d="M0 0H8L4.0 5Z" fill="#ddd"/></svg><div class="t" style="left:1801px;top:525px;font-size:10px;color:#e6e6e6">Deckkraft:</div><div class="a" style="left:1852px;top:521px;width:46px;height:19px;background:#b8b8b8"></div><div class="t" style="left:1854px;top:526px;font-size:10px;color:#111">100%</div><div class="a" style="left:1898px;top:521px;width:14px;height:19px;background:#555;border:1px solid #383838"></div><svg class="a" style="left:1901px;top:528px" width="8" height="5"><path d="M0 0H8L4.0 5Z" fill="#ddd"/></svg><div class="a" style="left:1670px;top:546px;width:243px;height:1px;background:#3c3c3c"></div><div class="a" style="left:1671px;top:555px;width:130px;height:56px;background:#4a4a4a;border:1px solid #2e2e2e;border-radius:2px"></div><div class="a" style="left:1807px;top:555px;width:105px;height:17px;background:#4e4e4e;border:1px solid #3e3e3e"></div><div class="t" style="left:1825px;top:559px;font-size:10px;color:#7c7c7c">Maske erstellen</div><div class="a" style="left:1807px;top:581px;width:11px;height:11px;border:1px solid #3a3a3a;background:#474747"></div><div class="t" style="left:1823px;top:580px;font-size:10px;color:#7c7c7c">Maskieren</div><div class="a" style="left:1807px;top:600px;width:11px;height:11px;border:1px solid #3a3a3a;background:#474747"></div><div class="t" style="left:1823px;top:600px;font-size:10px;color:#7c7c7c">Umkehren</div><div class="a" style="left:1664px;top:618px;width:254px;height:4px;background:#2b2b2b"></div><div class="a" style="left:1664px;top:622px;width:254px;height:17px;background:#313131"></div><div class="a" style="left:1664px;top:622px;width:63px;height:17px;background:#4a4a4a"></div><div class="t" style="left:1671px;top:625px;font-size:9.7px;font-weight:bold;color:#e8e8e8">Grafikstile</div><svg class="a" style="left:1900px;top:626px" width="17" height="9"><path d="M0 2H5L2.5 5Z" fill="#cfcfcf"/><path d="M6 0.5H16M6 3H16M6 5.5H16M6 8H16" stroke="#cfcfcf" stroke-width="1"/></svg><div class="a" style="left:1664px;top:639px;width:254px;height:191px;background:#4a4a4a"></div><div class="a" style="left:1669px;top:645px;width:245px;height:164px;background:#474747;border:1px solid #2a2a2a"></div><svg class="a" style="left:0;top:0" width="1920" height="720"><rect x="1670" y="646" width="32" height="32" fill="#e2e2e2"/><rect x="1674.5" y="650.5" width="23" height="23" fill="#fff" stroke="#555"/><rect x="1673" y="669" width="6" height="6" fill="#fff" stroke="#111"/><rect x="1676" y="672" width="6" height="6" fill="none" stroke="#111"/><rect x="1703" y="646" width="32" height="32" fill="#e2e2e2"/><rect x="1707.5" y="650.5" width="23" height="23" fill="#fff" stroke="#555"/><rect x="1736" y="646" width="32" height="32" fill="#e2e2e2"/><rect x="1740.5" y="650.5" width="23" height="23" fill="#fff" stroke="#555"/><rect x="1769" y="646" width="32" height="32" fill="#e2e2e2"/><rect x="1774.5" y="660.5" width="12" height="11" fill="#fff" stroke="#bbb"/><rect x="1786.5" y="656.5" width="12" height="11" fill="#fff" stroke="#888"/><rect x="1774" y="668" width="7" height="7" fill="#fff" stroke="#333"/><path d="M1774 675L1781 668" stroke="#e2001a" stroke-width="1.6"/><rect x="1802" y="646" width="32" height="32" fill="#e2e2e2"/><defs><radialGradient id="gs4" cx="0.45" cy="0.4"><stop offset="0" stop-color="#f2f2f2"/><stop offset="0.6" stop-color="#dadada"/><stop offset="1" stop-color="#a8a8a8"/></radialGradient><linearGradient id="gs5" x1="0.2" y1="0" x2="0.6" y2="1"><stop offset="0" stop-color="#d8ecfa"/><stop offset="0.5" stop-color="#7ab4ec"/><stop offset="1" stop-color="#2d64c8"/></linearGradient><linearGradient id="gs6" x1="0" y1="0" x2="1" y2="1"><stop offset="0" stop-color="#7cc030"/><stop offset="0.5" stop-color="#b8d818"/><stop offset="1" stop-color="#f0c000"/></linearGradient></defs><rect x="1806" y="650" width="24" height="24" fill="url(#gs4)"/><rect x="1835" y="646" width="32" height="32" fill="#e2e2e2"/><rect x="1839" y="650" width="24" height="24" fill="url(#gs5)"/><rect x="1868" y="646" width="32" height="32" fill="#e2e2e2"/><rect x="1872" y="650" width="24" height="24" fill="url(#gs6)"/><path d="M1876 670C1882 660 1886 666 1894 654" stroke="#3a9a30" stroke-width="3" fill="none"/><rect x="1670" y="679" width="32" height="32" fill="#e2e2e2"/><rect x="1674" y="683" width="24" height="24" fill="#2e4a50"/><path d="M1678 705C1682 695 1678 689 1684 685M1682 697C1688 693 1694 697 1696 691M1688 705C1690 701 1696 703 1698 699" stroke="#5aa8d8" stroke-width="3" fill="none"/></svg><div class="a" style="left:1900px;top:646px;width:13px;height:162px;background:#3e3e3e"></div><svg class="a" style="left:1902px;top:650px" width="8" height="5"><path d="M0 5H8L4.0 0Z" fill="#777"/></svg><svg class="a" style="left:1902px;top:799px" width="8" height="5"><path d="M0 0H8L4.0 5Z" fill="#6a6a6a"/></svg><svg class="a" style="left:1672px;top:813px" width="220" height="13"><path d="M1.5 1V11M4 1V11M6 1L10 11" stroke="#c8c8c8" stroke-width="1.5"/><path d="M9 9H14L11.5 12Z" fill="#c8c8c8"/><path d="M158 4H164M158 8H164M156 6H166" stroke="#6c6c6c" stroke-width="1.5"/><path d="M183 2H192V11H186V7H182Z" fill="#c8c8c8"/><path d="M206 3H217M207 4H216L215 12H208Z" fill="none" stroke="#6c6c6c" stroke-width="1.1"/></svg><div class="a" style="left:1664px;top:830px;width:254px;height:3px;background:#2b2b2b"></div><div class="a" style="left:1664px;top:833px;width:254px;height:15px;background:#313131"></div><div class="a" style="left:1664px;top:833px;width:84px;height:15px;background:#4a4a4a"></div><div class="t" style="left:1671px;top:836px;font-size:9.7px;font-weight:bold;color:#e8e8e8">Zeichenflächen</div><svg class="a" style="left:1900px;top:837px" width="17" height="9"><path d="M0 2H5L2.5 5Z" fill="#cfcfcf"/><path d="M6 0.5H16M6 3H16M6 5.5H16M6 8H16" stroke="#cfcfcf" stroke-width="1"/></svg><div class="a" style="left:1664px;top:848px;width:254px;height:193px;background:#4a4a4a"></div><div class="a" style="left:1669px;top:855px;width:245px;height:165px;background:#474747;border:1px solid #2a2a2a"></div><div class="a" style="left:1670px;top:856px;width:243px;height:19px;background:#5a6478"></div><div class="a" style="left:1700px;top:856px;width:1px;height:19px;background:#3a4050"></div><div class="a" style="left:1873px;top:856px;width:1px;height:19px;background:#3a4050"></div><div class="t" style="left:1676px;top:860px;font-size:10px;color:#e8e8e8">1</div><div class="t" style="left:1706px;top:860px;font-size:10px;color:#e8e8e8">Zeichenfläche 2</div><svg class="a" style="left:1879px;top:858px" width="14" height="15"><rect x="3.5" y="2.5" width="7" height="10" fill="none" stroke="#ddd" stroke-dasharray="1.5 1"/><path d="M1 3H13M1 12H13" stroke="#ccc" stroke-dasharray="1 1"/></svg><div class="t" style="left:1670px;top:1024px;font-size:10px;color:#e0e0e0">1 Zeichenfläche</div><svg class="a" style="left:1800px;top:1022px" width="95" height="14"><path d="M7 1L12 6H9V12H5V6H2Z" fill="#6a6a6a"/><path d="M33 12L38 7H35V1H31V7H28Z" fill="#6a6a6a"/><path d="M55 2H64V11H58V7H54Z" fill="#c8c8c8"/><path d="M78 3H89M79 4H88L87 12H80Z" fill="none" stroke="#6c6c6c" stroke-width="1.1"/></svg><div class="a" style="left:0;top:1039px;width:1920px;height:2px;background:#1c2530"></div>
</body></html>
